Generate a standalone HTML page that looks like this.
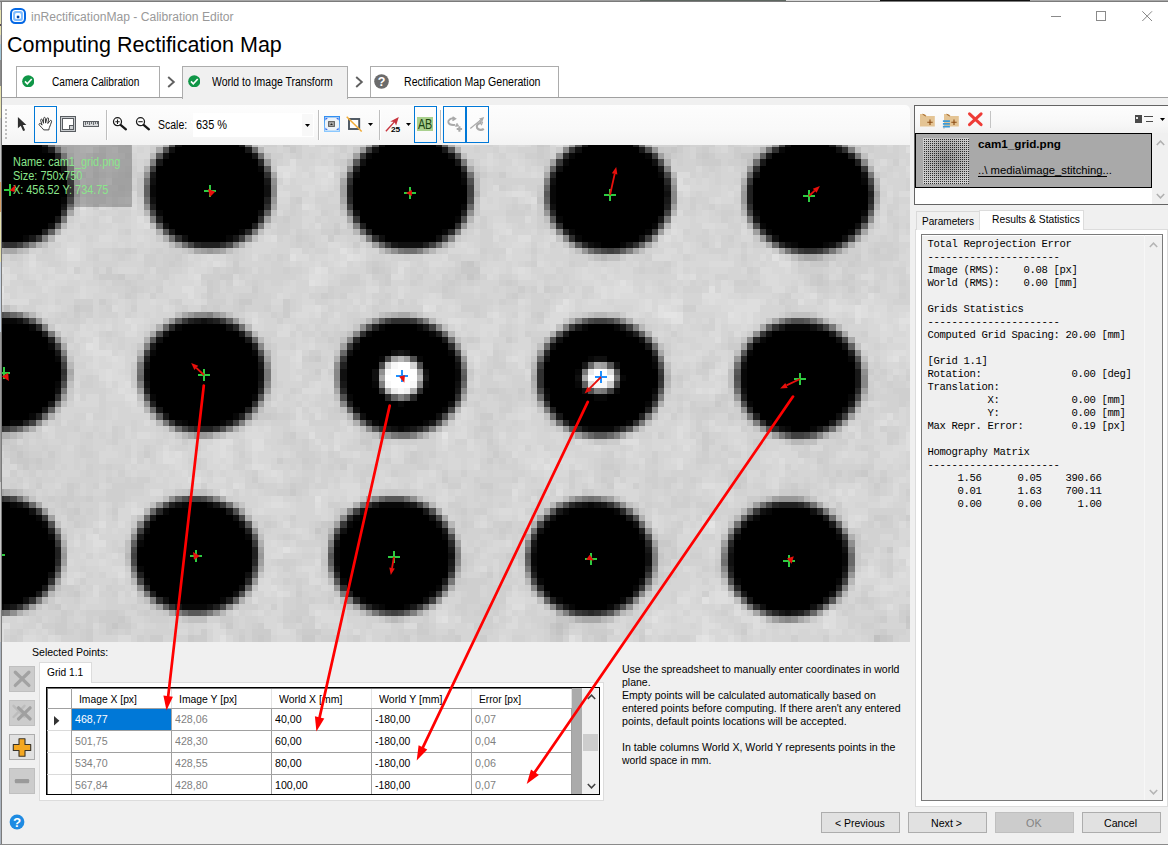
<!DOCTYPE html>
<html><head><meta charset="utf-8"><title>inRectificationMap - Calibration Editor</title>
<style>
html,body{margin:0;padding:0;background:#fff}
body{width:1168px;height:845px;overflow:hidden;position:relative;font-family:"Liberation Sans", sans-serif}
#app{position:absolute;left:0;top:0;width:1168px;height:845px;overflow:hidden;background:#fff}
#app>div,#app>svg,#app>pre,#app>span{position:absolute;display:block}
.t{white-space:pre;transform-origin:0 50%}
</style></head><body><div id="app">
<div style="left:0px;top:0px;width:1168px;height:1px;background:linear-gradient(90deg,#a6a6a6 0 560px,#9c9c9c 560px 640px,#5d6660 640px 786px,#d9d9d9 786px 880px,#111 880px 1030px,#a9a9a9 1030px)"></div>
<div style="left:0px;top:1px;width:1168px;height:1px;background:#7b7b7b"></div>
<div style="left:0px;top:2px;width:1px;height:842px;background:linear-gradient(180deg,#bdbdbd 0 8px,#e6e2ae 8px 22px,#5a4a55 22px 24px,#e6e2ae 24px 33px,#c9c9c9 33px 42px,#9fc4d6 42px 58px,#8b8b8b 58px 84px,#e6e2ae 84px 116px,#c8c8c8 116px 180px,#d9a066 180px 210px,#e6e2ae 210px 260px,#c8d4e2 260px 330px,#9a9a9a 330px 480px,#c7c7c7 480px 640px,#aab4c0 640px)"></div>
<div style="left:1px;top:2px;width:1px;height:842px;background:#7b7b7b"></div>
<div style="left:0px;top:844px;width:1168px;height:1px;background:#8a8a8a"></div>
<svg style="left:10px;top:7.8px" width="16" height="16" viewBox="0 0 16 16"><rect width="16" height="16" rx="5.2" fill="#0568e4"/><rect x="2" y="2" width="12" height="12" rx="3.4" fill="#fff"/><rect x="3.1" y="3.1" width="9.8" height="9.8" rx="2.6" fill="#7fbcff"/><rect x="5" y="5" width="6" height="6" rx="1.6" fill="#fff"/><path d="M6.600 8.200a1.400 1.300 0 0 1 2.800 0z" fill="#8ec4ff"/><rect x="6.800" y="7.900" width="2.500" height="2.300" rx="0.500" fill="#003f9e"/></svg>
<svg style="left:1040px;top:2px" width="128" height="28" viewBox="0 0 128 28" shape-rendering="crispEdges"><g fill="none" stroke="#8a8a8a" stroke-width="1"><path d="M11 14.500h10"/><rect x="56.500" y="9.500" width="9" height="9"/></g><path d="M102.300 9.300l9.700 9.700m0-9.700l-9.700 9.700" stroke="#858585" stroke-width="1" fill="none" shape-rendering="auto"/></svg>
<div style="left:16px;top:66px;width:144px;height:31px;background:#fff;border:1px solid #acacac;border-bottom:none;box-sizing:border-box"></div>
<div style="left:370px;top:66px;width:189px;height:31px;background:#fff;border:1px solid #acacac;border-bottom:none;box-sizing:border-box"></div>
<div style="left:2px;top:97px;width:1166px;height:747px;background:#f0f0f0;border-top:1px solid #a0a0a0;box-sizing:border-box"></div>
<div style="left:182px;top:66px;width:166px;height:33px;background:#f0f0f0;border:1px solid #acacac;border-bottom:none;box-sizing:border-box"></div>
<svg style="left:167px;top:76px" width="9" height="12" viewBox="0 0 9 12"><path d="M1.2 1l5.6 5-5.6 5" fill="none" stroke="#606060" stroke-width="1.9"/></svg>
<svg style="left:355px;top:76px" width="9" height="12" viewBox="0 0 9 12"><path d="M1.2 1l5.6 5-5.6 5" fill="none" stroke="#606060" stroke-width="1.9"/></svg>
<svg style="left:21.7px;top:74.700px" width="12.500" height="12.500" viewBox="0 0 13 13"><circle cx="6.5" cy="6.5" r="6.3" fill="#109647"/><path d="M3.1 6.6l2.4 2.5 4.6-4.9" fill="none" stroke="#fff" stroke-width="1.7"/></svg>
<svg style="left:187.7px;top:74.700px" width="12.500" height="12.500" viewBox="0 0 13 13"><circle cx="6.5" cy="6.5" r="6.3" fill="#109647"/><path d="M3.1 6.6l2.4 2.5 4.6-4.9" fill="none" stroke="#fff" stroke-width="1.7"/></svg>
<svg style="left:374px;top:74px" width="15" height="15" viewBox="0 0 15 15"><circle cx="7.5" cy="7.5" r="7.3" fill="#6b6b6b"/><text x="7.5" y="12" text-anchor="middle" font-family="Liberation Sans, sans-serif" font-weight="bold" font-size="12.5" fill="#fff">?</text></svg>
<div style="left:2px;top:105px;width:908px;height:40px;background:linear-gradient(180deg,#fdfdfd,#f9f9f9 60%,#f3f3f3);border-radius:0 5px 0 0"></div>
<svg style="left:5px;top:109px" width="3" height="32" viewBox="0 0 3 32" shape-rendering="crispEdges"><rect x="0" y="0" width="2" height="2" fill="#bdbdbd"/><rect x="0" y="4" width="2" height="2" fill="#bdbdbd"/><rect x="0" y="8" width="2" height="2" fill="#bdbdbd"/><rect x="0" y="12" width="2" height="2" fill="#bdbdbd"/><rect x="0" y="16" width="2" height="2" fill="#bdbdbd"/><rect x="0" y="20" width="2" height="2" fill="#bdbdbd"/><rect x="0" y="24" width="2" height="2" fill="#bdbdbd"/><rect x="0" y="28" width="2" height="2" fill="#bdbdbd"/></svg>
<div style="left:106px;top:110px;width:2px;height:30px;background:linear-gradient(90deg,#bebebe 50%,#fff 50%)"></div>
<div style="left:318px;top:110px;width:2px;height:30px;background:linear-gradient(90deg,#bebebe 50%,#fff 50%)"></div>
<div style="left:379px;top:110px;width:2px;height:30px;background:linear-gradient(90deg,#bebebe 50%,#fff 50%)"></div>
<div style="left:440px;top:110px;width:2px;height:30px;background:linear-gradient(90deg,#bebebe 50%,#fff 50%)"></div>
<div style="left:34px;top:106px;width:23px;height:37px;border:1px solid #0078d7;box-sizing:border-box;background:rgba(255,255,255,.35)"></div>
<div style="left:414px;top:106px;width:23px;height:37px;border:1px solid #0078d7;box-sizing:border-box;background:rgba(255,255,255,.35)"></div>
<div style="left:443px;top:106px;width:23px;height:37px;border:1px solid #0078d7;box-sizing:border-box;background:rgba(255,255,255,.35)"></div>
<div style="left:466px;top:106px;width:23px;height:37px;border:1px solid #0078d7;box-sizing:border-box;background:rgba(255,255,255,.35)"></div>
<svg style="left:17px;top:116px" width="11" height="16" viewBox="0 0 11 16"><path d="M0.9 0.9v11.3l2.9-2.4 2.3 5.3 2-0.9-2.3-5.2h3.6z" fill="#2e2e2e"/></svg>
<svg style="left:38px;top:116px" width="15" height="15" viewBox="0 0 15 15"><path d="M5.700 13.900C4.800 12.300 3.200 10.900 1.600 9.500C0.400 8.400 1.300 6.900 2.600 7.700L4.100 9.100L2.700 4.500C2.300 3 4 2.600 4.400 3.900L5.500 7.300L5.600 2.500C5.600 1 7.400 1 7.400 2.500L7.600 7.100L8.800 2.700C9.100 1.300 10.900 1.700 10.600 3.100L9.800 7.500L11.900 4.800C12.700 3.800 14.100 4.600 13.500 5.800C12.600 7.900 12.400 9.700 11.400 11.500C11 12.300 10.900 13.100 10.900 13.900z" fill="#fff" stroke="#2f2f2f" stroke-width="0.950" stroke-linejoin="round"/></svg>
<svg style="left:60px;top:116px" width="16" height="16" viewBox="0 0 16 16" shape-rendering="crispEdges"><rect x="0.5" y="0.5" width="15" height="15" fill="#c9cccf" stroke="#585c60"/><rect x="2.500" y="2.500" width="11" height="11" fill="#fff" stroke="#585c60"/><rect x="9.500" y="9.500" width="4" height="4" fill="#cfd2d4" stroke="#585c60"/></svg>
<svg style="left:83px;top:121px" width="16" height="6" viewBox="0 0 16 6" shape-rendering="crispEdges"><rect x="0.5" y="0.5" width="15" height="5" fill="#d6d8da" stroke="#5a5e62"/><path d="M2.500 1v3M4.500 1v2M6.500 1v3M8.500 1v2M10.500 1v3M12.500 1v2M14 1v2" stroke="#6a6e72" fill="none"/></svg>
<svg style="left:112px;top:116px" width="16" height="16" viewBox="0 0 16 16"><circle cx="5.5" cy="5.700" r="4" fill="#fff" stroke="#1a1a1a" stroke-width="1.250"/><path d="M8.600 8.900l5.300 4.400" stroke="#1a1a1a" stroke-width="2.300" stroke-linecap="round"/><path d="M3.300 5.700h4.400M5.500 3.500v4.400" stroke="#1a1a1a" stroke-width="1.100" fill="none"/></svg>
<svg style="left:134.9px;top:116px" width="16" height="16" viewBox="0 0 16 16"><circle cx="5.5" cy="5.700" r="4" fill="#fff" stroke="#1a1a1a" stroke-width="1.250"/><path d="M8.600 8.900l5.300 4.400" stroke="#1a1a1a" stroke-width="2.300" stroke-linecap="round"/><path d="M3.300 5.700h4.400" stroke="#1a1a1a" stroke-width="1.100" fill="none"/></svg>
<svg style="left:324px;top:116px" width="16" height="16" viewBox="0 0 16 16"><defs><linearGradient id="fg" x1="0" y1="0" x2="0" y2="1"><stop offset="0" stop-color="#2f8df0"/><stop offset="1" stop-color="#8ecaff"/></linearGradient></defs><rect width="16" height="16" fill="url(#fg)"/><rect x="1" y="1.400" width="14" height="13.200" fill="#edf2f7"/><path d="M1.400 1.900h2.500l-2.500 2.500zM14.600 1.900h-2.500l2.500 2.500zM1.400 14.100h2.500l-2.500-2.500zM14.600 14.100h-2.500l2.500-2.500z" fill="#3a70f0"/><rect x="4.600" y="5.600" width="5.800" height="4.800" fill="#a8a8a8" stroke="#5a5a5a" stroke-width="1"/><path d="M6.100 8.900h2.800l-1.400-1.700z" fill="#222"/></svg>
<svg style="left:346px;top:116px" width="17" height="17" viewBox="0 0 17 17"><rect x="3" y="3" width="10.200" height="10" fill="#fdfdfd" stroke="#4b5560" stroke-width="1.900"/><path d="M0.700 0.700l15 14.800" stroke="#f2ab35" stroke-width="1.500"/></svg>
<svg style="left:385px;top:116px" width="17" height="17" viewBox="0 0 17 17"><path d="M0.900 15.200L9.600 5.600" stroke="#c8343e" stroke-width="1.400"/><path d="M13.800 1l-2.700 8.400-1.600-3.400-4.300-0.500z" fill="#c8343e"/><text x="5.900" y="15.700" font-family="Liberation Sans, sans-serif" font-size="7.600" font-weight="bold" fill="#000" textLength="9.300" lengthAdjust="spacingAndGlyphs">25</text></svg>
<svg style="left:417px;top:117px" width="16" height="14" viewBox="0 0 16 14"><rect width="16" height="14" fill="#a9d08e"/><text x="0.900" y="12.100" font-family="Liberation Sans, sans-serif" font-size="14.200" fill="#1b4211" textLength="14.400" lengthAdjust="spacingAndGlyphs">AB</text></svg>
<svg style="left:446px;top:116px" width="17" height="17" viewBox="0 0 17 17" fill="none" stroke="#a9a9a9"><path d="M8.300 2.600C4.500 1.700 1.600 4.400 2.400 6.600c.700 2 3.500 2.700 6.800 2.300" stroke-width="1.900"/><path d="M9.700 1l-3.100 1.900 3 1.800" stroke-width="1.300" fill="#a9a9a9" transform="rotate(180 8.100 2.800)"/><path d="M11 7.300l1.600 2.600-3.100.5z" fill="#a9a9a9" stroke-width="0.800"/><path d="M13.400 10.300v5.400M10.700 13h5.400" stroke-width="2.100"/></svg>
<svg style="left:469px;top:116px" width="17" height="17" viewBox="0 0 17 17" fill="none" stroke="#a9a9a9"><path d="M1.300 12.500L13.300 2.600" stroke-width="1.200"/><path d="M15.200 1.100l-2 4.700-3.100-3.200z" fill="#a9a9a9" stroke="none"/><path d="M12.400 7.200c-3.600-.700-5.600 2.700-4.200 4.900 1.300 2 4.500 2.300 6.600.700" stroke-width="2.200"/><path d="M10.200 4.800l3.200 1.400-1.100 3" stroke-width="1.200"/></svg>
<div style="left:193px;top:113px;width:121px;height:24px;background:#fff"></div>
<div style="left:302px;top:114px;width:11px;height:22px;background:#f8f8f8"></div>
<svg style="left:305px;top:124px" width="5" height="3" viewBox="0 0 5 3"><path d="M0 0h5L2.5 3z" fill="#000"/></svg>
<svg style="left:368px;top:123px" width="5" height="3" viewBox="0 0 5 3"><path d="M0 0h5L2.5 3z" fill="#000"/></svg>
<svg style="left:406px;top:123px" width="5" height="3" viewBox="0 0 5 3"><path d="M0 0h5L2.5 3z" fill="#000"/></svg>
<svg style="left:2px;top:145px" width="908" height="497" viewBox="0 0 908 497" shape-rendering="crispEdges"><rect width="908" height="497" fill="rgb(213,213,213)"/>
<path fill="rgb(0,0,0)" d="m0 0h40v2h-40zm180 0h57v2h-57zm203 0h51v2h-51zm203 0h45v2h-45zm203 0h38v2h-38zm-789 2h40v6h-40zm173 0h70v6h-70zm204 0h63v6h-63zm203 0h57v6h-57zm203 0h51v6h-51zm-783 6h53v6h-53zm167 0h83v6h-83zm203 0h76v6h-76zm203 0h70v6h-70zm197 0h76v6h-76zm-770 6h53v7h-53zm161 0h95v7h-95zm203 0h89v7h-89zm203 0h83v7h-83zm197 0h89v7h-89zm-764 7h59v6h-59zm154 0h102v6h-102zm204 0h101v6h-101zm203 0h95v6h-95zm197 0h101v6h-101zm-758 6h59v6h-59zm154 0h108v6h-108zm204 0h101v6h-101zm196 0h102v6h-102zm204 0h101v6h-101zm-758 6h65v7h-65zm154 0h108v7h-108zm197 0h108v7h-108zm203 0h108v7h-108zm197 0h108v7h-108zm-751 7h65v6h-65zm154 0h108v6h-108zm197 0h114v6h-114zm203 0h108v6h-108zm197 0h115v6h-115zm-751 6h65v6h-65zm154 0h108v6h-108zm197 0h114v6h-114zm203 0h108v6h-108zm197 0h115v6h-115zm-751 6h59v7h-59zm154 0h108v7h-108zm197 0h114v7h-114zm203 0h108v7h-108zm197 0h115v7h-115zm-751 7h59v6h-59zm154 0h108v6h-108zm197 0h108v6h-108zm203 0h108v6h-108zm197 0h115v6h-115zm-751 6h59v6h-59zm161 0h95v6h-95zm197 0h101v6h-101zm196 0h108v6h-108zm204 0h101v6h-101zm-758 6h53v7h-53zm161 0h95v7h-95zm197 0h95v7h-95zm203 0h95v7h-95zm197 0h101v7h-101zm-758 7h46v6h-46zm167 0h83v6h-83zm197 0h89v6h-89zm197 0h89v6h-89zm203 0h89v6h-89zm-764 6h40v6h-40zm173 0h64v6h-64zm197 0h70v6h-70zm203 0h70v6h-70zm197 0h76v6h-76zm-770 6h21v7h-21zm186 0h38v7h-38zm197 0h51v7h-51zm197 0h57v7h-57zm197 0h63v7h-63zm-178 7h19v6h-19zm197 0h25v6h-25zm-796 82h27v7h-27zm180 0h44v7h-44zm203 0h32v7h-32zm203 0h26v7h-26zm-586 7h40v6h-40zm167 0h70v6h-70zm203 0h57v6h-57zm197 0h57v6h-57zm203 0h57v6h-57zm-770 6h46v6h-46zm161 0h82v6h-82zm197 0h82v6h-82zm203 0h76v6h-76zm203 0h70v6h-70zm-764 6h46v7h-46zm154 0h96v7h-96zm204 0h88v7h-88zm196 0h89v7h-89zm197 0h89v7h-89zm-751 7h53v6h-53zm154 0h96v6h-96zm197 0h38v6h-38zm57 0h38v6h-38zm140 0h102v6h-102zm203 0h95v6h-95zm-751 6h53v6h-53zm148 0h108v6h-108zm197 0h32v6h-32zm76 0h32v6h-32zm127 0h38v6h-38zm57 0h45v6h-45zm140 0h101v6h-101zm-745 6h59v7h-59zm148 0h108v7h-108zm197 0h32v7h-32zm76 0h32v7h-32zm121 0h38v7h-38zm76 0h32v7h-32zm127 0h108v7h-108zm-745 7h59v6h-59zm148 0h108v6h-108zm197 0h25v6h-25zm82 0h26v6h-26zm115 0h31v6h-31zm76 0h38v6h-38zm127 0h108v6h-108zm-745 6h59v6h-59zm148 0h108v6h-108zm197 0h25v6h-25zm82 0h26v6h-26zm115 0h31v6h-31zm82 0h32v6h-32zm121 0h108v6h-108zm-745 6h53v7h-53zm148 0h108v7h-108zm197 0h25v7h-25zm82 0h26v7h-26zm115 0h31v7h-31zm76 0h38v7h-38zm127 0h108v7h-108zm-745 7h53v6h-53zm148 0h108v6h-108zm197 0h32v6h-32zm76 0h32v6h-32zm127 0h32v6h-32zm70 0h32v6h-32zm127 0h108v6h-108zm-745 6h53v7h-53zm154 0h96v7h-96zm197 0h32v7h-32zm64 0h38v7h-38zm133 0h44v7h-44zm57 0h45v7h-45zm140 0h101v7h-101zm-745 7h46v6h-46zm154 0h96v6h-96zm197 0h45v6h-45zm51 0h44v6h-44zm146 0h95v6h-95zm203 0h95v6h-95zm-751 6h40v6h-40zm161 0h82v6h-82zm197 0h82v6h-82zm196 0h89v6h-89zm197 0h89v6h-89zm-751 6h27v7h-27zm167 0h64v7h-64zm197 0h70v7h-70zm197 0h76v7h-76zm197 0h76v7h-76zm-758 7h8v6h-8zm186 0h32v6h-32zm191 0h44v6h-44zm196 0h51v6h-51zm197 0h57v6h-57zm19 6h19v6h-19zm-789 76h8v6h-8zm186 0h19v6h-19zm-186 6h27v7h-27zm167 0h57v7h-57zm197 0h57v7h-57zm203 0h45v7h-45zm203 0h38v7h-38zm-770 7h34v6h-34zm154 0h77v6h-77zm204 0h69v6h-69zm196 0h70v6h-70zm204 0h63v6h-63zm-758 6h40v7h-40zm148 0h89v7h-89zm203 0h83v7h-83zm197 0h83v7h-83zm197 0h82v7h-82zm-745 7h46v6h-46zm148 0h95v6h-95zm197 0h95v6h-95zm197 0h95v6h-95zm197 0h95v6h-95zm-739 6h46v6h-46zm142 0h101v6h-101zm196 0h102v6h-102zm197 0h102v6h-102zm204 0h95v6h-95zm-739 6h53v7h-53zm142 0h108v7h-108zm196 0h108v7h-108zm197 0h108v7h-108zm197 0h108v7h-108zm-732 7h53v6h-53zm135 0h115v6h-115zm203 0h108v6h-108zm197 0h108v6h-108zm197 0h108v6h-108zm-732 6h53v6h-53zm135 0h115v6h-115zm203 0h108v6h-108zm197 0h108v6h-108zm197 0h108v6h-108zm-732 6h53v7h-53zm135 0h115v7h-115zm203 0h108v7h-108zm197 0h108v7h-108zm197 0h108v7h-108zm-732 7h53v6h-53zm142 0h108v6h-108zm196 0h108v6h-108zm197 0h108v6h-108zm197 0h108v6h-108zm-732 6h46v6h-46zm142 0h101v6h-101zm196 0h108v6h-108zm197 0h108v6h-108zm197 0h108v6h-108zm-732 6h46v7h-46zm148 0h95v7h-95zm197 0h95v7h-95zm197 0h95v7h-95zm197 0h95v7h-95zm-739 7h40v6h-40zm148 0h89v6h-89zm197 0h89v6h-89zm197 0h89v6h-89zm197 0h95v6h-95zm-739 6h34v6h-34zm154 0h77v6h-77zm197 0h76v6h-76zm197 0h83v6h-83zm197 0h82v6h-82zm-745 6h21v7h-21zm167 0h51v7h-51zm197 0h57v7h-57zm197 0h57v7h-57zm190 0h70v7h-70zm-368 7h19v6h-19zm190 0h32v6h-32zm191 0h44v6h-44z"/>
<path fill="rgb(8,8,8)" d="m40 2h6v6h-6zm737 0h6v6h-6zm-413 6h6v6h-6zm203 0h6v6h-6zm76 0h7v6h-7zm-590 6h6v7h-6zm508 0h6v7h-6zm-305 7h6v6h-6zm-197 6h6v6h-6zm292 0h7v6h-7zm305 0h6v6h-6zm-197 6h6v7h-6zm400 0h7v7h-7zm-711 7h6v6h-6zm400 0h6v6h-6zm-400 6h6v6h-6zm400 0h6v6h-6zm-489 6h6v7h-6zm489 0h6v7h-6zm-89 7h6v6h-6zm-305 6h7v6h-7zm597 0h7v6h-7zm108 0h7v6h-7zm-406 6h6v7h-6zm101 0h7v7h-7zm96 7h6v6h-6zm108 0h6v6h-6zm-521 6h6v6h-6zm203 0h6v6h-6zm127 0h6v6h-6zm76 0h7v6h-7zm121 0h6v6h-6zm82 0h7v6h-7zm-825 6h6v7h-6zm203 0h7v7h-7zm349 0h7v7h-7zm19 7h7v6h-7zm26 0h6v6h-6zm171 0h7v6h-7zm32 0h6v6h-6zm-821 76h15v6h-15zm27 6h7v7h-7zm146 0h7v7h-7zm204 0h6v7h-6zm38 0h6v7h-6zm165 0h6v7h-6zm32 0h6v7h-6zm171 0h25v7h-25zm-419 7h6v6h-6zm63 0h7v6h-7zm197 0h7v6h-7zm134 6h6v6h-6zm-712 6h7v7h-7zm305 0h7v7h-7zm-203 7h6v6h-6zm102 0h6v6h-6zm196 0h7v6h-7zm299 0h6v6h-6zm-692 6h6v6h-6zm324 0h6v6h-6zm38 0h6v6h-6zm171 0h6v6h-6zm260 0h7v6h-7zm-196 6h6v7h-6zm-508 7h6v6h-6zm311 0h6v6h-6zm120 0h7v6h-7zm166 0h6v6h-6zm-597 6h6v6h-6zm311 0h6v6h-6zm165 0h6v6h-6zm121 0h6v6h-6zm-686 6h6v7h-6zm317 0h7v7h-7zm51 0h6v7h-6zm152 0h7v7h-7zm166 0h6v7h-6zm-197 7h6v6h-6zm70 0h6v6h-6zm38 0h6v6h-6zm-502 6h6v7h-6zm102 0h6v7h-6zm95 0h6v7h-6zm247 0h13v7h-13zm254 0h7v7h-7zm-450 7h6v6h-6zm247 0h7v6h-7zm102 0h6v6h-6zm-305 6h6v6h-6zm-413 6h7v7h-7zm204 0h6v7h-6zm-223 7h13v6h-13zm172 0h6v6h-6zm38 0h6v6h-6zm152 0h7v6h-7zm51 0h6v6h-6zm146 0h6v6h-6zm57 0h7v6h-7zm140 0h6v6h-6zm-368 6h6v6h-6zm190 0h26v6h-26zm197 0h6v6h-6zm25 0h7v6h-7zm-800 76h7v6h-7zm172 0h6v6h-6zm25 0h6v6h-6zm172 0h25v6h-25zm209 0h6v6h-6zm-425 6h6v7h-6zm400 0h6v7h-6zm51 0h6v7h-6zm152 0h6v7h-6zm-730 7h6v6h-6zm317 0h7v6h-7zm400 0h7v6h-7zm-711 6h6v7h-6zm305 0h6v7h-6zm197 0h6v7h-6zm-400 7h6v6h-6zm-96 6h7v6h-7zm197 0h7v6h-7zm197 0h6v6h-6zm197 0h6v6h-6zm95 0h7v6h-7zm102 0h6v6h-6zm-699 6h7v7h-7zm197 7h6v6h-6zm0 6h6v6h-6zm197 0h6v6h-6zm311 0h6v6h-6zm-508 6h6v7h-6zm197 0h6v7h-6zm311 0h6v7h-6zm-705 7h7v6h-7zm7 12h6v7h-6zm196 0h7v7h-7zm197 0h7v7h-7zm197 0h7v7h-7zm102 0h6v7h-6zm-400 7h6v6h-6zm197 0h6v6h-6zm-204 6h7v6h-7zm-209 6h6v7h-6zm140 0h6v7h-6zm196 0h7v7h-7zm64 0h6v7h-6zm-618 7h2v6h-2zm180 0h25v6h-25zm197 0h6v6h-6zm25 0h6v6h-6zm165 0h6v6h-6zm38 0h7v6h-7z"/>
<path fill="rgb(16,16,16)" d="m173 0h7v2h-7zm204 0h6v2h-6zm406 0h6v2h-6zm-616 2h6v6h-6zm203 0h7v6h-7zm203 0h7v6h-7zm261 0h6v6h-6zm-673 6h6v6h-6zm285 0h7v6h-7zm-88 6h6v7h-6zm292 0h6v7h-6zm-96 7h7v6h-7zm-95 6h6v6h-6zm292 0h7v6h-7zm108 0h7v6h-7zm-711 6h6v7h-6zm400 0h6v7h-6zm-286 7h7v6h-7zm0 6h7v6h-7zm400 0h7v6h-7zm-514 6h6v7h-6zm400 7h6v6h-6zm-292 6h6v6h-6zm95 0h7v6h-7zm-305 13h7v6h-7zm115 0h6v6h-6zm692 0h6v6h-6zm-673 12h6v7h-6zm197 0h6v7h-6zm57 0h6v7h-6zm203 0h6v7h-6zm133 0h7v7h-7zm70 0h6v7h-6zm-444 7h25v6h-25zm190 0h6v6h-6zm197 0h6v6h-6zm44 0h7v6h-7zm-812 76h6v6h-6zm184 0h6v6h-6zm25 6h7v7h-7zm584 0h7v7h-7zm-647 7h6v6h-6zm603 0h6v6h-6zm-610 6h7v6h-7zm400 0h7v6h-7zm83 0h6v6h-6zm197 0h6v6h-6zm-286 6h6v7h-6zm292 0h6v7h-6zm-495 7h6v6h-6zm44 0h7v6h-7zm13 0h6v6h-6zm140 6h6v6h-6zm50 0h13v6h-13zm58 0h6v6h-6zm-508 6h6v7h-6zm311 0h6v7h-6zm159 0h6v7h-6zm127 0h6v7h-6zm-483 7h6v6h-6zm82 0h7v6h-7zm32 0h7v6h-7zm51 0h6v6h-6zm-165 6h6v6h-6zm82 0h7v6h-7zm32 0h7v6h-7zm203 0h7v6h-7zm-431 6h6v7h-6zm311 0h6v7h-6zm-400 7h6v6h-6zm527 0h6v6h-6zm159 0h6v6h-6zm-197 6h6v7h-6zm-96 7h7v6h-7zm-95 6h7v6h-7zm489 0h6v6h-6zm-482 6h6v7h-6zm76 0h6v7h-6zm400 0h6v7h-6zm-661 7h7v6h-7zm216 6h7v6h-7zm13 0h6v6h-6zm178 0h6v6h-6zm197 0h6v6h-6zm-762 76h6v6h-6zm158 0h7v6h-7zm229 0h6v6h-6zm178 0h6v6h-6zm12 0h7v6h-7zm-565 6h7v7h-7zm331 0h6v7h-6zm400 0h6v7h-6zm50 0h7v7h-7zm-577 7h6v6h-6zm196 0h7v6h-7zm121 0h6v6h-6zm-311 6h6v7h-6zm197 0h6v7h-6zm197 0h6v7h-6zm-293 7h7v6h-7zm197 0h7v6h-7zm-203 12h6v7h-6zm197 7h6v6h-6zm311 0h6v6h-6zm-394 6h7v6h-7zm197 0h7v6h-7zm83 0h6v6h-6zm-83 6h7v7h-7zm83 0h6v7h-6zm-394 7h6v6h-6zm197 0h6v6h-6zm311 0h6v6h-6zm-794 6h7v6h-7zm197 0h7v6h-7zm394 6h6v7h-6zm-400 7h6v6h-6zm-6 6h6v6h-6zm596 0h7v6h-7zm-806 6h6v7h-6zm140 0h6v7h-6zm260 0h6v7h-6zm-419 7h6v6h-6zm203 0h6v6h-6zm165 0h7v6h-7zm388 0h6v6h-6zm50 0h7v6h-7zm-25 6h6v6h-6z"/>
<path fill="rgb(24,24,24)" d="m237 0h6v2h-6zm197 0h6v2h-6zm146 0h6v2h-6zm247 0h7v2h-7zm-584 2h7v6h-7zm197 0h6v6h-6zm197 0h6v6h-6zm-387 6h6v6h-6zm514 0h6v6h-6zm-610 6h7v7h-7zm299 0h6v7h-6zm305 0h6v7h-6zm-102 7h6v6h-6zm-508 6h6v6h-6zm114 6h7v7h-7zm400 7h7v6h-7zm0 12h7v7h-7zm-603 7h6v6h-6zm-6 12h6v7h-6zm603 0h6v7h-6zm95 0h7v7h-7zm-584 13h6v6h-6zm-140 6h7v7h-7zm204 0h6v7h-6zm158 7h7v6h-7zm235 0h7v6h-7zm-432 76h7v6h-7zm13 0h6v6h-6zm216 6h6v7h-6zm152 0h7v7h-7zm45 0h6v7h-6zm159 0h6v7h-6zm-540 7h6v6h-6zm324 0h6v6h-6zm266 0h7v6h-7zm-584 6h7v6h-7zm197 0h6v6h-6zm-292 6h6v7h-6zm495 0h7v7h-7zm-590 7h6v6h-6zm343 0h6v6h-6zm-140 12h6v7h-6zm324 0h6v7h-6zm273 7h6v6h-6zm-432 6h6v6h-6zm432 0h6v6h-6zm-597 6h6v7h-6zm82 0h7v7h-7zm515 0h6v7h-6zm-400 7h6v6h-6zm197 6h6v7h-6zm-604 7h7v6h-7zm800 0h7v6h-7zm-806 6h6v6h-6zm114 0h7v6h-7zm7 6h6v7h-6zm393 0h7v7h-7zm-330 7h7v6h-7zm203 0h7v6h-7zm400 0h7v6h-7zm-444 6h6v6h-6zm25 0h7v6h-7zm204 0h6v6h-6zm203 0h6v6h-6zm-604 76h7v6h-7zm159 0h7v6h-7zm38 0h7v6h-7zm165 0h7v6h-7zm26 0h6v6h-6zm-375 6h7v7h-7zm197 0h6v7h-6zm133 0h7v7h-7zm-406 7h6v6h-6zm476 0h7v6h-7zm197 0h6v6h-6zm-82 6h6v7h-6zm88 0h7v7h-7zm-387 7h6v6h-6zm-305 6h7v6h-7zm394 6h6v7h-6zm-83 7h7v6h-7zm197 0h7v6h-7zm83 0h6v6h-6zm-280 12h7v7h-7zm280 7h6v6h-6zm-286 12h6v7h-6zm-400 7h6v6h-6zm-6 6h6v6h-6zm508 0h6v6h-6zm197 0h6v6h-6zm6 6h6v7h-6zm76 0h6v7h-6zm-813 7h7v6h-7zm165 0h7v6h-7zm235 0h7v6h-7zm153 0h6v6h-6zm216 6h6v6h-6zm12 0h7v6h-7z"/>
<path fill="rgb(32,32,32)" d="m631 0h6v2h-6zm215 8h7v6h-7zm7 6h6v7h-6zm-794 7h6v6h-6zm292 0h7v6h-7zm-6 19h6v6h-6zm400 0h6v6h-6zm-400 6h6v6h-6zm400 0h6v6h-6zm121 0h6v6h-6zm-604 6h7v7h-7zm483 0h6v7h-6zm-597 7h6v6h-6zm514 0h7v6h-7zm-203 6h6v6h-6zm-305 6h7v7h-7zm705 0h7v7h-7zm-609 7h6v6h-6zm108 0h6v6h-6zm-318 6h6v6h-6zm324 0h6v6h-6zm-165 13h19v6h-19zm222 0h6v6h-6zm-235 76h6v6h-6zm25 0h7v6h-7zm159 6h7v7h-7zm445 0h6v7h-6zm-775 7h6v6h-6zm394 0h6v6h-6zm197 0h6v6h-6zm-585 6h7v6h-7zm204 6h6v7h-6zm596 7h7v6h-7zm-704 6h6v6h-6zm311 0h6v6h-6zm-115 6h7v7h-7zm-196 26h6v6h-6zm597 6h6v7h-6zm-591 7h6v6h-6zm197 0h6v6h-6zm-102 6h7v6h-7zm305 0h6v6h-6zm95 0h7v6h-7zm-609 6h6v7h-6zm203 0h6v7h-6zm400 0h6v7h-6zm114 0h7v7h-7zm-730 7h6v6h-6zm171 6h19v6h-19zm-25 76h6v6h-6zm610 0h19v6h-19zm-32 13h6v6h-6zm-603 6h6v7h-6zm-96 7h7v6h-7zm197 0h7v6h-7zm394 0h6v6h-6zm197 0h6v6h-6zm6 12h6v7h-6zm-787 7h6v6h-6zm197 0h6v6h-6zm-197 6h6v6h-6zm197 0h6v6h-6zm196 13h7v6h-7zm197 0h7v6h-7zm-508 6h7v6h-7zm394 0h6v6h-6zm311 0h6v6h-6zm-6 13h6v6h-6zm-686 6h6v6h-6zm197 0h6v6h-6zm-121 6h7v7h-7zm324 0h6v7h-6zm-337 7h7v6h-7zm401 0h6v6h-6zm184 6h6v6h-6z"/>
<path fill="rgb(40,40,40)" d="m40 0h6v2h-6zm6 2h7v6h-7zm515 6h6v6h-6zm-305 6h6v7h-6zm292 13h6v6h-6zm114 6h7v7h-7zm-317 19h6v7h-6zm521 0h6v7h-6zm-318 13h6v6h-6zm-305 19h7v6h-7zm203 0h7v6h-7zm115 0h6v6h-6zm-369 13h7v6h-7zm388 0h6v6h-6zm197 0h6v6h-6zm-756 76h6v6h-6zm13 6h6v7h-6zm133 0h6v7h-6zm64 0h6v7h-6zm120 13h7v6h-7zm400 0h7v6h-7zm-305 6h7v7h-7zm96 7h6v6h-6zm-286 6h6v6h-6zm483 0h6v6h-6zm-483 32h6v6h-6zm82 0h7v6h-7zm515 0h6v6h-6zm-470 6h6v7h-6zm25 0h7v7h-7zm337 13h6v6h-6zm-381 13h6v6h-6zm197 0h6v6h-6zm-146 6h6v6h-6zm158 0h7v6h-7zm197 0h7v6h-7zm-749 76h6v6h-6zm546 0h6v6h-6zm203 0h7v6h-7zm26 0h6v6h-6zm-642 6h7v7h-7zm464 0h6v7h-6zm-273 7h6v6h-6zm387 13h7v6h-7zm-400 6h6v6h-6zm114 6h7v7h-7zm197 0h7v7h-7zm83 0h6v7h-6zm-673 19h6v7h-6zm197 0h6v7h-6zm82 13h6v6h-6zm394 0h6v6h-6zm-483 6h7v7h-7zm-101 7h6v6h-6zm393 0h7v6h-7zm197 0h7v6h-7zm-101 6h6v6h-6zm-267 13h6v6h-6zm222 6h6v6h-6zm184 0h7v6h-7z"/>
<path fill="rgb(48,48,48)" d="m770 2h7v6h-7zm70 0h6v6h-6zm-787 6h6v6h-6zm406 13h6v6h-6zm292 0h7v6h-7zm-489 6h7v6h-7zm83 6h6v7h-6zm521 7h6v6h-6zm-604 19h7v6h-7zm483 0h6v6h-6zm-489 12h6v7h-6zm197 7h6v6h-6zm101 0h7v6h-7zm-381 12h7v7h-7zm197 0h7v7h-7zm197 0h6v7h-6zm-565 7h13v6h-13zm216 0h6v6h-6zm413 0h6v6h-6zm203 0h6v6h-6zm-32 6h13v6h-13zm-413 70h19v6h-19zm381 6h7v7h-7zm-412 7h6v6h-6zm387 12h6v7h-6zm-95 7h6v6h-6zm203 12h6v7h-6zm-794 7h6v6h-6zm476 0h7v6h-7zm0 6h7v6h-7zm121 0h6v6h-6zm-121 6h7v7h-7zm-158 7h6v6h-6zm38 0h6v6h-6zm-362 6h6v7h-6zm400 0h6v7h-6zm-203 7h6v6h-6zm381 19h6v6h-6zm127 0h6v6h-6zm-572 6h6v6h-6zm25 0h7v6h-7zm166 0h6v6h-6zm241 0h6v6h-6zm-618 70h2v6h-2zm364 6h6v6h-6zm241 0h7v6h-7zm210 6h6v7h-6zm-769 70h7v7h-7zm292 7h7v6h-7zm-311 12h7v7h-7zm127 0h7v7h-7zm197 0h7v7h-7zm273 0h7v7h-7zm-609 7h6v6h-6zm152 0h6v6h-6zm584 0h7v6h-7zm64 0h6v6h-6zm-235 6h6v6h-6zm12 0h7v6h-7z"/>
<path fill="rgb(56,56,56)" d="m567 2h6v6h-6zm-209 6h6v6h-6zm196 6h7v7h-7zm305 7h7v6h-7zm-114 12h6v7h-6zm121 26h6v6h-6zm-807 6h6v6h-6zm292 6h7v7h-7zm299 13h6v6h-6zm108 0h6v6h-6zm-724 6h6v7h-6zm-34 7h2v6h-2zm383 0h6v6h-6zm413 6h6v6h-6zm19 0h6v6h-6zm-635 70h6v6h-6zm38 0h6v6h-6zm190 0h7v6h-7zm159 6h6v7h-6zm191 7h6v6h-6zm-413 12h6v7h-6zm-7 13h7v6h-7zm318 13h6v6h-6zm-597 6h6v6h-6zm597 6h6v7h-6zm-114 20h6v6h-6zm-375 19h6v6h-6zm-167 6h2v6h-2zm821 0h6v6h-6zm-819 70h6v6h-6zm216 6h6v6h-6zm533 6h7v7h-7zm-711 7h6v6h-6zm298 6h7v7h-7zm191 13h6v6h-6zm-476 6h6v7h-6zm197 0h6v7h-6zm393 32h7v6h-7zm-6 13h6v6h-6zm-203 6h6v6h-6zm-19 13h6v6h-6zm158 6h7v6h-7zm229 0h6v6h-6z"/>
<path fill="rgb(64,64,64)" d="m364 2h6v6h-6zm286 6h6v6h-6zm-502 13h6v6h-6zm-83 19h7v6h-7zm400 0h7v6h-7zm-400 6h7v6h-7zm400 0h7v6h-7zm-120 13h6v6h-6zm317 6h7v6h-7zm-425 25h6v7h-6zm203 0h6v7h-6zm203 0h7v7h-7zm-628 7h6v6h-6zm412 0h7v6h-7zm178 6h7v6h-7zm-222 70h6v6h-6zm209 0h13v6h-13zm-165 6h7v7h-7zm197 0h7v7h-7zm197 0h6v7h-6zm-768 19h6v7h-6zm89 7h6v6h-6zm-83 12h6v7h-6zm476 0h7v7h-7zm77 19h6v7h-6zm-7 7h7v6h-7zm45 13h6v6h-6zm190 12h6v7h-6zm-813 7h7v6h-7zm204 0h6v6h-6zm-229 6h6v6h-6zm787 6h13v7h-13zm-603 64h13v6h-13zm229 6h6v6h-6zm387 0h6v6h-6zm-768 6h6v7h-6zm317 0h7v7h-7zm191 7h6v6h-6zm-407 13h7v6h-7zm705 6h6v6h-6zm-711 19h6v6h-6zm-76 13h6v6h-6zm197 0h6v6h-6zm196 6h7v6h-7zm394 6h6v7h-6zm-413 19h7v7h-7zm127 7h7v6h-7zm-165 6h7v6h-7zm210 0h6v6h-6zm165 0h6v6h-6z"/>
<path fill="rgb(72,72,72)" d="m777 0h6v2h-6zm-115 27h7v6h-7zm-597 6h7v7h-7zm801 0h6v7h-6zm-401 19h7v7h-7zm-317 13h6v6h-6zm597 0h6v6h-6zm108 19h6v6h-6zm-89 6h6v7h-6zm82 0h7v7h-7zm-660 7h6v6h-6zm38 0h7v6h-7zm375 6h6v6h-6zm13 0h6v6h-6zm-26 70h6v6h-6zm19 0h7v6h-7zm235 19h6v6h-6zm-457 19h6v6h-6zm-6 6h6v7h-6zm158 26h7v6h-7zm318 6h6v7h-6zm-407 13h7v6h-7zm-6 6h6v7h-6zm-260 13h6v6h-6zm241 0h6v6h-6zm381 6h6v7h-6zm-794 64h7v6h-7zm191 0h6v6h-6zm565 6h6v6h-6zm-527 13h6v6h-6zm197 0h6v6h-6zm101 6h7v7h-7zm-89 13h7v6h-7zm-317 13h6v6h-6zm0 12h6v7h-6zm6 19h7v7h-7zm394 0h6v7h-6zm-89 7h6v6h-6zm-222 19h6v6h-6zm165 6h6v6h-6zm13 0h6v6h-6z"/>
<path fill="rgb(80,80,80)" d="m834 0h6v2h-6zm-673 2h6v6h-6zm482 0h7v6h-7zm-584 12h6v7h-6zm597 0h6v7h-6zm-311 13h6v6h-6zm120 6h7v7h-7zm-6 38h6v7h-6zm197 7h6v6h-6zm95 0h7v6h-7zm38 25h7v6h-7zm32 0h6v6h-6zm-821 64h2v6h-2zm789 6h13v6h-13zm-425 6h6v7h-6zm-210 7h7v6h-7zm394 6h6v6h-6zm-292 13h6v6h-6zm197 0h6v6h-6zm-45 6h7v6h-7zm445 0h6v6h-6zm-438 6h6v7h-6zm241 0h6v7h-6zm-44 7h6v6h-6zm120 6h7v6h-7zm-673 6h6v7h-6zm527 7h6v6h-6zm-444 6h6v7h-6zm196 0h7v7h-7zm401 7h6v6h-6zm107 6h7v6h-7zm-412 13h6v6h-6zm400 0h6v6h-6zm-826 6h7v6h-7zm210 0h6v6h-6zm-38 70h6v6h-6zm-19 6h6v6h-6zm400 0h6v6h-6zm-330 6h6v7h-6zm196 0h7v7h-7zm204 7h6v6h-6zm-585 6h7v7h-7zm597 13h7v6h-7zm83 44h6v7h-6zm-489 13h6v6h-6zm381 13h6v6h-6zm-51 6h6v6h-6z"/>
<path fill="rgb(88,88,88)" d="m167 0h6v2h-6zm203 0h7v2h-7zm203 0h7v2h-7zm-127 2h7v6h-7zm-292 6h7v6h-7zm299 0h6v6h-6zm-102 6h7v7h-7zm-89 7h7v6h-7zm280 25h6v6h-6zm-477 6h7v7h-7zm483 19h6v7h-6zm-387 13h6v6h-6zm412 13h7v6h-7zm19 6h7v6h-7zm-590 64h6v6h-6zm25 6h7v6h-7zm388 0h6v6h-6zm387 0h6v6h-6zm-248 13h7v6h-7zm280 0h6v6h-6zm-686 6h6v6h-6zm495 0h7v6h-7zm96 13h6v6h-6zm-680 6h6v6h-6zm546 6h7v7h-7zm127 7h7v6h-7zm-273 6h6v6h-6zm273 6h7v7h-7zm-76 7h6v6h-6zm-400 6h6v7h-6zm95 19h7v7h-7zm19 13h7v6h-7zm197 0h6v6h-6zm57 0h7v6h-7zm140 0h6v6h-6zm-172 6h13v7h-13zm191 0h6v7h-6zm-400 64h19v6h-19zm229 6h6v6h-6zm-64 6h6v7h-6zm-305 13h7v7h-7zm197 0h6v7h-6zm-108 7h6v6h-6zm-279 6h6v6h-6zm197 0h6v6h-6zm476 0h6v6h-6zm-400 19h6v6h-6zm197 0h6v6h-6zm-191 25h6v7h-6zm495 19h7v7h-7zm-469 7h6v6h-6zm-172 6h13v6h-13zm191 0h6v6h-6zm228 0h7v6h-7z"/>
<path fill="rgb(96,96,96)" d="m758 8h6v6h-6zm-210 13h6v6h-6zm-406 19h6v6h-6zm0 6h6v6h-6zm400 6h6v7h-6zm-280 13h7v6h-7zm604 0h6v6h-6zm-813 13h6v6h-6zm101 0h7v6h-7zm705 0h7v6h-7zm-813 6h7v6h-7zm-25 13h6v6h-6zm597 6h6v6h-6zm-445 70h7v6h-7zm51 0h7v6h-7zm153 0h6v6h-6zm203 0h6v6h-6zm32 0h6v6h-6zm171 0h6v6h-6zm-19 6h6v7h-6zm-521 7h7v6h-7zm394 0h6v6h-6zm209 12h7v7h-7zm-387 26h6v6h-6zm121 12h6v7h-6zm-191 13h7v7h-7zm-343 13h7v6h-7zm108 6h7v7h-7zm654 19h7v7h-7zm-603 64h6v6h-6zm-76 44h6v7h-6zm197 19h6v7h-6zm197 0h6v7h-6zm-273 13h6v6h-6zm-210 19h6v6h-6zm794 0h6v6h-6zm-603 6h6v7h-6zm-210 7h6v6h-6zm140 0h6v6h-6zm38 6h6v6h-6zm203 0h6v6h-6z"/>
<path fill="rgb(104,104,104)" d="m440 0h6v2h-6zm197 0h6v2h-6zm-387 2h6v6h-6zm-185 25h7v6h-7zm680 0h6v6h-6zm-203 13h6v6h-6zm-77 19h7v6h-7zm-107 25h6v6h-6zm19 13h6v6h-6zm260 0h6v6h-6zm133 0h7v6h-7zm-762 70h7v6h-7zm153 12h6v7h-6zm279 7h6v6h-6zm-190 6h6v6h-6zm292 6h6v7h-6zm-204 7h7v6h-7zm197 6h7v6h-7zm51 6h6v7h-6zm-451 13h7v6h-7zm324 6h6v7h-6zm-57 13h6v7h-6zm-254 13h6v6h-6zm197 0h6v6h-6zm-305 6h6v7h-6zm508 0h6v7h-6zm-190 7h6v6h-6zm-343 6h6v6h-6zm571 6h6v7h-6zm19 0h7v7h-7zm-432 64h7v6h-7zm204 0h6v6h-6zm-350 6h7v6h-7zm121 6h6v7h-6zm476 0h7v7h-7zm-482 7h6v6h-6zm597 0h6v6h-6zm88 0h7v6h-7zm-190 6h6v7h-6zm197 0h6v7h-6zm-508 26h6v6h-6zm520 6h7v6h-7zm0 6h7v7h-7zm-717 7h6v6h-6zm-76 6h6v6h-6zm590 6h7v7h-7zm-400 7h7v6h-7zm489 6h7v6h-7zm-190 6h6v7h-6zm197 0h6v7h-6zm-559 13h6v6h-6zm628 0h7v6h-7z"/>
<path fill="rgb(112,112,112)" d="m243 0h7v2h-7zm521 2h6v6h-6zm-508 6h6v6h-6zm495 6h7v7h-7zm-286 13h7v6h-7zm-323 6h6v7h-6zm0 19h6v7h-6zm203 13h6v6h-6zm-178 25h6v7h-6zm13 7h6v6h-6zm254 0h6v6h-6zm406 0h6v6h-6zm-438 6h13v6h-13zm184 0h6v6h-6zm222 70h7v6h-7zm-571 6h6v7h-6zm209 13h7v6h-7zm204 6h6v7h-6zm82 19h7v7h-7zm-597 7h7v6h-7zm477 6h6v6h-6zm120 13h7v6h-7zm-197 6h7v7h-7zm-82 7h6v6h-6zm-210 12h7v7h-7zm311 7h7v6h-7zm-381 6h7v6h-7zm654 0h7v6h-7zm-431 6h12v7h-12zm-381 64h6v6h-6zm387 0h6v6h-6zm184 0h6v6h-6zm-362 6h7v6h-7zm134 0h6v6h-6zm400 0h6v6h-6zm50 0h7v6h-7zm-76 19h7v7h-7zm-203 7h6v6h-6zm-6 19h6v6h-6zm196 12h7v7h-7zm-184 32h7v6h-7zm-114 13h6v6h-6zm-421 6h2v6h-2zm758 0h6v6h-6z"/>
<path fill="rgb(120,120,120)" d="m853 8h6v6h-6zm-394 6h6v7h-6zm407 13h6v6h-6zm-324 32h6v6h-6zm-483 12h6v7h-6zm603 0h7v7h-7zm-406 7h6v6h-6zm-6 6h6v6h-6zm146 19h6v6h-6zm387 0h6v6h-6zm44 0h7v6h-7zm-812 64h6v6h-6zm812 12h7v7h-7zm-781 7h7v6h-7zm610 25h6v6h-6zm-521 6h7v7h-7zm324 0h6v7h-6zm-197 7h7v6h-7zm318 0h6v6h-6zm-318 6h7v6h-7zm-203 13h6v6h-6zm540 0h6v6h-6zm-546 13h6v6h-6zm197 6h6v6h-6zm393 6h7v7h-7zm102 0h6v7h-6zm-584 7h6v6h-6zm476 0h6v6h-6zm-248 12h7v7h-7zm388 0h6v7h-6zm-197 64h6v6h-6zm12 0h7v6h-7zm-171 6h6v6h-6zm400 6h6v7h-6zm25 39h7v6h-7zm-127 6h7v6h-7zm-393 13h6v6h-6zm197 0h6v6h-6zm323 0h7v6h-7zm-400 12h7v7h-7zm-400 7h7v6h-7zm96 6h6v6h-6zm196 0h7v6h-7zm-304 6h6v7h-6zm711 7h6v6h-6zm76 0h6v6h-6zm-819 6h6v6h-6zm203 0h6v6h-6zm165 0h7v6h-7z"/>
<path fill="rgb(128,128,128)" d="m846 2h7v6h-7zm-698 12h6v7h-6zm514 7h7v6h-7zm-120 12h6v7h-6zm-477 26h7v6h-7zm83 12h6v7h-6zm597 0h6v7h-6zm-394 7h7v6h-7zm102 6h6v6h-6zm-413 6h6v7h-6zm324 0h6v7h-6zm-133 7h6v6h-6zm184 6h6v6h-6zm209 0h7v6h-7zm-419 64h6v6h-6zm216 6h6v6h-6zm356 0h6v6h-6zm-737 6h6v7h-6zm521 0h6v7h-6zm70 0h6v7h-6zm-489 19h6v7h-6zm-83 7h6v6h-6zm76 31h7v7h-7zm242 0h6v7h-6zm215 7h7v6h-7zm-196 6h6v7h-6zm260 0h6v7h-6zm197 7h6v6h-6zm-311 6h6v6h-6zm-305 13h6v6h-6zm514 0h7v6h-7zm-527 6h7v6h-7zm203 0h7v6h-7zm-19 6h7v7h-7zm172 0h6v7h-6zm32 0h6v7h-6zm-58 70h7v6h-7zm191 6h6v7h-6zm-610 13h7v7h-7zm191 19h6v7h-6zm127 13h6v6h-6zm197 0h6v6h-6zm0 6h6v7h-6zm190 26h6v6h-6zm-692 12h6v7h-6zm197 0h6v7h-6zm-172 13h7v6h-7zm235 0h7v6h-7zm153 0h6v6h-6z"/>
<path fill="rgb(136,136,136)" d="m46 0h7v2h-7zm7 2h6v6h-6zm508 0h6v6h-6zm298 12h7v7h-7zm-590 26h6v6h-6zm0 6h6v6h-6zm400 0h6v6h-6zm0 6h6v7h-6zm-115 32h7v6h-7zm-311 6h7v7h-7zm203 0h7v7h-7zm115 0h6v7h-6zm-534 7h7v6h-7zm165 70h13v6h-13zm381 6h7v6h-7zm45 0h6v6h-6zm-184 6h6v7h-6zm-83 7h7v6h-7zm-298 6h6v6h-6zm292 0h6v6h-6zm400 0h6v6h-6zm-489 6h6v7h-6zm597 7h6v6h-6zm-591 12h7v7h-7zm70 7h6v6h-6zm0 6h6v6h-6zm527 0h7v6h-7zm-597 6h7v7h-7zm153 0h6v7h-6zm444 0h7v7h-7zm-400 7h6v6h-6zm-121 13h7v6h-7zm312 6h6v6h-6zm-616 13h6v6h-6zm781 12h6v7h-6zm-604 64h7v6h-7zm159 0h7v6h-7zm203 0h7v6h-7zm-228 12h6v7h-6zm-7 7h7v6h-7zm-285 13h6v6h-6zm393 0h7v6h-7zm394 0h6v6h-6zm-711 6h6v6h-6zm394 6h6v7h-6zm-70 7h6v6h-6zm197 0h6v6h-6zm69 0h7v6h-7zm-266 12h6v7h-6zm266 7h7v6h-7zm-190 19h6v6h-6zm108 6h6v6h-6zm-6 6h6v7h-6zm-83 7h6v6h-6zm64 6h6v6h-6zm171 6h6v7h-6z"/>
<path fill="rgb(144,144,144)" d="m840 0h6v2h-6zm-286 8h7v6h-7zm-209 13h6v6h-6zm-203 6h6v6h-6zm127 6h6v7h-6zm400 7h6v6h-6zm-527 19h6v6h-6zm323 6h7v6h-7zm401 6h6v7h-6zm-477 32h7v6h-7zm-19 70h7v6h-7zm445 0h6v6h-6zm-457 6h6v7h-6zm393 7h7v6h-7zm-298 12h6v7h-6zm-121 19h6v7h-6zm45 7h6v6h-6zm482 0h7v6h-7zm-527 12h6v7h-6zm-190 20h6v6h-6zm597 6h6v6h-6zm-718 19h6v6h-6zm343 0h6v6h-6zm19 6h6v7h-6zm-216 64h6v6h-6zm241 0h7v6h-7zm191 0h6v6h-6zm-445 6h7v6h-7zm464 0h6v6h-6zm-368 26h6v6h-6zm393 0h7v6h-7zm83 0h6v6h-6zm120 12h7v7h-7zm-196 26h6v6h-6zm-521 6h6v6h-6zm6 13h7v6h-7zm591 0h6v6h-6zm-502 19h7v6h-7zm400 0h7v6h-7zm-616 6h7v6h-7zm769 6h6v7h-6zm12 0h7v7h-7z"/>
<path fill="rgb(152,152,152)" d="m770 0h7v2h-7zm-412 2h6v6h-6zm292 0h6v6h-6zm-591 6h6v6h-6zm203 6h7v7h-7zm-197 7h7v6h-7zm680 0h6v6h-6zm-6 25h6v6h-6zm-470 6h6v7h-6zm470 0h6v7h-6zm-197 13h6v6h-6zm-83 13h6v6h-6zm89 0h6v6h-6zm102 12h6v7h-6zm108 0h6v7h-6zm-553 13h6v6h-6zm375 0h6v6h-6zm-394 64h6v6h-6zm25 0h7v6h-7zm-177 6h6v6h-6zm133 0h6v6h-6zm64 0h6v6h-6zm304 32h7v6h-7zm-400 6h7v6h-7zm324 0h6v6h-6zm273 0h7v6h-7zm0 38h7v7h-7zm-476 7h6v6h-6zm305 25h6v6h-6zm197 0h6v6h-6zm-566 6h13v7h-13zm585 64h19v6h-19zm-737 12h6v7h-6zm19 45h6v6h-6zm197 0h6v6h-6zm267 19h6v6h-6zm323 0h7v6h-7zm-596 6h6v7h-6zm82 7h6v6h-6zm108 6h6v6h-6zm-6 6h6v7h-6zm-223 13h7v6h-7z"/>
<path fill="rgb(160,160,160)" d="m567 0h6v2h-6zm-216 8h7v6h-7zm305 0h6v6h-6zm-108 6h6v7h-6zm121 19h6v7h-6zm-331 7h7v6h-7zm401 0h6v6h-6zm-401 6h7v6h-7zm534 0h6v6h-6zm-203 13h6v6h-6zm-407 12h7v7h-7zm394 13h6v6h-6zm95 0h7v6h-7zm102 6h6v7h-6zm-680 7h7v6h-7zm197 0h7v6h-7zm197 0h6v6h-6zm-368 6h6v6h-6zm12 0h7v6h-7zm210 0h6v6h-6zm413 0h6v6h-6zm-813 64h6v6h-6zm317 31h7v7h-7zm401 0h6v7h-6zm-477 13h7v6h-7zm127 0h7v6h-7zm13 0h6v6h-6zm197 6h6v7h-6zm-184 7h6v6h-6zm-280 19h7v6h-7zm127 0h7v6h-7zm597 0h7v6h-7zm-800 6h6v7h-6zm387 19h7v7h-7zm400 0h7v7h-7zm-406 7h6v6h-6zm400 0h6v6h-6zm-209 6h6v6h-6zm-426 6h6v7h-6zm172 0h6v7h-6zm38 0h6v7h-6zm158 0h7v7h-7zm197 0h7v7h-7zm-749 64h6v6h-6zm546 0h6v6h-6zm38 0h7v6h-7zm165 0h7v6h-7zm26 0h6v6h-6zm-45 6h7v6h-7zm-514 6h6v7h-6zm-191 7h7v6h-7zm489 0h7v6h-7zm-203 6h6v7h-6zm-6 13h6v6h-6zm127 6h6v7h-6zm197 0h6v7h-6zm69 0h7v7h-7zm-660 7h6v6h-6zm197 0h6v6h-6zm-197 12h6v7h-6zm197 0h6v7h-6zm197 7h6v6h-6zm-127 6h6v6h-6zm393 0h7v6h-7zm-666 6h6v7h-6zm590 7h7v6h-7zm-616 19h7v6h-7zm127 0h7v6h-7zm197 0h7v6h-7zm13 6h6v6h-6zm451 0h6v6h-6zm-45 6h7v7h-7z"/>
<path fill="rgb(168,168,168)" d="m364 0h6v2h-6zm-210 2h7v6h-7zm311 19h7v6h-7zm-196 6h6v6h-6zm273 0h6v6h-6zm-204 6h7v7h-7zm0 19h7v7h-7zm534 0h6v7h-6zm-603 7h6v6h-6zm470 0h6v6h-6zm-674 6h7v6h-7zm280 6h6v7h-6zm514 13h7v6h-7zm-419 13h6v6h-6zm203 0h7v6h-7zm-641 6h13v6h-13zm190 0h7v6h-7zm26 0h6v6h-6zm165 0h6v6h-6zm248 0h6v6h-6zm146 0h6v6h-6zm25 6h13v7h-13zm-622 58h6v6h-6zm38 0h6v6h-6zm178 0h12v6h-12zm374 6h7v6h-7zm-12 6h6v7h-6zm-610 7h6v6h-6zm692 0h6v6h-6zm6 6h7v6h-7zm-787 6h6v7h-6zm597 7h6v6h-6zm-64 12h7v7h-7zm267 0h7v7h-7zm-794 7h7v6h-7zm312 6h6v6h-6zm152 0h6v6h-6zm51 0h6v6h-6zm-248 13h6v6h-6zm127 6h6v7h-6zm76 7h7v6h-7zm-368 25h6v6h-6zm19 6h6v7h-6zm432 0h6v7h-6zm-618 57h2v7h-2zm364 7h6v6h-6zm-330 6h6v6h-6zm781 0h6v6h-6zm-381 6h6v7h-6zm108 0h6v7h-6zm-102 7h6v6h-6zm210 57h6v6h-6zm-483 38h6v6h-6zm248 0h6v6h-6zm139 0h7v6h-7zm197 0h7v6h-7zm-171 6h19v7h-19zm216 0h6v7h-6z"/>
<path fill="rgb(176,176,176)" d="m161 0h6v2h-6zm285 0h7v2h-7zm197 0h7v2h-7zm-190 2h6v6h-6zm305 0h6v6h-6zm-7 6h7v6h-7zm-89 6h7v7h-7zm-520 7h6v6h-6zm724 0h6v6h-6zm-127 12h6v7h-6zm133 7h6v6h-6zm-400 6h6v6h-6zm-419 38h6v6h-6zm101 0h7v6h-7zm7 6h6v7h-6zm-127 7h6v6h-6zm203 0h6v6h-6zm527 0h6v6h-6zm82 0h7v6h-7zm-846 6h2v6h-2zm796 6h6v7h-6zm19 0h6v7h-6zm-426 58h7v6h-7zm178 6h6v6h-6zm57 0h7v6h-7zm-470 6h7v7h-7zm394 7h6v6h-6zm95 0h7v6h-7zm-501 6h6v6h-6zm400 0h6v6h-6zm-280 13h7v6h-7zm70 6h6v6h-6zm197 13h6v6h-6zm-464 6h7v6h-7zm597 0h7v6h-7zm-133 6h6v7h-6zm-146 7h6v6h-6zm25 0h7v6h-7zm248 13h6v6h-6zm-610 12h7v7h-7zm102 0h6v7h-6zm203 7h7v6h-7zm-324 6h7v6h-7zm204 0h6v6h-6zm603 0h6v6h-6zm-834 6h8v7h-8zm821 0h6v7h-6zm-819 57h6v7h-6zm216 7h6v6h-6zm13 6h6v6h-6zm120 0h7v6h-7zm280 6h6v7h-6zm-388 7h7v6h-7zm394 0h6v6h-6zm-108 6h6v7h-6zm-400 7h6v6h-6zm394 6h6v6h-6zm323 0h7v6h-7zm-787 6h6v7h-6zm197 0h6v7h-6zm0 26h6v6h-6zm190 19h7v6h-7zm-203 6h7v6h-7zm-6 6h6v7h-6zm597 0h6v7h-6zm-407 7h7v6h-7zm-412 6h6v6h-6zm558 6h7v7h-7z"/>
<path fill="rgb(184,184,184)" d="m256 2h6v6h-6zm-108 6h6v6h-6zm-83 6h7v7h-7zm280 0h6v7h-6zm324 13h6v6h-6zm-197 6h6v7h-6zm400 0h6v7h-6zm-400 7h6v6h-6zm-400 6h6v6h-6zm266 13h7v6h-7zm534 0h6v6h-6zm-730 6h6v6h-6zm527 0h6v6h-6zm70 0h6v6h-6zm-274 6h7v7h-7zm-406 7h6v6h-6zm603 0h7v6h-7zm83 0h6v6h-6zm-394 6h7v6h-7zm-305 6h7v7h-7zm-31 13h6v6h-6zm412 0h7v6h-7zm172 6h6v7h-6zm-572 58h7v6h-7zm356 0h6v6h-6zm25 0h7v6h-7zm184 0h13v6h-13zm-228 6h6v6h-6zm63 0h7v6h-7zm394 0h6v6h-6zm-578 6h7v7h-7zm394 0h6v7h-6zm197 0h6v7h-6zm-584 7h6v6h-6zm196 0h7v6h-7zm-190 6h6v6h-6zm394 0h6v6h-6zm-515 13h7v6h-7zm261 6h6v6h-6zm-331 6h7v7h-7zm464 0h6v7h-6zm133 7h7v6h-7zm-247 6h6v6h-6zm247 6h7v7h-7zm-133 7h6v6h-6zm330 6h7v7h-7zm-806 13h6v6h-6zm89 0h6v6h-6zm311 0h6v6h-6zm400 0h6v6h-6zm-603 6h6v7h-6zm95 0h6v7h-6zm-191 7h7v6h-7zm394 0h6v6h-6zm-114 6h6v6h-6zm-426 6h7v7h-7zm172 0h6v7h-6zm31 0h7v7h-7zm210 0h6v7h-6zm368 7h13v6h-13zm-781 50h7v7h-7zm407 7h6v6h-6zm349 0h6v6h-6zm38 0h6v6h-6zm-375 6h7v6h-7zm121 0h6v6h-6zm-406 6h6v7h-6zm597 0h6v7h-6zm88 0h7v7h-7zm-95 7h7v6h-7zm102 0h6v6h-6zm-388 6h7v7h-7zm-120 7h6v6h-6zm-203 25h6v6h-6zm-64 13h6v6h-6zm394 6h6v6h-6zm-324 6h6v7h-6zm394 0h6v7h-6zm323 0h7v7h-7zm-800 13h7v6h-7zm794 0h6v6h-6zm-800 6h6v7h-6zm178 13h6v6h-6zm400 0h6v6h-6zm-229 6h7v7h-7zm210 0h6v7h-6zm165 0h6v7h-6zm38 0h6v7h-6z"/>
<path fill="rgb(192,192,192)" d="m250 0h6v2h-6zm603 2h6v6h-6zm-591 6h7v6h-7zm197 0h6v6h-6zm400 0h7v6h-7zm-114 6h6v7h-6zm-203 7h6v6h-6zm-204 6h7v6h-7zm134 0h6v6h-6zm-400 6h6v7h-6zm0 7h6v6h-6zm400 12h6v7h-6zm70 19h6v7h-6zm-394 7h6v6h-6zm718 0h6v6h-6zm-610 6h6v6h-6zm-6 6h6v7h-6zm108 0h6v7h-6zm-318 7h6v6h-6zm127 0h6v6h-6zm-146 6h6v6h-6zm165 0h6v6h-6zm38 0h7v6h-7zm153 0h6v6h-6zm196 0h7v6h-7zm64 0h6v6h-6zm203 0h6v6h-6zm-248 6h7v7h-7zm13 0h13v7h-13zm184 0h7v7h-7zm32 0h6v7h-6zm-819 51h6v7h-6zm171 7h7v6h-7zm51 0h7v6h-7zm153 0h6v6h-6zm209 0h6v6h-6zm19 0h13v6h-13zm184 0h19v6h-19zm-628 6h6v6h-6zm279 6h6v7h-6zm114 0h7v7h-7zm-501 7h6v6h-6zm292 0h6v6h-6zm-7 6h7v6h-7zm115 0h6v6h-6zm82 6h7v7h-7zm121 0h6v7h-6zm197 0h6v7h-6zm-394 7h6v6h-6zm273 0h7v6h-7zm127 6h7v6h-7zm-197 6h7v7h-7zm64 7h6v6h-6zm0 6h6v6h-6zm-661 6h7v7h-7zm661 0h6v7h-6zm-591 13h7v7h-7zm127 0h7v7h-7zm70 0h6v7h-6zm-273 7h6v6h-6zm673 0h7v6h-7zm-476 6h6v6h-6zm82 0h7v6h-7zm204 6h6v7h-6zm108 0h6v7h-6zm89 0h6v7h-6zm-699 7h6v6h-6zm203 0h7v6h-7zm400 0h7v6h-7zm102 0h6v6h-6zm-387 6h6v6h-6zm12 6h7v7h-7zm197 0h6v7h-6zm197 0h6v7h-6zm38 7h13v6h-13zm-787 50h6v7h-6zm171 0h19v7h-19zm-25 7h6v6h-6zm400 0h6v6h-6zm51 0h6v6h-6zm-464 6h6v6h-6zm476 0h7v6h-7zm-286 6h7v7h-7zm-203 7h7v6h-7zm-82 6h6v7h-6zm197 0h6v7h-6zm393 0h7v7h-7zm83 0h6v7h-6zm114 0h6v7h-6zm-781 13h6v6h-6zm197 0h6v6h-6zm197 0h6v6h-6zm197 0h6v6h-6zm69 0h7v6h-7zm-596 6h6v7h-6zm0 7h6v6h-6zm0 12h6v7h-6zm203 19h6v7h-6zm324 0h6v7h-6zm69 0h7v7h-7zm-666 7h6v6h-6zm82 6h7v6h-7zm394 0h6v6h-6zm-387 6h6v7h-6zm196 0h7v7h-7zm197 0h7v7h-7zm197 0h7v7h-7zm-584 7h6v6h-6zm83 0h6v6h-6zm114 0h6v6h-6zm394 0h6v6h-6zm88 0h7v6h-7zm-469 6h6v6h-6zm-172 6h19v7h-19zm197 0h6v7h-6zm13 0h6v7h-6zm171 0h6v7h-6zm38 0h7v7h-7zm-51 7h7v6h-7zm318 12h6v7h-6z"/>
<path fill="rgb(195,195,195)" d="m662 8h7v6h-7zm-127 44h7v7h-7zm-266 13h6v6h-6zm-254 222h6v7h-6zm203 0h6v7h-6zm-191 64h7v6h-7zm515 108h6v6h-6zm-521 6h6v6h-6zm533 19h7v6h-7z"/>
<path fill="rgb(198,198,198)" d="m764 0h6v2h-6zm82 0h7v2h-7zm-190 2h6v6h-6zm13 0h6v6h-6zm70 6h12v6h-12zm-274 6h7v7h-7zm274 13h6v6h-6zm-604 6h7v7h-7zm0 7h7v6h-7zm0 6h7v6h-7zm337 13h6v6h-6zm-134 6h7v6h-7zm7 13h6v6h-6zm209 12h7v7h-7zm273 19h7v7h-7zm-362 7h7v6h-7zm0 13h7v6h-7zm-50 38h6v6h-6zm368 0h6v6h-6zm25 0h7v6h-7zm-571 6h6v6h-6zm527 0h6v6h-6zm-413 6h7v7h-7zm-292 13h6v6h-6zm680 0h6v6h-6zm-407 13h6v6h-6zm-267 6h7v6h-7zm464 0h6v6h-6zm133 32h7v6h-7zm-25 38h6v6h-6zm114 0h7v6h-7zm-751 13h2v6h-2zm592 0h13v6h-13zm191 0h6v6h-6zm-768 12h6v7h-6zm165 38h6v7h-6zm578 7h6v6h-6zm50 0h7v6h-7zm-571 6h6v6h-6zm508 0h6v6h-6zm-413 13h6v6h-6zm-6 6h6v7h-6zm-13 7h6v6h-6zm203 25h7v6h-7zm140 0h6v6h-6zm-337 6h7v7h-7zm-69 26h6v6h-6zm82 6h6v6h-6zm-298 13h6v6h-6zm597 0h6v6h-6zm-470 6h6v6h-6zm260 0h6v6h-6zm203 0h7v6h-7zm-444 6h6v7h-6zm374 0h13v7h-13zm350 0h4v7h-4zm-794 7h6v6h-6zm438 0h6v6h-6zm13 0h6v6h-6zm317 12h7v7h-7z"/>
<path fill="rgb(201,201,201)" d="m53 0h6v2h-6zm228 0h7v2h-7zm254 0h7v2h-7zm-247 2h6v6h-6zm63 0h7v6h-7zm311 0h7v6h-7zm38 6h7v6h-7zm-431 13h6v6h-6zm-197 6h6v6h-6zm463 19h7v6h-7zm-463 6h6v7h-6zm400 13h6v6h-6zm400 0h6v6h-6zm-610 13h7v6h-7zm70 6h6v6h-6zm121 6h6v7h-6zm298 0h7v7h-7zm-305 7h7v6h-7zm115 0h6v6h-6zm-381 6h6v6h-6zm406 6h6v7h-6zm-127 7h6v6h-6zm349 0h19v6h-19zm-438 6h7v7h-7zm89 0h19v7h-19zm-343 7h7v6h-7zm699 0h6v6h-6zm0 6h6v6h-6zm-578 19h13v6h-13zm-165 6h6v7h-6zm508 7h6v6h-6zm-540 6h6v6h-6zm6 6h7v7h-7zm89 19h7v7h-7zm127 0h7v7h-7zm51 13h6v6h-6zm-184 13h6v6h-6zm336 0h7v6h-7zm-336 6h6v6h-6zm-64 13h7v6h-7zm464 6h6v7h-6zm-70 7h6v6h-6zm254 0h6v6h-6zm-178 6h7v6h-7zm-279 6h13v7h-13zm-19 13h6v6h-6zm317 0h7v6h-7zm-381 6h7v7h-7zm191 0h6v7h-6zm260 0h7v7h-7zm203 0h7v7h-7zm-825 7h6v6h-6zm356 0h12v6h-12zm-350 6h7v6h-7zm7 13h12v6h-12zm19 0h6v6h-6zm-13 6h6v6h-6zm711 6h7v7h-7zm127 0h7v7h-7zm-127 13h7v6h-7zm-559 6h7v7h-7zm32 0h6v7h-6zm83 0h6v7h-6zm95 0h13v7h-13zm197 0h6v7h-6zm209 0h7v7h-7zm-431 7h6v6h-6zm-286 12h6v7h-6zm457 7h6v6h-6zm-400 6h6v7h-6zm190 0h7v7h-7zm534 13h6v6h-6zm-197 6h13v7h-13zm197 0h6v7h-6zm32 7h6v6h-6zm-566 6h7v6h-7zm534 0h6v6h-6zm-394 6h6v7h-6zm57 0h7v7h-7zm140 0h6v7h-6zm197 0h6v7h-6zm-140 7h6v6h-6zm-654 6h6v6h-6zm197 0h6v6h-6zm197 6h6v7h-6zm-381 13h6v6h-6zm571 0h7v6h-7zm83 0h6v6h-6zm-89 6h6v7h-6zm-584 7h6v6h-6zm63 12h7v7h-7zm108 7h7v6h-7zm680 0h4v6h-4zm-356 6h6v6h-6zm-362 6h6v7h-6zm70 0h6v7h-6zm44 0h13v7h-13zm254 0h7v7h-7zm45 0h6v7h-6zm286 0h6v7h-6z"/>
<path fill="rgb(204,204,204)" d="m288 0h6v2h-6zm70 0h6v2h-6zm184 0h6v2h-6zm19 0h6v2h-6zm114 0h6v2h-6zm-616 2h6v6h-6zm476 0h7v6h-7zm19 0h7v6h-7zm121 0h6v6h-6zm25 0h7v6h-7zm32 0h7v6h-7zm19 0h7v6h-7zm-216 6h7v6h-7zm134 0h6v6h-6zm25 0h6v6h-6zm13 0h6v6h-6zm25 0h7v6h-7zm-463 6h6v7h-6zm69 0h7v7h-7zm204 0h6v7h-6zm158 0h19v7h-19zm39 0h6v7h-6zm127 0h6v7h-6zm-394 7h6v6h-6zm-337 6h7v6h-7zm343 0h7v6h-7zm19 0h7v6h-7zm375 0h6v6h-6zm-788 13h7v6h-7zm451 0h7v6h-7zm-241 12h6v7h-6zm241 7h7v6h-7zm0 6h7v6h-7zm-266 6h6v7h-6zm12 0h7v7h-7zm51 7h6v6h-6zm133 0h7v6h-7zm77 0h6v6h-6zm-83 6h6v6h-6zm89 0h6v6h-6zm-394 6h7v7h-7zm140 0h6v7h-6zm32 0h6v7h-6zm533 0h7v7h-7zm-508 7h7v6h-7zm13 0h6v6h-6zm286 0h6v6h-6zm-527 6h6v6h-6zm108 0h6v6h-6zm203 0h6v6h-6zm336 0h7v6h-7zm102 0h6v6h-6zm-864 6h7v7h-7zm165 0h7v7h-7zm445 0h6v7h-6zm235 0h6v7h-6zm-686 7h6v6h-6zm64 0h6v6h-6zm139 0h7v6h-7zm426 0h6v6h-6zm50 0h7v6h-7zm-742 6h6v7h-6zm127 0h6v7h-6zm146 0h6v7h-6zm-280 7h19v6h-19zm121 0h13v6h-13zm165 0h6v6h-6zm70 0h6v6h-6zm19 0h6v6h-6zm336 0h7v6h-7zm38 0h7v6h-7zm-723 6h6v6h-6zm82 0h6v6h-6zm178 0h6v6h-6zm63 0h7v6h-7zm58 0h6v6h-6zm304 0h7v6h-7zm13 0h6v6h-6zm19 0h6v6h-6zm-711 6h6v7h-6zm76 0h6v7h-6zm45 0h6v7h-6zm190 0h6v7h-6zm76 0h7v7h-7zm26 0h6v7h-6zm304 0h7v7h-7zm-723 7h6v6h-6zm82 0h6v6h-6zm114 0h7v6h-7zm191 0h6v6h-6zm-413 6h7v6h-7zm184 0h7v6h-7zm-281 6h2v7h-2zm8 0h7v7h-7zm70 0h13v7h-13zm121 0h6v7h-6zm12 0h7v7h-7zm26 0h6v7h-6zm44 0h7v7h-7zm-209 7h6v6h-6zm209 0h7v6h-7zm254 0h7v6h-7zm83 0h6v6h-6zm-260 6h6v6h-6zm203 0h6v6h-6zm-419 13h6v6h-6zm196 0h7v6h-7zm407 0h6v6h-6zm-419 6h6v6h-6zm139 0h7v6h-7zm39 0h6v6h-6zm222 6h13v7h-13zm-64 7h7v6h-7zm-355 6h6v6h-6zm-178 6h6v7h-6zm571 0h7v7h-7zm-431 7h6v6h-6zm44 0h6v6h-6zm553 0h6v6h-6zm-597 6h6v6h-6zm196 0h7v6h-7zm210 0h6v6h-6zm-546 6h6v7h-6zm140 0h6v7h-6zm336 0h7v7h-7zm-140 7h7v6h-7zm20 0h12v6h-12zm31 0h7v6h-7zm210 0h6v6h-6zm-661 6h7v7h-7zm654 0h7v7h-7zm147 0h6v7h-6zm-534 13h6v6h-6zm368 0h7v6h-7zm-431 6h6v7h-6zm209 0h13v7h-13zm248 0h6v7h-6zm-692 13h6v6h-6zm127 0h6v6h-6zm317 0h13v6h-13zm-190 6h6v7h-6zm70 0h6v7h-6zm342 0h7v7h-7zm134 0h6v7h-6zm-826 7h7v6h-7zm172 0h6v6h-6zm197 0h6v6h-6zm108 0h6v6h-6zm120 0h13v6h-13zm95 0h7v6h-7zm51 0h7v6h-7zm-749 6h6v6h-6zm13 0h6v6h-6zm349 0h6v6h-6zm336 0h7v6h-7zm-692 6h7v7h-7zm13 0h6v7h-6zm25 0h7v7h-7zm96 0h6v7h-6zm266 0h7v7h-7zm83 0h6v7h-6zm-483 7h7v6h-7zm19 0h7v6h-7zm248 0h6v6h-6zm25 0h7v6h-7zm108 0h7v6h-7zm77 0h6v6h-6zm330 0h6v6h-6zm-781 6h6v6h-6zm304 0h7v6h-7zm261 0h13v6h-13zm13 6h6v7h-6zm222 0h6v7h-6zm19 0h6v7h-6zm-603 7h6v6h-6zm190 0h6v6h-6zm159 0h6v6h-6zm133 0h13v6h-13zm146 0h7v6h-7zm-844 6h6v6h-6zm31 0h7v6h-7zm223 0h6v6h-6zm190 0h13v6h-13zm127 0h7v6h-7zm184 0h7v6h-7zm83 0h6v6h-6zm-851 6h6v7h-6zm44 0h7v7h-7zm312 0h6v7h-6zm19 0h12v7h-12zm190 0h6v7h-6zm191 0h12v7h-12zm19 0h12v7h-12zm-750 7h7v6h-7zm13 0h13v6h-13zm25 0h7v6h-7zm337 0h6v6h-6zm324 0h13v6h-13zm-686 6h6v6h-6zm572 0h6v6h-6zm190 0h6v6h-6zm13 0h6v6h-6zm-788 6h7v7h-7zm19 0h7v7h-7zm45 0h6v7h-6zm222 0h6v7h-6zm127 0h6v7h-6zm76 0h7v7h-7zm102 0h6v7h-6zm197 0h6v7h-6zm-769 7h7v6h-7zm807 0h13v6h-13zm32 0h4v6h-4zm-832 6h6v7h-6zm190 0h7v7h-7zm197 0h6v7h-6zm45 0h6v7h-6zm-445 7h6v6h-6zm197 0h6v6h-6zm63 0h7v6h-7zm178 0h7v6h-7zm26 0h6v6h-6zm323 0h7v6h-7zm-527 6h7v6h-7zm0 13h7v6h-7zm197 0h7v6h-7zm140 0h6v6h-6zm13 0h6v6h-6zm184 0h6v6h-6zm-394 6h6v6h-6zm45 0h12v6h-12zm165 0h6v6h-6zm-7 6h7v7h-7zm51 0h6v7h-6zm-394 7h7v6h-7zm140 0h6v6h-6zm26 6h6v6h-6zm171 0h6v6h-6zm-197 6h6v7h-6zm-400 7h13v6h-13zm787 0h7v6h-7zm-793 6h6v6h-6zm12 0h7v6h-7zm229 0h6v6h-6zm-248 6h7v7h-7zm89 0h7v7h-7zm191 0h6v7h-6zm533 0h7v7h-7zm-813 7h7v6h-7zm439 0h6v6h-6zm-458 6h7v6h-7zm32 0h6v6h-6zm45 0h12v6h-12zm38 0h6v6h-6zm12 0h7v6h-7zm750 0h4v6h-4zm-845 6h6v7h-6zm38 0h19v7h-19zm121 0h13v7h-13zm76 0h6v7h-6zm83 0h6v7h-6zm25 0h6v7h-6zm406 0h7v7h-7zm70 0h7v7h-7zm-825 7h12v6h-12zm51 0h6v6h-6zm12 0h13v6h-13zm140 0h6v6h-6zm159 0h6v6h-6zm171 0h6v6h-6zm-533 6h12v6h-12zm31 0h7v6h-7zm20 0h6v6h-6zm95 0h6v6h-6zm51 0h19v6h-19zm50 0h19v6h-19zm115 0h12v6h-12zm146 0h6v6h-6zm25 0h19v6h-19zm153 0h6v6h-6zm139 0h7v6h-7zm-794 6h7v7h-7zm64 0h13v7h-13zm44 0h13v7h-13zm45 0h6v7h-6zm13 0h6v7h-6zm12 0h7v7h-7zm70 0h6v7h-6zm70 0h6v7h-6zm51 0h6v7h-6zm25 0h7v7h-7zm70 0h6v7h-6zm44 0h7v7h-7zm45 0h6v7h-6z"/>
<path fill="rgb(207,207,207)" d="m154 0h7v2h-7zm108 0h13v2h-13zm32 0h6v2h-6zm44 0h7v2h-7zm343 0h7v2h-7zm19 0h13v2h-13zm26 0h6v2h-6zm133 0h13v2h-13zm-711 2h6v6h-6zm146 0h6v6h-6zm44 0h7v6h-7zm204 0h6v6h-6zm152 0h6v6h-6zm45 0h12v6h-12zm127 0h6v6h-6zm-597 6h12v6h-12zm25 0h6v6h-6zm51 0h6v6h-6zm178 0h12v6h-12zm19 0h6v6h-6zm133 0h6v6h-6zm-584 6h6v7h-6zm51 0h6v7h-6zm190 0h6v7h-6zm203 0h7v7h-7zm140 0h6v7h-6zm19 0h6v7h-6zm32 0h13v7h-13zm165 0h6v7h-6zm-762 7h6v6h-6zm209 0h7v6h-7zm369 0h6v6h-6zm32 0h6v6h-6zm-648 6h6v6h-6zm32 0h12v6h-12zm-32 13h6v6h-6zm25 0h7v6h-7zm13 0h6v6h-6zm368 0h7v6h-7zm-406 6h6v6h-6zm44 6h7v7h-7zm153 0h6v7h-6zm400 0h6v7h-6zm-597 7h6v6h-6zm197 0h6v6h-6zm222 0h6v6h-6zm13 0h6v6h-6zm165 0h6v6h-6zm19 0h6v6h-6zm-419 6h6v6h-6zm31 0h7v6h-7zm185 0h19v6h-19zm215 0h13v6h-13zm166 0h6v6h-6zm-820 6h7v7h-7zm210 0h6v7h-6zm203 0h7v7h-7zm57 0h7v7h-7zm184 0h7v7h-7zm20 0h6v7h-6zm-464 7h13v6h-13zm203 0h7v6h-7zm57 0h7v6h-7zm356 0h6v6h-6zm-768 6h6v6h-6zm152 0h13v6h-13zm19 0h6v6h-6zm25 0h13v6h-13zm19 0h13v6h-13zm-38 6h7v7h-7zm426 0h6v7h-6zm-483 7h7v6h-7zm51 0h6v6h-6zm13 0h6v6h-6zm393 0h7v6h-7zm39 0h6v6h-6zm12 0h13v6h-13zm102 0h6v6h-6zm19 0h19v6h-19zm-832 6h6v6h-6zm70 0h13v6h-13zm19 0h6v6h-6zm25 0h7v6h-7zm13 0h13v6h-13zm273 0h6v6h-6zm38 0h7v6h-7zm51 0h6v6h-6zm38 0h6v6h-6zm279 0h13v6h-13zm20 0h6v6h-6zm19 0h12v6h-12zm-885 6h2v7h-2zm15 0h6v7h-6zm76 0h6v7h-6zm25 0h7v7h-7zm26 0h12v7h-12zm19 0h12v7h-12zm70 0h6v7h-6zm44 0h6v7h-6zm127 0h6v7h-6zm241 0h7v7h-7zm96 0h6v7h-6zm95 0h19v7h-19zm38 0h19v7h-19zm-730 7h12v6h-12zm19 0h6v6h-6zm12 0h7v6h-7zm191 0h6v6h-6zm13 0h6v6h-6zm95 0h6v6h-6zm57 0h6v6h-6zm38 0h6v6h-6zm95 0h7v6h-7zm140 0h6v6h-6zm32 0h6v6h-6zm19 0h6v6h-6zm-781 6h6v7h-6zm19 0h6v7h-6zm63 0h13v7h-13zm57 0h7v7h-7zm13 0h7v7h-7zm13 0h6v7h-6zm44 0h7v7h-7zm83 0h6v7h-6zm19 0h6v7h-6zm70 0h6v7h-6zm184 0h6v7h-6zm19 0h6v7h-6zm89 0h6v7h-6zm51 0h25v7h-25zm44 0h6v7h-6zm-705 7h7v6h-7zm26 0h6v6h-6zm38 0h19v6h-19zm146 0h13v6h-13zm25 0h13v6h-13zm45 0h6v6h-6zm25 0h6v6h-6zm19 0h6v6h-6zm362 0h6v6h-6zm19 0h6v6h-6zm-730 6h13v6h-13zm19 0h6v6h-6zm82 0h7v6h-7zm13 0h7v6h-7zm26 0h6v6h-6zm88 0h20v6h-20zm39 0h6v6h-6zm31 0h7v6h-7zm32 0h6v6h-6zm13 0h6v6h-6zm12 0h7v6h-7zm32 0h7v6h-7zm13 0h6v6h-6zm222 0h13v6h-13zm19 0h7v6h-7zm83 0h6v6h-6zm12 0h7v6h-7zm51 0h7v6h-7zm-774 6h6v7h-6zm12 0h7v7h-7zm19 0h7v7h-7zm57 0h7v7h-7zm115 0h6v7h-6zm120 0h7v7h-7zm83 0h6v7h-6zm19 0h13v7h-13zm267 0h12v7h-12zm57 0h6v7h-6zm-743 7h6v6h-6zm19 0h6v6h-6zm89 0h19v6h-19zm89 0h6v6h-6zm12 0h7v6h-7zm45 0h6v6h-6zm57 0h13v6h-13zm64 0h6v6h-6zm279 0h6v6h-6zm114 0h7v6h-7zm-825 6h19v6h-19zm101 0h7v6h-7zm32 0h19v6h-19zm26 0h6v6h-6zm146 0h6v6h-6zm19 0h6v6h-6zm101 0h7v6h-7zm45 0h6v6h-6zm235 0h6v6h-6zm-673 6h6v7h-6zm25 0h6v7h-6zm51 0h6v7h-6zm25 0h6v7h-6zm26 0h6v7h-6zm31 0h7v7h-7zm108 0h7v7h-7zm89 0h19v7h-19zm222 0h13v7h-13zm102 0h6v7h-6zm-749 7h6v6h-6zm25 0h6v6h-6zm25 0h7v6h-7zm147 0h6v6h-6zm38 0h6v6h-6zm101 0h7v6h-7zm102 0h6v6h-6zm57 0h6v6h-6zm44 0h7v6h-7zm204 0h6v6h-6zm-724 6h6v6h-6zm12 0h13v6h-13zm210 0h6v6h-6zm76 0h7v6h-7zm184 0h7v6h-7zm102 0h6v6h-6zm190 0h7v6h-7zm-679 6h6v7h-6zm495 0h7v7h-7zm-539 7h6v6h-6zm215 0h7v6h-7zm13 0h6v6h-6zm191 0h6v6h-6zm146 0h6v6h-6zm190 0h7v6h-7zm-794 6h7v6h-7zm197 0h7v6h-7zm70 0h6v6h-6zm127 0h6v6h-6zm13 0h6v6h-6zm57 0h13v6h-13zm197 0h6v6h-6zm-457 6h6v7h-6zm63 0h6v7h-6zm127 0h6v7h-6zm203 0h7v7h-7zm-597 7h7v6h-7zm204 0h6v6h-6zm38 0h12v6h-12zm184 0h6v6h-6zm38 0h6v6h-6zm330 0h7v6h-7zm-590 6h6v6h-6zm31 0h7v6h-7zm191 0h6v6h-6zm-222 6h6v7h-6zm222 0h13v7h-13zm216 0h6v7h-6zm19 0h6v7h-6zm146 0h6v7h-6zm-546 7h6v6h-6zm159 0h6v6h-6zm209 0h13v6h-13zm184 0h7v6h-7zm-794 6h7v6h-7zm585 0h6v6h-6zm203 0h6v6h-6zm32 0h4v6h-4zm-826 6h13v7h-13zm597 0h6v7h-6zm191 0h6v7h-6zm19 0h6v7h-6zm-597 7h6v6h-6zm209 0h7v6h-7zm369 0h6v6h-6zm25 0h17v6h-17zm-394 6h13v7h-13zm19 0h7v7h-7zm146 0h7v7h-7zm13 0h6v7h-6zm38 0h6v7h-6zm13 0h6v7h-6zm171 0h11v7h-11zm-762 7h7v6h-7zm127 0h7v6h-7zm70 0h6v6h-6zm140 0h6v6h-6zm32 0h6v6h-6zm25 0h6v6h-6zm159 0h6v6h-6zm31 0h7v6h-7zm140 0h7v6h-7zm38 0h7v6h-7zm-635 6h13v6h-13zm64 0h6v6h-6zm171 0h13v6h-13zm178 0h6v6h-6zm13 0h12v6h-12zm19 0h19v6h-19zm25 0h7v6h-7zm134 0h6v6h-6zm-813 6h6v7h-6zm222 0h13v7h-13zm51 0h19v7h-19zm343 0h6v7h-6zm25 0h13v7h-13zm38 0h7v7h-7zm121 0h6v7h-6zm-800 7h6v6h-6zm292 0h6v6h-6zm101 0h7v6h-7zm32 0h7v6h-7zm64 0h6v6h-6zm152 0h6v6h-6zm165 0h7v6h-7zm-787 6h6v6h-6zm38 0h6v6h-6zm362 0h6v6h-6zm222 0h6v6h-6zm45 0h6v6h-6zm120 0h7v6h-7zm19 0h7v6h-7zm-857 6h6v7h-6zm13 0h6v7h-6zm50 0h7v7h-7zm26 0h6v7h-6zm171 0h7v7h-7zm146 0h7v7h-7zm45 0h6v7h-6zm13 0h6v7h-6zm171 0h6v7h-6zm102 0h6v7h-6zm127 0h12v7h-12zm-864 7h6v6h-6zm89 0h6v6h-6zm171 0h13v6h-13zm19 0h7v6h-7zm70 0h7v6h-7zm13 0h6v6h-6zm13 0h19v6h-19zm190 0h6v6h-6zm121 0h6v6h-6zm51 0h6v6h-6zm76 0h12v6h-12zm51 0h6v6h-6zm-885 6h2v6h-2zm21 0h6v6h-6zm19 0h6v6h-6zm38 0h6v6h-6zm64 0h6v6h-6zm50 0h7v6h-7zm108 0h7v6h-7zm70 0h7v6h-7zm115 0h12v6h-12zm234 0h7v6h-7zm32 0h7v6h-7zm51 0h6v6h-6zm19 0h6v6h-6zm38 0h7v6h-7zm-857 6h6v7h-6zm25 0h13v7h-13zm51 0h13v7h-13zm159 0h6v7h-6zm57 0h19v7h-19zm32 0h6v7h-6zm89 0h6v7h-6zm12 0h7v7h-7zm178 0h7v7h-7zm45 0h6v7h-6zm50 0h7v7h-7zm96 0h12v7h-12zm19 0h12v7h-12zm-775 7h13v6h-13zm152 0h7v6h-7zm115 0h12v6h-12zm25 0h13v6h-13zm51 0h6v6h-6zm19 0h6v6h-6zm13 0h6v6h-6zm82 0h7v6h-7zm102 0h13v6h-13zm51 0h6v6h-6zm44 0h13v6h-13zm127 0h6v6h-6zm-806 6h6v6h-6zm12 0h7v6h-7zm13 0h13v6h-13zm44 0h7v6h-7zm20 0h6v6h-6zm88 0h7v6h-7zm108 0h13v6h-13zm26 0h6v6h-6zm38 0h13v6h-13zm51 0h12v6h-12zm197 0h6v6h-6zm209 0h6v6h-6zm38 0h13v6h-13zm-851 6h7v7h-7zm19 0h7v7h-7zm57 0h7v7h-7zm32 0h7v7h-7zm134 0h6v7h-6zm108 0h12v7h-12zm31 0h7v7h-7zm51 0h6v7h-6zm19 0h6v7h-6zm108 0h6v7h-6zm32 0h13v7h-13zm51 0h6v7h-6zm76 0h6v7h-6zm13 0h6v7h-6zm82 0h6v7h-6zm25 0h7v7h-7zm32 0h7v7h-7zm-863 7h6v6h-6zm19 0h6v6h-6zm70 0h6v6h-6zm19 0h6v6h-6zm12 0h13v6h-13zm165 0h7v6h-7zm58 0h6v6h-6zm114 0h6v6h-6zm38 0h6v6h-6zm57 0h6v6h-6zm38 0h7v6h-7zm38 0h13v6h-13zm19 0h13v6h-13zm26 0h6v6h-6zm38 0h6v6h-6zm101 0h7v6h-7zm19 0h7v6h-7zm20 0h6v6h-6zm-858 6h7v6h-7zm64 0h6v6h-6zm19 0h6v6h-6zm19 0h32v6h-32zm89 0h6v6h-6zm57 0h6v6h-6zm38 0h13v6h-13zm152 0h13v6h-13zm121 0h6v6h-6zm64 0h6v6h-6zm19 0h6v6h-6zm12 0h7v6h-7zm64 0h6v6h-6zm13 0h6v6h-6zm44 0h6v6h-6zm19 0h6v6h-6zm-775 6h7v7h-7zm77 0h19v7h-19zm171 0h13v7h-13zm19 0h6v7h-6zm76 0h7v7h-7zm38 0h7v7h-7zm77 0h6v7h-6zm50 0h7v7h-7zm337 0h6v7h-6zm32 0h4v7h-4zm-864 7h6v6h-6zm13 0h6v6h-6zm19 0h12v6h-12zm32 0h19v6h-19zm120 0h7v6h-7zm394 0h6v6h-6zm51 0h6v6h-6zm12 0h7v6h-7zm-641 6h6v6h-6zm13 0h6v6h-6zm19 0h6v6h-6zm38 0h6v6h-6zm216 0h12v6h-12zm120 0h13v6h-13zm89 0h7v6h-7zm108 0h7v6h-7zm26 0h19v6h-19zm25 0h13v6h-13zm-635 6h6v7h-6zm25 0h7v7h-7zm159 0h7v7h-7zm210 0h6v7h-6zm19 0h13v7h-13zm57 0h6v7h-6zm178 0h6v7h-6zm25 0h7v7h-7zm-660 7h12v6h-12zm38 0h6v6h-6zm19 0h6v6h-6zm159 0h6v6h-6zm171 0h6v6h-6zm267 0h6v6h-6zm159 0h6v6h-6zm-807 6h6v7h-6zm191 0h6v7h-6zm44 0h6v7h-6zm152 0h7v7h-7zm26 0h13v7h-13zm184 0h6v7h-6zm191 0h6v7h-6zm12 0h13v7h-13zm-425 7h12v6h-12zm32 0h6v6h-6zm19 0h6v6h-6zm12 0h7v6h-7zm134 0h6v6h-6zm19 0h6v6h-6zm184 0h6v6h-6zm-730 6h6v6h-6zm158 0h7v6h-7zm32 0h6v6h-6zm184 0h7v6h-7zm159 0h19v6h-19zm-337 6h7v7h-7zm350 0h6v7h-6zm190 0h7v7h-7zm-743 7h7v6h-7zm356 0h6v6h-6zm190 0h7v6h-7zm197 0h13v6h-13zm-394 6h7v6h-7zm197 0h7v6h-7zm26 0h12v6h-12zm-413 6h19v7h-19zm190 0h7v7h-7zm39 0h6v7h-6zm355 0h7v7h-7zm26 0h6v7h-6zm-762 7h6v6h-6zm158 0h7v6h-7zm375 0h6v6h-6zm44 0h7v6h-7zm153 0h6v6h-6zm32 0h6v6h-6zm-566 6h7v6h-7zm178 0h13v6h-13zm165 0h13v6h-13zm51 0h6v6h-6zm172 0h6v6h-6zm-807 6h6v7h-6zm203 0h7v7h-7zm13 0h6v7h-6zm171 0h20v7h-20zm191 0h6v7h-6zm-584 7h6v6h-6zm32 0h6v6h-6zm25 0h6v6h-6zm165 0h6v6h-6zm159 0h25v6h-25zm44 0h13v6h-13zm26 0h6v6h-6zm-464 6h6v6h-6zm51 0h6v6h-6zm216 0h6v6h-6zm120 0h7v6h-7zm19 0h13v6h-13zm32 0h7v6h-7zm203 0h7v6h-7zm159 0h7v6h-7zm-787 6h6v7h-6zm171 0h7v7h-7zm51 0h6v7h-6zm13 0h6v7h-6zm152 0h19v7h-19zm32 0h13v7h-13zm349 0h6v7h-6zm13 0h6v7h-6zm13 0h6v7h-6zm-737 7h6v6h-6zm108 0h19v6h-19zm32 0h6v6h-6zm25 0h13v6h-13zm44 0h7v6h-7zm115 0h12v6h-12zm25 0h7v6h-7zm13 0h6v6h-6zm343 0h6v6h-6zm12 0h7v6h-7zm20 0h6v6h-6zm38 0h4v6h-4zm-839 6h7v6h-7zm19 0h20v6h-20zm32 0h7v6h-7zm19 0h7v6h-7zm13 0h6v6h-6zm76 0h7v6h-7zm64 0h19v6h-19zm63 0h7v6h-7zm108 0h6v6h-6zm13 0h13v6h-13zm19 0h6v6h-6zm57 0h6v6h-6zm171 0h7v6h-7zm26 0h6v6h-6zm76 0h6v6h-6zm19 0h6v6h-6zm57 0h7v6h-7zm-863 6h6v7h-6zm19 0h6v7h-6zm31 0h7v7h-7zm39 0h6v7h-6zm25 0h19v7h-19zm25 0h7v7h-7zm108 0h13v7h-13zm26 0h6v7h-6zm114 0h6v7h-6zm64 0h6v7h-6zm57 0h12v7h-12zm330 0h6v7h-6zm25 0h7v7h-7zm-857 7h13v6h-13zm32 0h6v6h-6zm12 0h7v6h-7zm166 0h6v6h-6zm50 0h13v6h-13zm121 0h6v6h-6zm51 0h19v6h-19zm70 0h6v6h-6zm25 0h6v6h-6zm13 0h6v6h-6zm12 0h13v6h-13zm147 0h6v6h-6zm120 0h13v6h-13zm-844 6h6v6h-6zm50 0h7v6h-7zm13 0h6v6h-6zm32 0h6v6h-6zm13 0h6v6h-6zm114 0h6v6h-6zm57 0h6v6h-6zm102 0h6v6h-6zm50 0h7v6h-7zm134 0h6v6h-6zm25 0h7v6h-7zm32 0h6v6h-6zm235 0h6v6h-6zm-864 6h7v7h-7zm70 0h6v7h-6zm57 0h7v7h-7zm184 0h13v7h-13zm32 0h7v7h-7zm32 0h6v7h-6zm13 0h6v7h-6zm19 0h19v7h-19zm25 0h13v7h-13zm32 0h6v7h-6zm108 0h6v7h-6zm209 0h7v7h-7zm32 0h6v7h-6z"/>
<path fill="rgb(210,210,210)" d="m123 0h6v2h-6zm25 0h6v2h-6zm171 0h7v2h-7zm13 0h6v2h-6zm19 0h7v2h-7zm102 0h6v2h-6zm32 0h6v2h-6zm44 0h6v2h-6zm121 0h25v2h-25zm38 0h12v2h-12zm44 0h7v2h-7zm26 0h6v2h-6zm95 0h6v2h-6zm25 0h7v2h-7zm13 0h6v2h-6zm-629 2h13v6h-13zm19 0h7v6h-7zm191 0h6v6h-6zm19 0h6v6h-6zm25 0h19v6h-19zm165 0h7v6h-7zm26 0h6v6h-6zm19 0h6v6h-6zm133 0h7v6h-7zm13 0h13v6h-13zm19 0h6v6h-6zm-826 6h7v6h-7zm26 0h13v6h-13zm32 0h6v6h-6zm165 0h6v6h-6zm19 0h6v6h-6zm25 0h6v6h-6zm165 0h7v6h-7zm51 0h6v6h-6zm133 0h7v6h-7zm32 0h19v6h-19zm159 0h25v6h-25zm-775 6h7v7h-7zm32 0h6v7h-6zm146 0h6v7h-6zm197 0h6v7h-6zm57 0h6v7h-6zm140 0h6v7h-6zm12 0h13v7h-13zm38 0h7v7h-7zm-628 7h6v6h-6zm32 0h6v6h-6zm355 0h7v6h-7zm191 0h25v6h-25zm31 0h7v6h-7zm13 0h6v6h-6zm19 0h7v6h-7zm153 0h6v6h-6zm-807 6h6v6h-6zm38 0h7v6h-7zm216 0h6v6h-6zm153 0h12v6h-12zm203 0h6v6h-6zm12 0h7v6h-7zm13 0h6v6h-6zm165 0h7v6h-7zm-787 6h6v7h-6zm19 0h25v7h-25zm165 0h6v7h-6zm203 0h7v7h-7zm13 0h51v7h-51zm222 0h6v7h-6zm19 0h7v7h-7zm172 0h4v7h-4zm-826 7h6v6h-6zm19 0h7v6h-7zm26 0h6v6h-6zm209 0h6v6h-6zm146 0h7v6h-7zm26 0h6v6h-6zm19 0h12v6h-12zm381 0h4v6h-4zm-820 6h7v6h-7zm13 0h7v6h-7zm13 0h13v6h-13zm216 0h6v6h-6zm152 0h7v6h-7zm216 0h6v6h-6zm184 0h7v6h-7zm-787 6h13v7h-13zm222 0h13v7h-13zm197 0h6v7h-6zm165 0h6v7h-6zm19 0h13v7h-13zm38 0h7v7h-7zm159 0h6v7h-6zm-819 7h6v6h-6zm38 0h6v6h-6zm25 0h7v6h-7zm159 0h6v6h-6zm25 0h19v6h-19zm185 0h6v6h-6zm12 0h7v6h-7zm184 0h7v6h-7zm19 0h13v6h-13zm166 0h12v6h-12zm-813 6h6v6h-6zm25 0h7v6h-7zm19 0h13v6h-13zm165 0h7v6h-7zm13 0h6v6h-6zm32 0h6v6h-6zm197 0h6v6h-6zm158 0h13v6h-13zm32 0h6v6h-6zm19 0h7v6h-7zm-641 6h6v7h-6zm19 0h13v7h-13zm178 0h12v7h-12zm25 0h6v7h-6zm13 0h19v7h-19zm178 0h19v7h-19zm222 0h6v7h-6zm146 0h6v7h-6zm13 0h12v7h-12zm-807 7h6v6h-6zm13 0h6v6h-6zm197 0h12v6h-12zm31 0h13v6h-13zm153 0h6v6h-6zm44 0h7v6h-7zm210 0h13v6h-13zm146 0h6v6h-6zm32 0h4v6h-4zm-788 6h7v6h-7zm153 0h6v6h-6zm31 0h7v6h-7zm165 0h7v6h-7zm13 0h13v6h-13zm57 0h7v6h-7zm146 0h7v6h-7zm19 0h7v6h-7zm32 0h7v6h-7zm134 0h6v6h-6zm25 0h6v6h-6zm-807 6h7v7h-7zm191 0h6v7h-6zm13 0h6v7h-6zm19 0h6v7h-6zm38 0h13v7h-13zm114 0h6v7h-6zm19 0h13v7h-13zm216 0h13v7h-13zm25 0h7v7h-7zm159 0h7v7h-7zm13 0h6v7h-6zm-845 7h13v6h-13zm115 0h6v6h-6zm127 0h6v6h-6zm12 0h7v6h-7zm178 0h13v6h-13zm51 0h6v6h-6zm19 0h6v6h-6zm171 0h13v6h-13zm147 0h6v6h-6zm25 0h6v6h-6zm-864 6h7v6h-7zm19 0h7v6h-7zm45 0h19v6h-19zm57 0h6v6h-6zm13 0h6v6h-6zm76 0h6v6h-6zm63 0h7v6h-7zm13 0h13v6h-13zm172 0h19v6h-19zm158 0h7v6h-7zm64 0h19v6h-19zm32 0h6v6h-6zm139 0h7v6h-7zm-876 6h6v7h-6zm32 0h19v7h-19zm50 0h7v7h-7zm26 0h6v7h-6zm13 0h6v7h-6zm31 0h7v7h-7zm26 0h6v7h-6zm44 0h7v7h-7zm13 0h6v7h-6zm25 0h7v7h-7zm19 0h7v7h-7zm89 0h13v7h-13zm19 0h13v7h-13zm19 0h13v7h-13zm38 0h13v7h-13zm32 0h7v7h-7zm13 0h6v7h-6zm38 0h6v7h-6zm38 0h19v7h-19zm64 0h12v7h-12zm50 0h7v7h-7zm102 0h6v7h-6zm83 0h6v7h-6zm25 0h6v7h-6zm-876 7h6v6h-6zm31 0h13v6h-13zm45 0h25v6h-25zm63 0h7v6h-7zm26 0h6v6h-6zm89 0h12v6h-12zm114 0h6v6h-6zm32 0h6v6h-6zm38 0h6v6h-6zm70 0h6v6h-6zm50 0h13v6h-13zm26 0h6v6h-6zm38 0h6v6h-6zm13 0h12v6h-12zm89 0h6v6h-6zm101 0h6v6h-6zm19 0h19v6h-19zm-717 6h6v7h-6zm25 0h13v7h-13zm51 0h6v7h-6zm25 0h7v7h-7zm13 0h6v7h-6zm13 0h12v7h-12zm19 0h12v7h-12zm120 0h7v7h-7zm13 0h6v7h-6zm25 0h7v7h-7zm108 0h7v7h-7zm77 0h6v7h-6zm12 0h13v7h-13zm19 0h7v7h-7zm89 0h7v7h-7zm70 0h6v7h-6zm25 0h20v7h-20zm26 0h13v7h-13zm19 0h13v7h-13zm-876 7h6v6h-6zm76 0h6v6h-6zm32 0h12v6h-12zm31 0h7v6h-7zm83 0h6v6h-6zm13 0h44v6h-44zm88 0h7v6h-7zm70 0h7v6h-7zm38 0h7v6h-7zm32 0h7v6h-7zm19 0h13v6h-13zm45 0h12v6h-12zm19 0h6v6h-6zm152 0h13v6h-13zm32 0h6v6h-6zm57 0h6v6h-6zm76 0h7v6h-7zm19 0h7v6h-7zm-876 6h13v6h-13zm76 0h7v6h-7zm38 0h26v6h-26zm64 0h6v6h-6zm44 0h7v6h-7zm13 0h6v6h-6zm13 0h12v6h-12zm89 0h6v6h-6zm57 0h6v6h-6zm19 0h6v6h-6zm25 0h6v6h-6zm13 0h6v6h-6zm70 0h6v6h-6zm19 0h6v6h-6zm95 0h6v6h-6zm32 0h6v6h-6zm12 0h7v6h-7zm45 0h6v6h-6zm57 0h6v6h-6zm25 0h7v6h-7zm26 0h13v6h-13zm19 0h6v6h-6zm32 0h4v6h-4zm-845 6h13v7h-13zm45 0h19v7h-19zm38 0h6v7h-6zm82 0h7v7h-7zm32 0h6v7h-6zm76 0h19v7h-19zm45 0h6v7h-6zm50 0h13v7h-13zm26 0h6v7h-6zm38 0h6v7h-6zm13 0h12v7h-12zm19 0h6v7h-6zm44 0h6v7h-6zm13 0h12v7h-12zm82 0h7v7h-7zm19 0h19v7h-19zm51 0h19v7h-19zm57 0h7v7h-7zm38 0h7v7h-7zm13 0h6v7h-6zm13 0h6v7h-6zm13 0h6v7h-6zm31 0h11v7h-11zm-781 7h7v6h-7zm83 0h6v6h-6zm12 0h13v6h-13zm20 0h6v6h-6zm25 0h13v6h-13zm51 0h12v6h-12zm25 0h6v6h-6zm38 0h13v6h-13zm83 0h19v6h-19zm25 0h7v6h-7zm38 0h7v6h-7zm13 0h13v6h-13zm19 0h6v6h-6zm32 0h6v6h-6zm197 0h6v6h-6zm44 0h6v6h-6zm19 0h13v6h-13zm64 0h4v6h-4zm-877 6h13v6h-13zm26 0h6v6h-6zm51 0h6v6h-6zm25 0h6v6h-6zm38 0h6v6h-6zm83 0h19v6h-19zm38 0h6v6h-6zm25 0h13v6h-13zm70 0h6v6h-6zm25 0h7v6h-7zm51 0h32v6h-32zm45 0h12v6h-12zm25 0h13v6h-13zm254 0h13v6h-13zm32 0h6v6h-6zm38 0h6v6h-6zm38 0h17v6h-17zm-870 6h13v7h-13zm44 0h7v7h-7zm32 0h7v7h-7zm76 0h7v7h-7zm45 0h13v7h-13zm25 0h19v7h-19zm45 0h6v7h-6zm38 0h6v7h-6zm51 0h12v7h-12zm19 0h25v7h-25zm82 0h7v7h-7zm51 0h19v7h-19zm260 0h7v7h-7zm-736 7h6v6h-6zm12 0h7v6h-7zm13 0h6v6h-6zm19 0h19v6h-19zm26 0h6v6h-6zm114 0h6v6h-6zm38 0h6v6h-6zm44 0h7v6h-7zm26 0h13v6h-13zm76 0h6v6h-6zm57 0h7v6h-7zm32 0h6v6h-6zm57 0h6v6h-6zm248 0h6v6h-6zm-769 6h7v6h-7zm13 0h6v6h-6zm19 0h6v6h-6zm241 0h7v6h-7zm26 0h6v6h-6zm89 0h6v6h-6zm95 0h6v6h-6zm102 0h6v6h-6zm76 0h6v6h-6zm133 0h13v6h-13zm-768 6h6v7h-6zm222 0h6v7h-6zm19 0h6v7h-6zm19 0h6v7h-6zm13 0h6v7h-6zm159 0h6v7h-6zm146 0h6v7h-6zm12 0h7v7h-7zm38 0h13v7h-13zm51 0h7v7h-7zm89 0h6v7h-6zm-775 7h7v6h-7zm32 0h7v6h-7zm13 0h6v6h-6zm146 0h19v6h-19zm32 0h6v6h-6zm12 0h13v6h-13zm26 0h6v6h-6zm171 0h13v6h-13zm32 0h19v6h-19zm197 0h6v6h-6zm120 0h13v6h-13zm-742 6h6v6h-6zm12 0h7v6h-7zm197 0h13v6h-13zm197 0h6v6h-6zm152 0h7v6h-7zm13 0h6v6h-6zm57 0h7v6h-7zm121 0h13v6h-13zm-781 6h6v7h-6zm44 0h7v7h-7zm13 0h6v7h-6zm159 0h6v7h-6zm38 0h6v7h-6zm165 0h6v7h-6zm38 0h6v7h-6zm190 0h7v7h-7zm153 0h6v7h-6zm-800 7h6v6h-6zm57 0h6v6h-6zm368 0h7v6h-7zm210 0h6v6h-6zm-388 6h7v6h-7zm166 0h6v6h-6zm12 0h7v6h-7zm165 0h7v6h-7zm38 0h19v6h-19zm172 0h6v6h-6zm-800 6h12v7h-12zm228 0h26v7h-26zm83 0h6v7h-6zm82 0h7v7h-7zm20 0h6v7h-6zm38 0h6v7h-6zm171 0h6v7h-6zm172 0h6v7h-6zm-559 7h6v6h-6zm190 0h13v6h-13zm178 0h13v6h-13zm197 0h6v6h-6zm32 0h4v6h-4zm-826 6h6v6h-6zm13 0h6v6h-6zm209 0h19v6h-19zm178 0h13v6h-13zm32 0h13v6h-13zm171 0h7v6h-7zm19 0h7v6h-7zm166 0h6v6h-6zm12 0h7v6h-7zm13 0h6v6h-6zm-800 6h6v7h-6zm184 0h6v7h-6zm25 0h7v7h-7zm165 0h7v7h-7zm13 0h19v7h-19zm32 0h19v7h-19zm159 0h6v7h-6zm209 0h7v7h-7zm13 0h13v7h-13zm-813 7h26v6h-26zm191 0h6v6h-6zm25 0h6v6h-6zm178 0h13v6h-13zm32 0h12v6h-12zm19 0h6v6h-6zm349 0h6v6h-6zm13 0h6v6h-6zm-807 6h6v7h-6zm19 0h7v7h-7zm172 0h6v7h-6zm12 0h7v7h-7zm38 0h13v7h-13zm159 0h7v7h-7zm13 0h6v7h-6zm19 0h6v7h-6zm13 0h6v7h-6zm146 0h6v7h-6zm12 0h7v7h-7zm191 0h25v7h-25zm-807 7h7v6h-7zm32 0h7v6h-7zm197 0h6v6h-6zm19 0h13v6h-13zm152 0h7v6h-7zm32 0h7v6h-7zm13 0h6v6h-6zm165 0h6v6h-6zm19 0h19v6h-19zm191 0h12v6h-12zm19 0h4v6h-4zm-807 6h7v6h-7zm184 0h7v6h-7zm19 0h7v6h-7zm19 0h7v6h-7zm153 0h13v6h-13zm184 0h13v6h-13zm70 0h6v6h-6zm133 0h7v6h-7zm19 0h19v6h-19zm-806 6h12v7h-12zm19 0h13v7h-13zm197 0h6v7h-6zm19 0h6v7h-6zm165 0h6v7h-6zm25 0h7v7h-7zm191 0h6v7h-6zm19 0h6v7h-6zm152 0h13v7h-13zm-813 7h7v6h-7zm19 0h13v6h-13zm64 0h6v6h-6zm121 0h12v6h-12zm19 0h19v6h-19zm38 0h31v6h-31zm178 0h12v6h-12zm25 0h6v6h-6zm216 0h6v6h-6zm13 0h6v6h-6zm107 0h7v6h-7zm20 0h6v6h-6zm-813 6h19v6h-19zm38 0h6v6h-6zm25 0h7v6h-7zm13 0h6v6h-6zm25 0h7v6h-7zm127 0h7v6h-7zm51 0h6v6h-6zm19 0h7v6h-7zm89 0h6v6h-6zm64 0h6v6h-6zm38 0h12v6h-12zm158 0h7v6h-7zm45 0h6v6h-6zm95 0h6v6h-6zm45 0h12v6h-12zm-858 6h7v7h-7zm26 0h12v7h-12zm25 0h6v7h-6zm19 0h7v7h-7zm19 0h7v7h-7zm45 0h6v7h-6zm63 0h13v7h-13zm102 0h6v7h-6zm152 0h7v7h-7zm83 0h6v7h-6zm76 0h13v7h-13zm51 0h6v7h-6zm19 0h12v7h-12zm38 0h13v7h-13zm101 0h7v7h-7zm13 0h13v7h-13zm-825 7h12v6h-12zm25 0h6v6h-6zm19 0h13v6h-13zm26 0h6v6h-6zm50 0h7v6h-7zm32 0h13v6h-13zm51 0h6v6h-6zm38 0h6v6h-6zm19 0h6v6h-6zm57 0h7v6h-7zm38 0h7v6h-7zm26 0h19v6h-19zm38 0h12v6h-12zm38 0h6v6h-6zm76 0h6v6h-6zm127 0h6v6h-6zm51 0h6v6h-6zm32 0h6v6h-6zm38 0h19v6h-19zm76 0h6v6h-6zm-864 6h13v6h-13zm19 0h13v6h-13zm26 0h6v6h-6zm12 0h7v6h-7zm39 0h6v6h-6zm25 0h6v6h-6zm25 0h13v6h-13zm58 0h12v6h-12zm57 0h12v6h-12zm57 0h19v6h-19zm32 0h6v6h-6zm38 0h19v6h-19zm108 0h6v6h-6zm19 0h6v6h-6zm76 0h6v6h-6zm140 0h6v6h-6zm31 0h13v6h-13zm38 0h13v6h-13zm26 0h6v6h-6zm13 0h6v6h-6zm-826 6h6v7h-6zm13 0h6v7h-6zm19 0h6v7h-6zm19 0h6v7h-6zm32 0h6v7h-6zm12 0h7v7h-7zm13 0h6v7h-6zm165 0h6v7h-6zm19 0h6v7h-6zm38 0h7v7h-7zm32 0h6v7h-6zm19 0h6v7h-6zm64 0h6v7h-6zm12 0h13v7h-13zm102 0h6v7h-6zm95 0h6v7h-6zm19 0h6v7h-6zm13 0h13v7h-13zm19 0h13v7h-13zm63 0h7v7h-7zm19 0h7v7h-7zm39 0h12v7h-12zm-866 7h2v6h-2zm53 0h6v6h-6zm19 0h6v6h-6zm12 0h13v6h-13zm51 0h7v6h-7zm13 0h6v6h-6zm38 0h6v6h-6zm13 0h6v6h-6zm38 0h13v6h-13zm44 0h19v6h-19zm45 0h6v6h-6zm19 0h6v6h-6zm32 0h6v6h-6zm44 0h6v6h-6zm57 0h7v6h-7zm13 0h6v6h-6zm19 0h6v6h-6zm82 0h7v6h-7zm20 0h12v6h-12zm31 0h7v6h-7zm64 0h19v6h-19zm38 0h13v6h-13zm121 0h6v6h-6zm-807 6h6v6h-6zm13 0h6v6h-6zm19 0h13v6h-13zm19 0h13v6h-13zm89 0h6v6h-6zm32 0h12v6h-12zm57 0h6v6h-6zm31 0h7v6h-7zm13 0h6v6h-6zm19 0h13v6h-13zm38 0h26v6h-26zm45 0h6v6h-6zm44 0h13v6h-13zm19 0h19v6h-19zm95 0h7v6h-7zm26 0h6v6h-6zm13 0h6v6h-6zm12 0h13v6h-13zm51 0h6v6h-6zm25 0h7v6h-7zm26 0h13v6h-13zm38 0h6v6h-6zm32 0h6v6h-6zm12 0h32v6h-32zm77 0h4v6h-4zm-883 6h6v7h-6zm19 0h6v7h-6zm13 0h6v7h-6zm25 0h6v7h-6zm13 0h6v7h-6zm13 0h6v7h-6zm101 0h6v7h-6zm38 0h7v7h-7zm57 0h13v7h-13zm19 0h13v7h-13zm32 0h7v7h-7zm45 0h12v7h-12zm89 0h6v7h-6zm25 0h13v7h-13zm63 0h7v7h-7zm19 0h7v7h-7zm51 0h7v7h-7zm26 0h19v7h-19zm50 0h7v7h-7zm39 0h6v7h-6zm31 0h7v7h-7zm26 0h6v7h-6zm12 0h7v7h-7zm13 0h6v7h-6zm26 0h6v7h-6zm-866 7h15v6h-15zm27 0h7v6h-7zm13 0h13v6h-13zm25 0h32v6h-32zm45 0h13v6h-13zm19 0h6v6h-6zm114 0h7v6h-7zm45 0h12v6h-12zm19 0h6v6h-6zm12 0h7v6h-7zm13 0h6v6h-6zm114 0h13v6h-13zm32 0h32v6h-32zm51 0h6v6h-6zm63 0h7v6h-7zm26 0h6v6h-6zm38 0h6v6h-6zm25 0h7v6h-7zm13 0h6v6h-6zm89 0h6v6h-6zm19 0h6v6h-6zm13 0h6v6h-6zm19 0h12v6h-12zm38 0h6v6h-6zm13 0h6v6h-6zm-885 6h8v6h-8zm15 0h6v6h-6zm12 0h7v6h-7zm32 0h6v6h-6zm25 0h7v6h-7zm159 0h13v6h-13zm19 0h13v6h-13zm19 0h7v6h-7zm32 0h13v6h-13zm45 0h12v6h-12zm44 0h6v6h-6zm25 0h7v6h-7zm45 0h6v6h-6zm19 0h6v6h-6zm89 0h6v6h-6zm19 0h6v6h-6zm44 0h7v6h-7zm13 0h6v6h-6zm25 0h13v6h-13zm70 0h13v6h-13zm26 0h6v6h-6zm19 0h6v6h-6zm12 0h7v6h-7zm19 0h7v6h-7zm39 0h6v6h-6zm12 0h7v6h-7zm-838 6h6v7h-6zm13 0h12v7h-12zm19 0h6v7h-6zm12 0h7v7h-7zm39 0h19v7h-19zm38 0h12v7h-12zm50 0h7v7h-7zm20 0h6v7h-6zm31 0h13v7h-13zm38 0h7v7h-7zm172 0h13v7h-13zm19 0h19v7h-19zm38 0h6v7h-6zm19 0h6v7h-6zm19 0h6v7h-6zm25 0h20v7h-20zm51 0h7v7h-7zm19 0h7v7h-7zm13 0h13v7h-13zm57 0h13v7h-13zm26 0h12v7h-12zm57 0h6v7h-6zm51 0h6v7h-6zm12 0h7v7h-7zm-844 7h6v6h-6zm57 0h13v6h-13zm32 0h6v6h-6zm31 0h7v6h-7zm77 0h6v6h-6zm63 0h6v6h-6zm133 0h7v6h-7zm26 0h12v6h-12zm19 0h6v6h-6zm13 0h6v6h-6zm38 0h6v6h-6zm12 0h13v6h-13zm19 0h7v6h-7zm83 0h13v6h-13zm38 0h6v6h-6zm13 0h12v6h-12zm139 0h7v6h-7zm77 0h4v6h-4zm-858 6h7v6h-7zm19 0h7v6h-7zm13 0h19v6h-19zm38 0h7v6h-7zm26 0h6v6h-6zm196 0h13v6h-13zm121 0h6v6h-6zm19 0h13v6h-13zm19 0h7v6h-7zm45 0h6v6h-6zm108 0h12v6h-12zm57 0h6v6h-6zm12 0h7v6h-7zm20 0h6v6h-6zm-686 6h6v7h-6zm25 0h6v7h-6zm13 0h6v7h-6zm13 0h6v7h-6zm342 0h7v7h-7zm19 0h7v7h-7zm58 0h6v7h-6zm120 0h7v7h-7zm13 0h19v7h-19zm44 0h7v7h-7zm13 0h19v7h-19zm127 0h6v7h-6zm26 0h38v7h-38zm-813 7h6v6h-6zm31 0h13v6h-13zm166 0h19v6h-19zm203 0h6v6h-6zm12 0h7v6h-7zm20 0h6v6h-6zm158 0h7v6h-7zm38 0h7v6h-7zm13 0h6v6h-6zm19 0h6v6h-6zm127 0h6v6h-6zm26 0h6v6h-6zm31 0h7v6h-7zm-832 6h7v7h-7zm19 0h7v7h-7zm172 0h6v7h-6zm32 0h6v7h-6zm19 0h6v7h-6zm146 0h6v7h-6zm57 0h13v7h-13zm159 0h6v7h-6zm190 0h7v7h-7zm-794 7h7v6h-7zm26 0h6v6h-6zm171 0h7v6h-7zm45 0h6v6h-6zm158 0h20v6h-20zm26 0h6v6h-6zm19 0h6v6h-6zm152 0h7v6h-7zm13 0h6v6h-6zm44 0h7v6h-7zm140 0h38v6h-38zm-794 6h7v6h-7zm13 0h6v6h-6zm197 0h6v6h-6zm13 0h6v6h-6zm171 0h19v6h-19zm32 0h6v6h-6zm19 0h6v6h-6zm190 0h13v6h-13zm166 0h12v6h-12zm25 0h6v6h-6zm-781 6h6v7h-6zm184 0h25v7h-25zm171 0h7v7h-7zm13 0h7v7h-7zm38 0h7v7h-7zm350 0h12v7h-12zm-801 7h7v6h-7zm45 0h6v6h-6zm349 0h6v6h-6zm51 0h6v6h-6zm178 0h12v6h-12zm25 0h6v6h-6zm165 0h7v6h-7zm-794 6h7v6h-7zm216 0h13v6h-13zm172 0h6v6h-6zm19 0h13v6h-13zm184 0h6v6h-6zm38 0h6v6h-6zm172 0h6v6h-6zm-616 6h6v7h-6zm25 0h6v7h-6zm203 0h7v7h-7zm184 0h26v7h-26zm197 0h7v7h-7zm-800 7h6v6h-6zm210 0h6v6h-6zm177 0h7v6h-7zm20 0h6v6h-6zm12 0h13v6h-13zm19 0h7v6h-7zm191 0h6v6h-6zm171 0h7v6h-7zm-794 6h7v6h-7zm13 0h7v6h-7zm191 0h6v6h-6zm171 0h6v6h-6zm19 0h7v6h-7zm38 0h7v6h-7zm178 0h6v6h-6zm-635 6h6v7h-6zm51 0h6v7h-6zm13 0h6v7h-6zm165 0h6v7h-6zm12 0h7v7h-7zm185 0h6v7h-6zm12 0h19v7h-19zm165 0h7v7h-7zm38 0h7v7h-7zm-616 7h7v6h-7zm26 0h13v6h-13zm203 0h6v6h-6zm172 0h12v6h-12zm31 0h7v6h-7zm134 0h12v6h-12zm69 0h7v6h-7zm140 0h13v6h-13zm-781 6h6v6h-6zm19 0h13v6h-13zm26 0h6v6h-6zm177 0h7v6h-7zm19 0h7v6h-7zm140 0h6v6h-6zm26 0h6v6h-6zm184 0h6v6h-6zm235 0h4v6h-4zm-845 6h13v7h-13zm45 0h12v7h-12zm177 0h13v7h-13zm19 0h7v7h-7zm13 0h13v7h-13zm127 0h6v7h-6zm38 0h13v7h-13zm191 0h6v7h-6zm203 0h6v7h-6zm-832 7h6v6h-6zm25 0h13v6h-13zm39 0h25v6h-25zm31 0h13v6h-13zm146 0h13v6h-13zm51 0h6v6h-6zm102 0h6v6h-6zm31 0h13v6h-13zm32 0h7v6h-7zm32 0h6v6h-6zm108 0h13v6h-13zm82 0h13v6h-13zm121 0h6v6h-6zm19 0h7v6h-7zm38 0h7v6h-7zm-863 6h25v6h-25zm44 0h6v6h-6zm159 0h6v6h-6zm44 0h7v6h-7zm64 0h6v6h-6zm108 0h6v6h-6zm12 0h7v6h-7zm20 0h6v6h-6zm38 0h12v6h-12zm108 0h6v6h-6zm82 0h6v6h-6zm133 0h7v6h-7zm26 0h13v6h-13zm-872 6h2v7h-2zm27 0h7v7h-7zm19 0h7v7h-7zm19 0h7v7h-7zm26 0h6v7h-6zm51 0h6v7h-6zm25 0h6v7h-6zm38 0h13v7h-13zm26 0h6v7h-6zm12 0h13v7h-13zm57 0h7v7h-7zm64 0h13v7h-13zm44 0h13v7h-13zm51 0h26v7h-26zm38 0h7v7h-7zm32 0h13v7h-13zm83 0h6v7h-6zm19 0h12v7h-12zm95 0h6v7h-6zm32 0h6v7h-6zm88 0h26v7h-26zm-825 7h13v6h-13zm44 0h7v6h-7zm13 0h6v6h-6zm19 0h7v6h-7zm32 0h6v6h-6zm25 0h13v6h-13zm32 0h6v6h-6zm32 0h6v6h-6zm13 0h6v6h-6zm12 0h7v6h-7zm38 0h13v6h-13zm83 0h6v6h-6zm25 0h13v6h-13zm38 0h7v6h-7zm64 0h6v6h-6zm44 0h7v6h-7zm38 0h7v6h-7zm51 0h7v6h-7zm13 0h6v6h-6zm95 0h7v6h-7zm38 0h7v6h-7zm76 0h7v6h-7zm26 0h6v6h-6zm-864 6h7v6h-7zm38 0h7v6h-7zm26 0h6v6h-6zm25 0h7v6h-7zm19 0h7v6h-7zm26 0h31v6h-31zm44 0h6v6h-6zm38 0h13v6h-13zm19 0h7v6h-7zm76 0h13v6h-13zm70 0h7v6h-7zm13 0h13v6h-13zm25 0h7v6h-7zm45 0h19v6h-19zm70 0h6v6h-6zm89 0h6v6h-6zm101 0h7v6h-7zm127 0h13v6h-13zm26 0h19v6h-19zm-883 6h6v7h-6zm13 0h6v7h-6zm44 0h19v7h-19zm83 0h6v7h-6zm31 0h13v7h-13zm58 0h6v7h-6zm12 0h7v7h-7zm51 0h6v7h-6zm19 0h6v7h-6zm32 0h6v7h-6zm44 0h7v7h-7zm45 0h6v7h-6zm76 0h13v7h-13zm32 0h6v7h-6zm19 0h6v7h-6zm25 0h6v7h-6zm76 0h7v7h-7zm13 0h13v7h-13zm64 0h6v7h-6zm127 0h6v7h-6zm25 0h6v7h-6z"/>
<path fill="rgb(216,216,216)" d="m110 0h6v2h-6zm25 0h13v2h-13zm324 0h13v2h-13zm45 0h12v2h-12zm19 0h6v2h-6zm25 0h6v2h-6zm165 0h13v2h-13zm32 0h6v2h-6zm140 0h6v2h-6zm19 0h4v2h-4zm-839 2h7v6h-7zm64 0h6v6h-6zm13 0h6v6h-6zm177 0h7v6h-7zm178 0h7v6h-7zm222 0h7v6h-7zm-635 6h7v6h-7zm32 0h7v6h-7zm19 0h13v6h-13zm184 0h7v6h-7zm185 0h12v6h-12zm-426 6h6v7h-6zm32 0h6v7h-6zm203 0h6v7h-6zm13 0h6v7h-6zm152 0h7v7h-7zm13 0h6v7h-6zm25 0h7v7h-7zm381 0h7v7h-7zm-825 7h6v6h-6zm12 0h7v6h-7zm13 0h7v6h-7zm13 0h6v6h-6zm184 0h6v6h-6zm13 0h6v6h-6zm25 0h6v6h-6zm153 0h6v6h-6zm19 0h12v6h-12zm25 0h6v6h-6zm165 0h6v6h-6zm32 0h6v6h-6zm146 0h6v6h-6zm-788 6h7v6h-7zm20 0h6v6h-6zm190 0h6v6h-6zm216 0h19v6h-19zm25 0h7v6h-7zm356 0h6v6h-6zm13 0h4v6h-4zm-826 6h6v7h-6zm19 0h7v7h-7zm197 0h19v7h-19zm394 0h6v7h-6zm12 0h7v7h-7zm178 0h7v7h-7zm-603 7h6v6h-6zm38 0h6v6h-6zm13 0h6v6h-6zm190 0h7v6h-7zm172 0h19v6h-19zm31 0h7v6h-7zm13 0h7v6h-7zm153 0h6v6h-6zm-756 6h6v6h-6zm356 0h19v6h-19zm234 0h7v6h-7zm-615 6h6v7h-6zm12 0h7v7h-7zm13 0h6v7h-6zm146 0h13v7h-13zm25 0h13v7h-13zm178 0h7v7h-7zm13 0h6v7h-6zm25 0h7v7h-7zm191 0h6v7h-6zm12 0h13v7h-13zm166 0h6v7h-6zm-801 7h7v6h-7zm20 0h6v6h-6zm374 0h19v6h-19zm51 0h6v6h-6zm349 0h7v6h-7zm19 0h11v6h-11zm-813 6h7v6h-7zm45 0h6v6h-6zm146 0h6v6h-6zm32 0h12v6h-12zm393 0h7v6h-7zm178 0h7v6h-7zm19 0h7v6h-7zm-819 6h6v7h-6zm19 0h7v7h-7zm32 0h6v7h-6zm171 0h13v7h-13zm191 0h13v7h-13zm184 0h13v7h-13zm19 0h13v7h-13zm-622 7h6v6h-6zm38 0h6v6h-6zm19 0h6v6h-6zm171 0h7v6h-7zm204 0h6v6h-6zm171 0h13v6h-13zm38 0h13v6h-13zm26 0h6v6h-6zm139 0h7v6h-7zm-813 6h13v6h-13zm39 0h12v6h-12zm25 0h13v6h-13zm343 0h6v6h-6zm19 0h6v6h-6zm38 0h6v6h-6zm178 0h6v6h-6zm165 0h13v6h-13zm25 0h7v6h-7zm-844 6h12v7h-12zm19 0h12v7h-12zm38 0h6v7h-6zm19 0h6v7h-6zm13 0h6v7h-6zm177 0h7v7h-7zm185 0h12v7h-12zm38 0h6v7h-6zm127 0h6v7h-6zm44 0h6v7h-6zm26 0h12v7h-12zm-680 7h6v6h-6zm19 0h6v6h-6zm13 0h19v6h-19zm25 0h7v6h-7zm13 0h6v6h-6zm13 0h6v6h-6zm108 0h25v6h-25zm88 0h7v6h-7zm115 0h6v6h-6zm12 0h7v6h-7zm32 0h13v6h-13zm26 0h6v6h-6zm12 0h7v6h-7zm121 0h13v6h-13zm32 0h6v6h-6zm-635 6h12v6h-12zm25 0h6v6h-6zm172 0h19v6h-19zm76 0h12v6h-12zm120 0h19v6h-19zm26 0h6v6h-6zm38 0h13v6h-13zm32 0h6v6h-6zm19 0h6v6h-6zm127 0h6v6h-6zm38 0h13v6h-13zm19 0h6v6h-6zm19 0h6v6h-6zm140 0h4v6h-4zm-845 6h6v7h-6zm19 0h6v7h-6zm57 0h7v7h-7zm51 0h6v7h-6zm13 0h6v7h-6zm12 0h13v7h-13zm102 0h13v7h-13zm19 0h6v7h-6zm89 0h19v7h-19zm89 0h19v7h-19zm25 0h7v7h-7zm134 0h12v7h-12zm25 0h25v7h-25zm32 0h6v7h-6zm51 0h6v7h-6zm120 0h11v7h-11zm-876 7h6v6h-6zm13 0h6v6h-6zm31 0h13v6h-13zm127 0h7v6h-7zm13 0h6v6h-6zm83 0h6v6h-6zm12 0h13v6h-13zm26 0h6v6h-6zm25 0h7v6h-7zm89 0h13v6h-13zm45 0h19v6h-19zm25 0h6v6h-6zm32 0h6v6h-6zm12 0h7v6h-7zm32 0h6v6h-6zm32 0h6v6h-6zm13 0h6v6h-6zm50 0h26v6h-26zm70 0h7v6h-7zm13 0h13v6h-13zm127 0h6v6h-6zm13 0h4v6h-4zm-883 6h6v7h-6zm13 0h12v7h-12zm50 0h7v7h-7zm32 0h19v7h-19zm32 0h6v7h-6zm44 0h13v7h-13zm58 0h6v7h-6zm82 0h13v7h-13zm95 0h7v7h-7zm51 0h13v7h-13zm19 0h7v7h-7zm45 0h12v7h-12zm31 0h7v7h-7zm13 0h13v7h-13zm19 0h7v7h-7zm13 0h13v7h-13zm51 0h6v7h-6zm19 0h6v7h-6zm19 0h19v7h-19zm32 0h6v7h-6zm31 0h13v7h-13zm64 0h6v7h-6zm32 0h6v7h-6zm-839 7h7v6h-7zm19 0h7v6h-7zm19 0h7v6h-7zm13 0h13v6h-13zm95 0h13v6h-13zm58 0h6v6h-6zm69 0h7v6h-7zm26 0h6v6h-6zm38 0h6v6h-6zm70 0h6v6h-6zm57 0h6v6h-6zm38 0h6v6h-6zm44 0h7v6h-7zm19 0h7v6h-7zm20 0h19v6h-19zm88 0h13v6h-13zm58 0h6v6h-6zm19 0h19v6h-19zm50 0h7v6h-7zm58 0h6v6h-6zm-851 6h12v6h-12zm19 0h12v6h-12zm25 0h6v6h-6zm83 0h6v6h-6zm12 0h19v6h-19zm64 0h6v6h-6zm51 0h6v6h-6zm76 0h6v6h-6zm171 0h7v6h-7zm45 0h12v6h-12zm19 0h13v6h-13zm44 0h7v6h-7zm26 0h6v6h-6zm12 0h7v6h-7zm26 0h6v6h-6zm19 0h6v6h-6zm32 0h6v6h-6zm19 0h12v6h-12zm19 0h6v6h-6zm70 0h6v6h-6zm19 0h6v6h-6zm-870 6h6v7h-6zm31 0h7v7h-7zm38 0h13v7h-13zm77 0h19v7h-19zm31 0h13v7h-13zm89 0h13v7h-13zm26 0h6v7h-6zm95 0h6v7h-6zm70 0h6v7h-6zm63 0h7v7h-7zm26 0h6v7h-6zm12 0h7v7h-7zm58 0h6v7h-6zm19 0h6v7h-6zm25 0h6v7h-6zm127 0h6v7h-6zm57 0h7v7h-7zm26 0h12v7h-12zm-870 7h19v6h-19zm31 0h7v6h-7zm26 0h6v6h-6zm12 0h7v6h-7zm26 0h6v6h-6zm32 0h6v6h-6zm25 0h19v6h-19zm25 0h7v6h-7zm89 0h7v6h-7zm19 0h7v6h-7zm45 0h13v6h-13zm19 0h6v6h-6zm57 0h6v6h-6zm13 0h6v6h-6zm133 0h13v6h-13zm25 0h7v6h-7zm45 0h25v6h-25zm38 0h6v6h-6zm51 0h13v6h-13zm19 0h25v6h-25zm44 0h13v6h-13zm45 0h6v6h-6zm38 0h6v6h-6zm-870 6h6v6h-6zm44 0h7v6h-7zm70 0h7v6h-7zm19 0h13v6h-13zm19 0h13v6h-13zm26 0h12v6h-12zm19 0h6v6h-6zm70 0h12v6h-12zm31 0h13v6h-13zm32 0h6v6h-6zm57 0h7v6h-7zm26 0h6v6h-6zm25 0h13v6h-13zm83 0h6v6h-6zm31 0h7v6h-7zm26 0h6v6h-6zm19 0h6v6h-6zm13 0h25v6h-25zm38 0h6v6h-6zm120 0h7v6h-7zm32 0h13v6h-13zm19 0h6v6h-6zm13 0h12v6h-12zm38 0h13v6h-13zm-838 6h12v7h-12zm19 0h6v7h-6zm63 0h7v7h-7zm19 0h19v7h-19zm32 0h6v7h-6zm152 0h7v7h-7zm26 0h6v7h-6zm95 0h6v7h-6zm13 0h6v7h-6zm38 0h6v7h-6zm25 0h7v7h-7zm32 0h6v7h-6zm32 0h32v7h-32zm51 0h6v7h-6zm19 0h6v7h-6zm25 0h6v7h-6zm19 0h25v7h-25zm121 0h12v7h-12zm51 0h6v7h-6zm25 0h17v7h-17zm-851 7h6v6h-6zm76 0h7v6h-7zm19 0h7v6h-7zm13 0h6v6h-6zm95 0h7v6h-7zm45 0h6v6h-6zm19 0h6v6h-6zm127 0h19v6h-19zm63 0h7v6h-7zm26 0h6v6h-6zm101 0h7v6h-7zm13 0h6v6h-6zm76 0h13v6h-13zm38 0h7v6h-7zm70 0h6v6h-6zm13 0h6v6h-6zm12 0h7v6h-7zm39 0h12v6h-12zm-801 6h7v6h-7zm20 0h6v6h-6zm12 0h7v6h-7zm26 0h6v6h-6zm114 0h6v6h-6zm38 0h13v6h-13zm32 0h12v6h-12zm114 0h6v6h-6zm25 0h20v6h-20zm45 0h6v6h-6zm146 0h6v6h-6zm32 0h6v6h-6zm12 0h7v6h-7zm19 0h7v6h-7zm32 0h7v6h-7zm115 0h6v6h-6zm19 0h6v6h-6zm-832 6h6v7h-6zm31 0h7v7h-7zm13 0h7v7h-7zm19 0h13v7h-13zm19 0h7v7h-7zm115 0h12v7h-12zm25 0h6v7h-6zm13 0h6v7h-6zm19 0h6v7h-6zm158 0h13v7h-13zm51 0h7v7h-7zm19 0h13v7h-13zm134 0h6v7h-6zm12 0h7v7h-7zm45 0h13v7h-13zm19 0h6v7h-6zm121 0h12v7h-12zm25 0h6v7h-6zm-819 7h6v6h-6zm19 0h6v6h-6zm203 0h6v6h-6zm165 0h6v6h-6zm13 0h6v6h-6zm13 0h6v6h-6zm31 0h7v6h-7zm140 0h6v6h-6zm25 0h19v6h-19zm185 0h12v6h-12zm25 0h13v6h-13zm-819 6h6v6h-6zm12 0h7v6h-7zm210 0h6v6h-6zm13 0h6v6h-6zm171 0h13v6h-13zm38 0h13v6h-13zm178 0h19v6h-19zm-616 6h6v7h-6zm26 0h6v7h-6zm190 0h13v7h-13zm216 0h19v7h-19zm165 0h13v7h-13zm25 0h13v7h-13zm159 0h7v7h-7zm26 0h19v7h-19zm-807 7h6v6h-6zm38 0h7v6h-7zm159 0h19v6h-19zm203 0h7v6h-7zm32 0h6v6h-6zm13 0h6v6h-6zm158 0h13v6h-13zm19 0h7v6h-7zm13 0h13v6h-13zm165 0h7v6h-7zm-781 6h7v6h-7zm368 0h7v6h-7zm13 0h7v6h-7zm191 0h12v6h-12zm25 0h6v6h-6zm25 0h7v6h-7zm147 0h6v6h-6zm12 0h7v6h-7zm19 0h7v6h-7zm-813 6h7v7h-7zm13 0h13v7h-13zm191 0h6v7h-6zm38 0h6v7h-6zm349 0h6v7h-6zm13 0h6v7h-6zm25 0h6v7h-6zm172 0h12v7h-12zm19 0h4v7h-4zm-813 7h6v6h-6zm25 0h7v6h-7zm172 0h6v6h-6zm31 0h7v6h-7zm388 0h6v6h-6zm190 0h7v6h-7zm-774 6h6v6h-6zm165 0h6v6h-6zm31 0h7v6h-7zm153 0h6v6h-6zm19 0h13v6h-13zm32 0h6v6h-6zm165 0h12v6h-12zm25 0h6v6h-6zm172 0h6v6h-6zm-813 6h6v7h-6zm235 0h6v7h-6zm12 0h13v7h-13zm153 0h6v7h-6zm209 0h7v7h-7zm13 0h19v7h-19zm25 0h7v7h-7zm-609 7h6v6h-6zm19 0h6v6h-6zm197 0h6v6h-6zm362 0h6v6h-6zm-604 6h13v7h-13zm20 0h19v7h-19zm171 0h6v7h-6zm19 0h6v7h-6zm13 0h6v7h-6zm400 0h6v7h-6zm-635 7h25v6h-25zm51 0h6v6h-6zm146 0h6v6h-6zm31 0h7v6h-7zm381 0h7v6h-7zm185 0h12v6h-12zm-756 6h6v6h-6zm19 0h13v6h-13zm178 0h12v6h-12zm158 0h7v6h-7zm51 0h7v6h-7zm13 0h6v6h-6zm368 0h7v6h-7zm-787 6h6v7h-6zm355 0h7v7h-7zm39 0h12v7h-12zm158 0h7v7h-7zm19 0h7v7h-7zm197 0h7v7h-7zm19 0h7v7h-7zm-838 7h6v6h-6zm25 0h7v6h-7zm20 0h6v6h-6zm184 0h6v6h-6zm50 0h7v6h-7zm121 0h6v6h-6zm64 0h6v6h-6zm133 0h6v6h-6zm19 0h6v6h-6zm210 0h6v6h-6zm12 0h7v6h-7zm-851 6h7v6h-7zm58 0h6v6h-6zm19 0h6v6h-6zm120 0h7v6h-7zm13 0h6v6h-6zm38 0h19v6h-19zm159 0h6v6h-6zm70 0h12v6h-12zm146 0h6v6h-6zm38 0h6v6h-6zm12 0h7v6h-7zm134 0h6v6h-6zm19 0h6v6h-6zm32 0h4v6h-4zm-858 6h7v7h-7zm77 0h6v7h-6zm25 0h6v7h-6zm114 0h7v7h-7zm76 0h13v7h-13zm96 0h6v7h-6zm12 0h7v7h-7zm83 0h6v7h-6zm19 0h13v7h-13zm102 0h6v7h-6zm19 0h6v7h-6zm12 0h7v7h-7zm45 0h19v7h-19zm146 0h13v7h-13zm-743 7h6v6h-6zm38 0h6v6h-6zm76 0h7v6h-7zm95 0h7v6h-7zm96 0h6v6h-6zm12 0h7v6h-7zm51 0h7v6h-7zm13 0h25v6h-25zm44 0h7v6h-7zm96 0h25v6h-25zm76 0h6v6h-6zm13 0h6v6h-6zm107 0h7v6h-7zm32 0h7v6h-7zm19 0h7v6h-7zm-832 6h7v6h-7zm39 0h6v6h-6zm25 0h6v6h-6zm95 0h7v6h-7zm19 0h7v6h-7zm19 0h7v6h-7zm134 0h6v6h-6zm12 0h7v6h-7zm26 0h6v6h-6zm38 0h6v6h-6zm32 0h12v6h-12zm25 0h6v6h-6zm51 0h12v6h-12zm57 0h6v6h-6zm13 0h12v6h-12zm25 0h6v6h-6zm13 0h6v6h-6zm44 0h7v6h-7zm45 0h12v6h-12zm31 0h13v6h-13zm38 0h7v6h-7zm26 0h19v6h-19zm-775 6h19v7h-19zm32 0h6v7h-6zm25 0h7v7h-7zm26 0h6v7h-6zm19 0h12v7h-12zm57 0h19v7h-19zm25 0h7v7h-7zm57 0h13v7h-13zm39 0h6v7h-6zm19 0h6v7h-6zm50 0h7v7h-7zm26 0h6v7h-6zm44 0h19v7h-19zm32 0h25v7h-25zm64 0h6v7h-6zm19 0h6v7h-6zm38 0h25v7h-25zm70 0h6v7h-6zm19 0h12v7h-12zm19 0h19v7h-19zm57 0h6v7h-6zm12 0h20v7h-20zm51 0h7v7h-7zm-800 7h7v6h-7zm45 0h6v6h-6zm12 0h7v6h-7zm26 0h6v6h-6zm25 0h6v6h-6zm13 0h6v6h-6zm38 0h13v6h-13zm133 0h13v6h-13zm45 0h6v6h-6zm12 0h13v6h-13zm19 0h13v6h-13zm51 0h7v6h-7zm26 0h6v6h-6zm31 0h13v6h-13zm51 0h13v6h-13zm38 0h7v6h-7zm19 0h7v6h-7zm51 0h13v6h-13zm26 0h6v6h-6zm12 0h7v6h-7zm13 0h13v6h-13zm51 0h6v6h-6zm19 0h6v6h-6zm19 0h13v6h-13zm19 0h13v6h-13zm-891 6h2v6h-2zm8 0h7v6h-7zm115 0h6v6h-6zm12 0h13v6h-13zm32 0h6v6h-6zm13 0h6v6h-6zm25 0h13v6h-13zm19 0h7v6h-7zm19 0h7v6h-7zm102 0h6v6h-6zm101 0h13v6h-13zm19 0h7v6h-7zm58 0h6v6h-6zm31 0h7v6h-7zm26 0h6v6h-6zm57 0h6v6h-6zm25 0h13v6h-13zm51 0h6v6h-6zm57 0h7v6h-7zm19 0h7v6h-7zm19 0h7v6h-7zm64 0h13v6h-13zm19 0h6v6h-6zm-891 6h8v7h-8zm129 0h6v7h-6zm19 0h6v7h-6zm13 0h6v7h-6zm12 0h7v7h-7zm19 0h7v7h-7zm19 0h7v7h-7zm13 0h13v7h-13zm32 0h6v7h-6zm32 0h6v7h-6zm57 0h6v7h-6zm32 0h6v7h-6zm38 0h12v7h-12zm114 0h13v7h-13zm19 0h19v7h-19zm38 0h6v7h-6zm121 0h6v7h-6zm38 0h13v7h-13zm19 0h13v7h-13zm140 0h4v7h-4zm-750 7h7v6h-7zm13 0h19v6h-19zm32 0h6v6h-6zm32 0h12v6h-12zm31 0h13v6h-13zm51 0h6v6h-6zm25 0h13v6h-13zm39 0h6v6h-6zm12 0h7v6h-7zm32 0h13v6h-13zm95 0h7v6h-7zm26 0h12v6h-12zm38 0h6v6h-6zm32 0h6v6h-6zm12 0h13v6h-13zm76 0h13v6h-13zm45 0h6v6h-6zm19 0h6v6h-6zm127 0h6v6h-6zm13 0h4v6h-4zm-883 6h6v6h-6zm32 0h6v6h-6zm44 0h7v6h-7zm70 0h6v6h-6zm13 0h19v6h-19zm25 0h19v6h-19zm121 0h6v6h-6zm44 0h13v6h-13zm19 0h7v6h-7zm19 0h7v6h-7zm26 0h6v6h-6zm25 0h6v6h-6zm51 0h6v6h-6zm32 0h6v6h-6zm19 0h6v6h-6zm25 0h6v6h-6zm38 0h7v6h-7zm51 0h6v6h-6zm19 0h6v6h-6zm70 0h6v6h-6zm57 0h6v6h-6zm13 0h19v6h-19zm-610 6h7v7h-7zm13 0h6v7h-6zm13 0h6v7h-6zm57 0h12v7h-12zm19 0h19v7h-19zm108 0h6v7h-6zm19 0h6v7h-6zm63 0h7v7h-7zm26 0h6v7h-6zm70 0h25v7h-25zm82 0h6v7h-6zm13 0h6v7h-6zm12 0h13v7h-13zm108 0h7v7h-7zm13 0h6v7h-6zm13 0h13v7h-13zm-597 7h13v6h-13zm63 0h7v6h-7zm13 0h6v6h-6zm19 0h7v6h-7zm95 0h7v6h-7zm178 0h13v6h-13zm32 0h6v6h-6zm57 0h13v6h-13zm108 0h6v6h-6zm13 0h6v6h-6zm12 0h20v6h-20zm45 0h6v6h-6zm-794 6h7v6h-7zm26 0h6v6h-6zm133 0h6v6h-6zm32 0h6v6h-6zm31 0h7v6h-7zm121 0h6v6h-6zm70 0h19v6h-19zm203 0h6v6h-6zm13 0h6v6h-6zm114 0h13v6h-13zm26 0h12v6h-12zm19 0h6v6h-6zm19 0h4v6h-4zm-807 6h7v7h-7zm19 0h13v7h-13zm134 0h6v7h-6zm12 0h32v7h-32zm57 0h7v7h-7zm172 0h6v7h-6zm19 0h6v7h-6zm140 0h6v7h-6zm38 0h6v7h-6zm158 0h20v7h-20zm58 0h4v7h-4zm-807 7h7v6h-7zm19 0h13v6h-13zm159 0h6v6h-6zm44 0h7v6h-7zm159 0h7v6h-7zm19 0h13v6h-13zm26 0h6v6h-6zm133 0h6v6h-6zm13 0h6v6h-6zm19 0h6v6h-6zm19 0h6v6h-6zm-616 6h6v7h-6zm381 0h6v7h-6zm184 0h6v7h-6zm25 0h7v7h-7zm13 0h6v7h-6zm19 0h6v7h-6zm140 0h6v7h-6zm-769 7h7v6h-7zm13 0h7v6h-7zm13 0h6v6h-6zm178 0h6v6h-6zm12 0h7v6h-7zm356 0h6v6h-6zm32 0h6v6h-6zm25 0h6v6h-6zm184 0h11v6h-11zm-825 6h6v6h-6zm228 0h7v6h-7zm375 0h25v6h-25zm38 0h6v6h-6zm165 0h13v6h-13zm19 0h11v6h-11zm-813 6h7v7h-7zm178 0h7v7h-7zm13 0h6v7h-6zm13 0h6v7h-6zm203 0h13v7h-13zm184 0h13v7h-13zm216 0h13v7h-13zm-807 7h7v6h-7zm13 0h7v6h-7zm165 0h13v6h-13zm32 0h6v6h-6zm19 0h6v6h-6zm172 0h12v6h-12zm387 0h6v6h-6zm19 0h6v6h-6zm-813 6h6v6h-6zm13 0h6v6h-6zm13 0h6v6h-6zm158 0h7v6h-7zm216 0h7v6h-7zm229 0h6v6h-6zm165 0h6v6h-6zm-807 6h7v7h-7zm19 0h13v7h-13zm20 0h6v7h-6zm387 0h6v7h-6zm375 0h6v7h-6zm25 0h6v7h-6zm-794 7h13v6h-13zm172 0h6v6h-6zm25 0h6v6h-6zm19 0h6v6h-6zm159 0h6v6h-6zm19 0h6v6h-6zm19 0h6v6h-6zm178 0h6v6h-6zm171 0h7v6h-7zm13 0h6v6h-6zm25 0h7v6h-7zm-832 6h7v6h-7zm13 0h6v6h-6zm26 0h12v6h-12zm158 0h7v6h-7zm426 0h6v6h-6zm165 0h6v6h-6zm-737 6h7v7h-7zm140 0h6v7h-6zm432 0h12v7h-12zm19 0h12v7h-12zm152 0h19v7h-19zm26 0h6v7h-6zm-610 7h6v6h-6zm44 0h7v6h-7zm191 0h6v6h-6zm184 0h13v6h-13zm159 0h6v6h-6zm44 0h11v6h-11zm-781 6h7v6h-7zm13 0h6v6h-6zm140 0h6v6h-6zm247 0h7v6h-7zm134 0h6v6h-6zm25 0h6v6h-6zm19 0h6v6h-6zm172 0h12v6h-12zm19 0h6v6h-6zm12 0h7v6h-7zm-813 6h13v7h-13zm32 0h7v7h-7zm159 0h6v7h-6zm248 0h12v7h-12zm165 0h6v7h-6zm203 0h17v7h-17zm-813 7h6v6h-6zm184 0h7v6h-7zm13 0h6v6h-6zm32 0h19v6h-19zm133 0h6v6h-6zm64 0h6v6h-6zm146 0h6v6h-6zm12 0h19v6h-19zm26 0h12v6h-12zm25 0h6v6h-6zm165 0h7v6h-7zm13 0h6v6h-6zm-660 6h6v6h-6zm19 0h6v6h-6zm19 0h12v6h-12zm38 0h6v6h-6zm25 0h13v6h-13zm184 0h7v6h-7zm153 0h6v6h-6zm31 0h7v6h-7zm39 0h6v6h-6zm146 0h12v6h-12zm-870 6h6v7h-6zm247 0h13v7h-13zm51 0h6v7h-6zm133 0h7v7h-7zm45 0h6v7h-6zm127 0h6v7h-6zm44 0h7v7h-7zm13 0h6v7h-6zm19 0h6v7h-6zm13 0h6v7h-6zm127 0h12v7h-12zm-800 7h6v6h-6zm57 0h6v6h-6zm44 0h7v6h-7zm70 0h6v6h-6zm57 0h13v6h-13zm64 0h12v6h-12zm19 0h6v6h-6zm25 0h19v6h-19zm64 0h19v6h-19zm31 0h7v6h-7zm58 0h6v6h-6zm82 0h19v6h-19zm64 0h19v6h-19zm25 0h6v6h-6zm95 0h32v6h-32zm45 0h12v6h-12zm-807 6h7v6h-7zm13 0h6v6h-6zm133 0h13v6h-13zm96 0h6v6h-6zm19 0h6v6h-6zm50 0h7v6h-7zm26 0h6v6h-6zm133 0h13v6h-13zm121 0h6v6h-6zm32 0h6v6h-6zm12 0h7v6h-7zm13 0h25v6h-25zm32 0h12v6h-12zm19 0h6v6h-6zm19 0h6v6h-6zm19 0h6v6h-6zm13 0h6v6h-6zm12 0h7v6h-7zm19 0h7v6h-7zm38 0h7v6h-7zm-812 6h6v7h-6zm19 0h6v7h-6zm171 0h7v7h-7zm51 0h19v7h-19zm229 0h6v7h-6zm25 0h6v7h-6zm89 0h13v7h-13zm32 0h6v7h-6zm63 0h13v7h-13zm19 0h7v7h-7zm19 0h7v7h-7zm13 0h6v7h-6zm63 0h7v7h-7zm26 0h6v7h-6z"/>
<path fill="rgb(219,219,219)" d="m59 0h13v2h-13zm38 0h13v2h-13zm32 0h6v2h-6zm368 0h7v2h-7zm19 0h7v2h-7zm-425 2h6v6h-6zm13 0h6v6h-6zm222 0h6v6h-6zm-222 6h12v6h-12zm381 0h6v6h-6zm-381 6h6v7h-6zm381 0h6v7h-6zm25 0h6v7h-6zm368 0h7v7h-7zm-800 7h6v6h-6zm26 0h6v6h-6zm222 0h6v6h-6zm190 0h7v6h-7zm388 0h4v6h-4zm-629 6h6v6h-6zm13 0h6v6h-6zm12 0h7v6h-7zm13 0h13v6h-13zm216 0h6v6h-6zm146 0h13v6h-13zm-394 6h7v7h-7zm32 0h6v7h-6zm13 0h6v7h-6zm-26 7h13v6h-13zm19 0h7v6h-7zm172 0h6v6h-6zm-216 6h13v6h-13zm32 0h6v6h-6zm197 0h6v6h-6zm19 0h6v6h-6zm158 0h7v6h-7zm45 0h6v6h-6zm159 0h6v6h-6zm12 0h11v6h-11zm-819 6h6v7h-6zm45 0h6v7h-6zm400 0h6v7h-6zm190 0h6v7h-6zm-616 7h7v6h-7zm32 0h6v6h-6zm178 0h6v6h-6zm-229 6h6v6h-6zm597 0h6v6h-6zm-571 6h6v7h-6zm419 0h6v7h-6zm355 0h7v7h-7zm-743 7h7v6h-7zm178 0h6v6h-6zm178 0h13v6h-13zm178 0h6v6h-6zm31 0h13v6h-13zm-203 6h7v6h-7zm178 0h6v6h-6zm64 0h6v6h-6zm-642 6h13v7h-13zm38 0h7v7h-7zm127 0h7v7h-7zm229 0h6v7h-6zm57 0h6v7h-6zm127 0h6v7h-6zm222 0h11v7h-11zm-832 7h13v6h-13zm261 0h12v6h-12zm133 0h6v6h-6zm51 0h13v6h-13zm32 0h6v6h-6zm139 0h7v6h-7zm32 0h6v6h-6zm-425 6h12v6h-12zm57 0h6v6h-6zm13 0h6v6h-6zm107 0h7v6h-7zm197 0h13v6h-13zm19 0h7v6h-7zm-654 6h7v7h-7zm178 0h6v7h-6zm45 0h6v7h-6zm44 0h13v7h-13zm32 0h6v7h-6zm12 0h7v7h-7zm20 0h6v7h-6zm82 0h6v7h-6zm64 0h6v7h-6zm146 0h19v7h-19zm108 0h6v7h-6zm-559 7h6v6h-6zm19 0h6v6h-6zm95 0h6v6h-6zm19 0h6v6h-6zm64 0h12v6h-12zm31 0h13v6h-13zm108 0h7v6h-7zm140 0h6v6h-6zm32 0h25v6h-25zm-705 6h6v7h-6zm25 0h7v7h-7zm19 0h7v7h-7zm19 0h7v7h-7zm121 0h6v7h-6zm121 0h6v7h-6zm184 0h6v7h-6zm19 0h6v7h-6zm13 0h6v7h-6zm57 0h6v7h-6zm19 0h6v7h-6zm76 0h6v7h-6zm83 0h12v7h-12zm25 0h6v7h-6zm121 0h4v7h-4zm-904 7h2v6h-2zm8 0h7v6h-7zm26 0h6v6h-6zm19 0h12v6h-12zm19 0h6v6h-6zm114 0h6v6h-6zm133 0h7v6h-7zm70 0h13v6h-13zm96 0h6v6h-6zm31 0h13v6h-13zm64 0h12v6h-12zm25 0h7v6h-7zm76 0h7v6h-7zm83 0h13v6h-13zm95 0h13v6h-13zm-859 6h8v6h-8zm46 0h7v6h-7zm146 0h7v6h-7zm39 0h6v6h-6zm88 0h7v6h-7zm273 0h7v6h-7zm20 0h6v6h-6zm12 0h7v6h-7zm95 0h7v6h-7zm45 0h13v6h-13zm-724 6h6v7h-6zm38 0h6v7h-6zm286 0h13v7h-13zm32 0h6v7h-6zm196 0h7v7h-7zm13 0h7v7h-7zm38 0h7v7h-7zm76 0h13v7h-13zm51 0h13v7h-13zm26 0h6v7h-6zm-794 7h6v6h-6zm76 0h6v6h-6zm197 0h6v6h-6zm121 0h6v6h-6zm31 0h7v6h-7zm178 0h7v6h-7zm13 0h19v6h-19zm51 0h6v6h-6zm50 0h7v6h-7zm83 0h6v6h-6zm-794 6h19v6h-19zm140 0h6v6h-6zm44 0h7v6h-7zm159 0h7v6h-7zm13 0h6v6h-6zm57 0h19v6h-19zm95 0h7v6h-7zm51 0h6v6h-6zm19 0h13v6h-13zm51 0h6v6h-6zm19 0h13v6h-13zm44 0h7v6h-7zm13 0h13v6h-13zm19 0h13v6h-13zm26 0h6v6h-6zm101 0h13v6h-13zm-813 6h7v7h-7zm64 0h6v7h-6zm51 0h6v7h-6zm139 0h13v7h-13zm58 0h6v7h-6zm88 0h7v7h-7zm121 0h6v7h-6zm70 0h6v7h-6zm32 0h6v7h-6zm50 0h13v7h-13zm121 0h13v7h-13zm32 0h13v7h-13zm-622 7h6v6h-6zm44 0h13v6h-13zm19 0h6v6h-6zm19 0h6v6h-6zm153 0h6v6h-6zm31 0h7v6h-7zm32 0h19v6h-19zm83 0h6v6h-6zm19 0h6v6h-6zm89 0h6v6h-6zm88 0h7v6h-7zm39 0h6v6h-6zm12 0h7v6h-7zm19 0h7v6h-7zm-768 6h13v6h-13zm330 0h6v6h-6zm32 0h13v6h-13zm25 0h7v6h-7zm26 0h19v6h-19zm120 0h7v6h-7zm51 0h6v6h-6zm26 0h6v6h-6zm133 0h13v6h-13zm19 0h6v6h-6zm-813 6h6v7h-6zm13 0h6v7h-6zm13 0h6v7h-6zm177 0h7v7h-7zm172 0h6v7h-6zm25 0h19v7h-19zm70 0h6v7h-6zm165 0h6v7h-6zm26 0h6v7h-6zm146 0h6v7h-6zm19 0h4v7h-4zm-826 7h13v6h-13zm45 0h12v6h-12zm152 0h13v6h-13zm203 0h7v6h-7zm13 0h6v6h-6zm216 0h12v6h-12zm25 0h7v6h-7zm146 0h13v6h-13zm26 0h4v6h-4zm-26 6h7v6h-7zm13 0h17v6h-17zm-584 6h6v7h-6zm171 0h13v7h-13zm426 0h4v7h-4zm-820 7h7v6h-7zm381 0h13v6h-13zm20 0h6v6h-6zm31 0h7v6h-7zm178 0h6v6h-6zm191 0h6v6h-6zm19 0h4v6h-4zm-813 6h6v6h-6zm13 0h6v6h-6zm12 0h7v6h-7zm172 0h6v6h-6zm216 0h6v6h-6zm12 0h7v6h-7zm165 0h13v6h-13zm223 0h4v6h-4zm-813 6h6v7h-6zm19 0h13v7h-13zm184 0h6v7h-6zm178 0h6v7h-6zm44 0h7v7h-7zm203 0h7v7h-7zm-622 7h7v6h-7zm13 0h6v6h-6zm413 0h6v6h-6zm82 0h7v6h-7zm114 0h7v6h-7zm172 0h6v6h-6zm-794 6h7v6h-7zm13 0h13v6h-13zm184 0h6v6h-6zm413 0h6v6h-6zm-603 6h6v7h-6zm12 0h7v7h-7zm197 0h6v7h-6zm400 0h6v7h-6zm-590 7h6v6h-6zm177 0h19v6h-19zm400 0h7v6h-7zm13 0h6v6h-6zm-641 6h6v7h-6zm57 7h6v6h-6zm165 6h6v6h-6zm165 0h6v6h-6zm64 0h6v6h-6zm-439 6h7v7h-7zm210 0h6v7h-6zm19 0h6v7h-6zm146 0h6v7h-6zm57 0h13v7h-13zm-374 7h6v6h-6zm152 0h13v6h-13zm159 0h6v6h-6zm228 0h7v6h-7zm26 0h6v6h-6zm165 0h6v6h-6zm19 0h6v6h-6zm-851 6h6v6h-6zm210 0h6v6h-6zm12 0h7v6h-7zm83 0h6v6h-6zm114 0h6v6h-6zm222 0h7v6h-7zm32 0h6v6h-6zm13 0h13v6h-13zm120 0h7v6h-7zm-711 6h13v7h-13zm108 0h19v7h-19zm89 0h6v7h-6zm121 0h12v7h-12zm44 0h7v7h-7zm19 0h13v7h-13zm337 0h6v7h-6zm-642 7h7v6h-7zm102 0h6v6h-6zm19 0h6v6h-6zm133 0h7v6h-7zm108 0h7v6h-7zm45 0h6v6h-6zm57 0h19v6h-19zm57 0h7v6h-7zm-571 6h6v6h-6zm44 0h13v6h-13zm114 0h7v6h-7zm70 0h7v6h-7zm51 0h6v6h-6zm25 0h7v6h-7zm51 0h7v6h-7zm19 0h7v6h-7zm57 0h7v6h-7zm39 0h6v6h-6zm31 0h7v6h-7zm77 0h6v6h-6zm152 0h13v6h-13zm-724 6h6v7h-6zm44 0h7v7h-7zm13 0h7v7h-7zm26 0h6v7h-6zm101 0h7v7h-7zm38 0h7v7h-7zm121 0h6v7h-6zm25 0h13v7h-13zm89 0h7v7h-7zm146 0h7v7h-7zm70 0h6v7h-6zm38 0h19v7h-19zm-749 7h6v6h-6zm44 0h7v6h-7zm38 0h7v6h-7zm13 0h7v6h-7zm26 0h6v6h-6zm273 0h12v6h-12zm38 0h12v6h-12zm76 0h6v6h-6zm32 0h6v6h-6zm57 0h6v6h-6zm38 0h6v6h-6zm32 0h6v6h-6zm89 0h6v6h-6zm-712 6h7v6h-7zm45 0h6v6h-6zm44 0h7v6h-7zm210 0h6v6h-6zm63 0h7v6h-7zm26 0h6v6h-6zm12 0h7v6h-7zm204 0h6v6h-6zm-597 6h6v7h-6zm82 0h7v7h-7zm13 0h6v7h-6zm152 0h7v7h-7zm115 0h6v7h-6zm235 0h6v7h-6zm-566 7h13v6h-13zm64 0h6v6h-6zm108 0h6v6h-6zm32 0h6v6h-6zm171 0h6v6h-6zm184 0h7v6h-7zm127 0h7v6h-7zm-660 6h6v6h-6zm101 0h20v6h-20zm77 0h6v6h-6zm101 0h7v6h-7zm38 0h7v6h-7zm58 0h12v6h-12zm101 0h13v6h-13zm57 0h7v6h-7zm83 0h6v6h-6zm38 0h6v6h-6zm-743 6h13v7h-13zm171 0h7v7h-7zm26 0h13v7h-13zm95 0h6v7h-6zm273 0h6v7h-6zm178 0h6v7h-6zm-622 7h12v6h-12zm76 0h6v6h-6zm89 0h12v6h-12zm76 0h6v6h-6zm19 0h6v6h-6zm197 0h6v6h-6zm114 0h6v6h-6zm38 0h13v6h-13zm-749 6h6v6h-6zm133 0h7v6h-7zm19 0h7v6h-7zm597 0h7v6h-7zm-743 6h7v7h-7zm121 0h6v7h-6zm57 0h6v7h-6zm184 0h13v7h-13zm19 0h7v7h-7zm0 7h7v6h-7zm134 0h6v6h-6zm50 0h7v6h-7zm146 0h7v6h-7zm13 0h7v6h-7zm-743 6h7v7h-7zm165 0h7v7h-7zm197 0h7v7h-7zm172 0h6v7h-6zm196 0h7v7h-7zm51 0h7v7h-7zm-603 7h6v6h-6zm387 0h7v6h-7zm13 0h13v6h-13zm-610 6h7v6h-7zm-12 6h6v7h-6zm197 0h6v7h-6zm235 0h6v7h-6zm-413 7h6v6h-6zm184 0h6v6h-6zm13 0h6v6h-6zm419 0h6v6h-6zm-597 6h6v6h-6zm159 0h12v6h-12zm622 0h6v6h-6zm-794 6h7v7h-7zm216 0h6v7h-6zm-203 7h13v6h-13zm190 0h13v6h-13zm178 0h7v6h-7zm203 0h7v6h-7zm223 0h4v6h-4zm-832 6h6v6h-6zm197 0h6v6h-6zm38 0h6v6h-6zm552 0h7v6h-7zm13 0h6v6h-6zm19 0h6v6h-6zm13 0h4v6h-4zm-839 6h7v7h-7zm197 0h7v7h-7zm45 0h12v7h-12zm546 0h6v7h-6zm25 0h7v7h-7zm13 0h17v7h-17zm-800 7h6v6h-6zm165 0h13v6h-13zm432 0h6v6h-6zm25 0h6v6h-6zm159 0h6v6h-6zm19 0h6v6h-6zm-800 6h6v6h-6zm171 0h7v6h-7zm19 0h7v6h-7zm229 0h6v6h-6zm171 0h13v6h-13zm26 0h6v6h-6zm171 0h7v6h-7zm-628 6h6v7h-6zm254 0h19v7h-19zm203 0h6v7h-6zm19 0h6v7h-6zm-45 7h7v6h-7zm51 0h7v6h-7zm-476 6h6v6h-6zm63 0h13v6h-13zm115 0h12v6h-12zm70 0h6v6h-6zm146 0h6v6h-6zm12 0h7v6h-7zm13 0h6v6h-6zm13 0h12v6h-12zm-369 6h26v7h-26zm134 0h6v7h-6zm57 0h6v7h-6zm133 0h7v7h-7zm13 0h6v7h-6zm25 0h13v7h-13zm58 0h12v7h-12zm-528 7h7v6h-7zm64 0h6v6h-6zm38 0h6v6h-6zm25 0h7v6h-7zm64 0h13v6h-13zm102 0h12v6h-12zm146 0h19v6h-19zm63 0h6v6h-6zm45 0h6v6h-6zm-547 6h13v6h-13zm64 0h13v6h-13zm76 0h7v6h-7zm261 0h6v6h-6zm44 0h6v6h-6zm63 0h7v6h-7zm32 0h7v6h-7zm76 0h13v6h-13zm-806 6h13v7h-13zm25 0h7v7h-7zm70 0h13v7h-13zm95 0h7v7h-7zm153 0h6v7h-6zm133 0h7v7h-7zm76 0h7v7h-7z"/>
<path fill="rgb(222,222,222)" d="m72 0h6v2h-6zm235 0h6v2h-6zm247 0h7v2h-7zm-482 2h6v6h-6zm38 0h6v6h-6zm794 0h4v6h-4zm-832 6h12v6h-12zm0 6h6v7h-6zm216 0h6v7h-6zm-13 7h19v6h-19zm38 0h13v6h-13zm-209 12h6v7h-6zm215 0h7v7h-7zm356 0h6v7h-6zm0 7h13v6h-13zm-165 6h13v6h-13zm19 6h6v7h-6zm-229 7h7v6h-7zm-165 12h7v7h-7zm7 7h6v6h-6zm362 6h6v6h-6zm165 0h6v6h-6zm-400 6h6v7h-6zm247 0h13v7h-13zm146 0h7v7h-7zm-590 13h6v6h-6zm432 0h6v6h-6zm-439 6h13v7h-13zm286 0h7v7h-7zm-324 7h7v6h-7zm184 0h7v6h-7zm127 0h7v6h-7zm439 0h12v6h-12zm-458 6h7v7h-7zm77 0h6v7h-6zm120 0h7v7h-7zm-514 7h6v6h-6zm190 0h7v6h-7zm115 0h12v6h-12zm368 0h6v6h-6zm13 0h6v6h-6zm-375 6h6v6h-6zm-133 6h12v7h-12zm419 0h6v7h-6zm13 0h19v7h-19zm-426 7h6v6h-6zm413 0h6v6h-6zm13 0h6v6h-6zm88 0h19v6h-19zm108 0h7v6h-7zm58 0h6v6h-6zm-866 6h2v6h-2zm643 0h7v6h-7zm26 0h12v6h-12zm38 0h6v6h-6zm19 0h6v6h-6zm19 0h13v6h-13zm51 0h6v6h-6zm31 0h7v6h-7zm-514 6h6v7h-6zm114 0h7v7h-7zm134 0h6v7h-6zm82 0h7v7h-7zm19 0h7v7h-7zm70 0h26v7h-26zm95 0h13v7h-13zm32 0h7v7h-7zm-368 7h6v6h-6zm241 0h7v6h-7zm13 0h6v6h-6zm114 0h7v6h-7zm13 0h6v6h-6zm32 0h4v6h-4zm-781 6h6v6h-6zm127 0h6v6h-6zm196 0h13v6h-13zm280 0h13v6h-13zm19 0h6v6h-6zm108 0h6v6h-6zm-724 6h6v7h-6zm749 0h7v7h-7zm19 0h7v7h-7zm-806 13h6v6h-6zm622 0h6v6h-6zm-622 6h6v7h-6zm0 7h19v6h-19zm203 0h6v6h-6zm597 0h13v6h-13zm-781 6h6v6h-6zm184 0h6v6h-6zm178 0h6v6h-6zm38 0h6v6h-6zm375 0h6v6h-6zm-781 13h6v6h-6zm609 0h6v6h-6zm-609 6h6v6h-6zm19 6h6v7h-6zm463 0h6v7h-6zm-470 7h7v6h-7zm578 0h6v6h-6zm13 0h6v6h-6zm-584 6h12v7h-12zm762 19h6v7h-6zm-7 7h7v6h-7zm-203 6h6v6h-6zm-368 6h6v7h-6zm368 0h6v7h-6zm229 0h4v7h-4zm-686 7h13v6h-13zm32 0h12v6h-12zm190 0h6v6h-6zm184 0h13v6h-13zm280 0h4v6h-4zm-686 6h6v6h-6zm32 0h12v6h-12zm82 0h6v6h-6zm349 0h7v6h-7zm223 0h4v6h-4zm-743 6h6v7h-6zm12 0h7v7h-7zm45 0h6v7h-6zm-57 7h12v6h-12zm374 0h7v6h-7zm13 0h13v6h-13zm127 0h6v6h-6zm102 0h6v6h-6zm-527 6h12v6h-12zm279 0h6v6h-6zm19 0h6v6h-6zm127 0h6v6h-6zm-406 6h6v7h-6zm-83 7h13v6h-13zm45 6h6v6h-6zm469 0h13v6h-13zm-482 6h6v7h-6zm292 0h6v7h-6zm44 0h7v7h-7zm280 0h6v7h-6zm12 0h7v7h-7zm-577 13h12v6h-12zm44 0h6v6h-6zm-184 6h6v7h-6zm724 7h6v6h-6zm-756 6h7v7h-7zm603 0h7v7h-7zm7 7h6v6h-6zm-616 6h6v6h-6zm0 6h13v7h-13zm806 7h11v6h-11zm0 6h11v6h-11zm-31 13h6v6h-6zm-750 6h7v6h-7zm750 0h6v6h-6zm31 0h7v6h-7zm-628 13h6v6h-6zm609 0h13v6h-13zm-603 6h6v6h-6zm438 0h13v6h-13zm-38 6h13v7h-13zm38 0h13v7h-13zm-203 7h13v6h-13zm375 0h6v6h-6zm-572 6h6v6h-6zm343 0h6v6h-6zm76 0h7v6h-7zm95 0h7v6h-7zm-393 6h6v7h-6zm266 0h7v7h-7zm51 0h7v7h-7zm70 0h13v7h-13zm-821 7h8v6h-8zm700 0h13v6h-13zm51 0h7v6h-7zm76 0h7v6h-7zm-827 6h2v6h-2zm643 0h7v6h-7zm57 0h7v6h-7zm-700 6h2v7h-2zm707 0h6v7h-6zm19 0h6v7h-6z"/>
<path fill="rgb(225,225,225)" d="m78 0h19v2h-19zm0 2h6v6h-6zm203 25h7v6h-7zm45 0h6v6h-6zm-248 32h6v6h-6zm-13 44h7v6h-7zm273 0h7v6h-7zm-50 6h6v7h-6zm57 0h6v7h-6zm425 0h7v7h-7zm-770 13h2v7h-2zm313 0h6v7h-6zm-6 13h6v6h-6zm311 0h6v6h-6zm89 6h6v7h-6zm-707 7h2v6h-2zm561 6h6v6h-6zm-140 6h6v7h-6zm133 0h7v7h-7zm102 0h6v7h-6zm197 0h6v7h-6zm-197 7h6v6h-6zm19 0h6v6h-6zm51 0h6v6h-6zm127 0h6v6h-6zm-184 6h12v6h-12zm228 0h11v6h-11zm-813 25h7v7h-7zm807 13h6v6h-6zm-349 108h6v6h-6zm-229 32h6v6h-6zm-32 51h7v6h-7zm623 12h4v7h-4zm-204 38h7v7h-7zm-260 19h6v7h-6zm210 0h6v7h-6zm171 7h6v6h-6zm-603 12h6v7h-6zm349 0h6v7h-6zm127 0h6v7h-6z"/>
<path fill="rgb(228,228,228)" d="m84 2h7v6h-7zm-84 139h2v7h-2zm662 26h13v6h-13zm-222 120h6v7h-6zm267 89h6v7h-6zm-7 114h7v7h-7z"/>
<path fill="rgb(234,234,234)" d="m586 224h6v6h-6z"/>
<path fill="rgb(237,237,237)" d="m389 243h7v6h-7z"/>
<path fill="rgb(240,240,240)" d="m402 243h6v6h-6z"/>
<path fill="rgb(248,248,248)" d="m389 217h7v7h-7zm-6 7h6v6h-6zm222 6h7v6h-7zm-222 6h6v7h-6zm25 0h7v7h-7zm184 0h13v7h-13zm-196 7h6v6h-6z"/>
<path fill="rgb(255,255,255)" d="m396 217h12v7h-12zm-7 7h26v6h-26zm203 0h13v6h-13zm-209 6h32v6h-32zm203 0h19v6h-19zm-197 6h19v7h-19z"/></svg>
<div style="left:2px;top:145px;width:130px;height:62px;background:rgba(0,0,0,.23)"></div>
<div style="left:9px;top:666px;width:26px;height:26px;background:#ccc;border:1px solid #bfbfbf;box-sizing:border-box"></div>
<div style="left:9px;top:700px;width:26px;height:26px;background:#ccc;border:1px solid #bfbfbf;box-sizing:border-box"></div>
<div style="left:9px;top:734px;width:26px;height:26px;background:#e1e1e1;border:1px solid #adadad;box-sizing:border-box"></div>
<div style="left:9px;top:768px;width:26px;height:26px;background:#ccc;border:1px solid #bfbfbf;box-sizing:border-box"></div>
<svg style="left:9px;top:666px" width="26" height="26" viewBox="0 0 26 26"><path d="M6.300 6.200l13.600 13.200m0-13.200l-13.600 13.200" stroke="#a2a2a2" stroke-width="3.300" fill="none" stroke-linecap="round"/></svg>
<svg style="left:9px;top:700px" width="26" height="26" viewBox="0 0 26 26"><path d="M4.500 5.800l11 11.200m0-11.200l-11 11.200" stroke="#bcbcbc" stroke-width="2.400" fill="none" stroke-linecap="round"/><path d="M9.500 7.800l11.600 11.200m0-11.200l-11.600 11.200" stroke="#a0a0a0" stroke-width="3.200" fill="none" stroke-linecap="round"/></svg>
<svg style="left:9px;top:734px" width="26" height="26" viewBox="0 0 26 26"><path d="M10 4.700h6v5.800h5.700v6h-5.700v5.800h-6v-5.800h-5.700v-6h5.700z" fill="#f4a720" stroke="#3a3428" stroke-width="1.100" stroke-linejoin="round"/></svg>
<svg style="left:9px;top:768px" width="26" height="26" viewBox="0 0 26 26"><rect x="5.800" y="11.100" width="14.400" height="4.200" rx="1.200" fill="#9a9a9a"/></svg>
<div style="left:39px;top:682px;width:565px;height:119px;background:#fff;border:1px solid #dcdcdc;box-sizing:border-box"></div>
<div style="left:39px;top:662px;width:53px;height:21px;background:#fff;border:1px solid #dcdcdc;border-bottom:none;box-sizing:border-box"></div>
<div style="left:46px;top:687px;width:554px;height:108px;background:#fff;border:1px solid #000;box-sizing:border-box;box-shadow:inset 1px 1px 0 0 rgba(0,0,0,.55)"></div>
<div style="left:71px;top:709px;width:1px;height:85px;background:#a0a0a0"></div>
<div style="left:171px;top:709px;width:1px;height:85px;background:#a0a0a0"></div>
<div style="left:271px;top:709px;width:1px;height:85px;background:#a0a0a0"></div>
<div style="left:371px;top:709px;width:1px;height:85px;background:#a0a0a0"></div>
<div style="left:471px;top:709px;width:1px;height:85px;background:#a0a0a0"></div>
<div style="left:571px;top:709px;width:1px;height:85px;background:#a0a0a0"></div>
<div style="left:171px;top:689px;width:1px;height:19px;background:#e3e3e3"></div>
<div style="left:271px;top:689px;width:1px;height:19px;background:#e3e3e3"></div>
<div style="left:371px;top:689px;width:1px;height:19px;background:#e3e3e3"></div>
<div style="left:471px;top:689px;width:1px;height:19px;background:#e3e3e3"></div>
<div style="left:571px;top:689px;width:1px;height:19px;background:#e3e3e3"></div>
<div style="left:71px;top:688px;width:1px;height:21px;background:#a0a0a0"></div>
<div style="left:72px;top:708px;width:500px;height:1px;background:#a0a0a0"></div>
<div style="left:72px;top:730px;width:500px;height:1px;background:#a0a0a0"></div>
<div style="left:72px;top:752px;width:500px;height:1px;background:#a0a0a0"></div>
<div style="left:72px;top:774px;width:500px;height:1px;background:#a0a0a0"></div>
<div style="left:47px;top:730px;width:24px;height:1px;background:#dadada"></div>
<div style="left:47px;top:752px;width:24px;height:1px;background:#dadada"></div>
<div style="left:47px;top:774px;width:24px;height:1px;background:#dadada"></div>
<div style="left:47px;top:708px;width:24px;height:1px;background:#a0a0a0"></div>
<div style="left:572px;top:688px;width:10px;height:106px;background:#ababab"></div>
<div style="left:582px;top:688px;width:17px;height:106px;background:#f0f0f0"></div>
<div style="left:583px;top:734px;width:15px;height:17px;background:#cdcdcd"></div>
<svg style="left:586.5px;top:694px" width="9" height="6" viewBox="0 0 9 6"><path d="M0.8 5l3.7-3.8 3.7 3.8" fill="none" stroke="#404040" stroke-width="1.5"/></svg>
<svg style="left:586.5px;top:783px" width="9" height="6" viewBox="0 0 9 6"><path d="M0.8 1l3.7 3.8 3.7-3.8" fill="none" stroke="#404040" stroke-width="1.5"/></svg>
<div style="left:72px;top:709px;width:99px;height:21px;background:#0078d7"></div>
<svg style="left:54px;top:716px" width="6" height="10" viewBox="0 0 6 10"><path d="M0 0l5.4 4.8L0 9.6z" fill="#333"/></svg>
<svg style="left:9px;top:814px" width="16" height="16" viewBox="0 0 16 16"><circle cx="8" cy="8" r="7.4" fill="#1e8be2"/><text x="8" y="12.700" text-anchor="middle" font-family="Liberation Sans, sans-serif" font-weight="bold" font-size="13.400" fill="#fff">?</text></svg>
<div style="left:821px;top:812px;width:79px;height:21px;background:#e1e1e1;border:1px solid #adadad;box-sizing:border-box"></div>
<div style="left:908px;top:812px;width:79px;height:21px;background:#e1e1e1;border:1px solid #adadad;box-sizing:border-box"></div>
<div style="left:995px;top:812px;width:79px;height:21px;background:#ccc;border:1px solid #bfbfbf;box-sizing:border-box"></div>
<div style="left:1082px;top:812px;width:79px;height:21px;background:#e1e1e1;border:1px solid #adadad;box-sizing:border-box"></div>
<div style="left:914px;top:105px;width:256px;height:100px;background:#fff;border:1px solid #646464;box-sizing:border-box"></div>
<div style="left:915px;top:106px;width:253px;height:27px;background:linear-gradient(180deg,#fdfdfd,#f8f8f8 60%,#f1f1f1)"></div>
<div style="left:990px;top:111px;width:1px;height:17px;background:#c4c4c4"></div>
<div style="left:915px;top:133px;width:237px;height:55px;background:#a9a9a9;border:1px solid #000;box-sizing:border-box"></div>
<div style="left:1152px;top:133px;width:16px;height:71px;background:#f0f0f0"></div>
<svg style="left:1156px;top:139.5px" width="9" height="6" viewBox="0 0 9 6"><path d="M0.8 5l3.7-3.8 3.7 3.8" fill="none" stroke="#b0b0b0" stroke-width="1.5"/></svg>
<svg style="left:1156px;top:193px" width="9" height="6" viewBox="0 0 9 6"><path d="M0.8 1l3.7 3.8 3.7-3.8" fill="none" stroke="#b0b0b0" stroke-width="1.5"/></svg>
<svg style="left:923px;top:138px" width="46" height="46" viewBox="0 0 46 46"><defs><pattern id="dp" width="2" height="2" patternUnits="userSpaceOnUse"><rect width="2" height="2" fill="#cfcfcf"/><rect x="1" y="1" width="1" height="1" fill="#2e2e2e"/></pattern><radialGradient id="dg" cx="0.5" cy="0.45" r="0.6"><stop offset="0" stop-color="#000" stop-opacity="0.28"/><stop offset="0.6" stop-color="#000" stop-opacity="0.12"/><stop offset="1" stop-color="#000" stop-opacity="0"/></radialGradient></defs><g shape-rendering="crispEdges"><rect width="46" height="46" fill="url(#dp)"/></g><rect width="46" height="46" fill="url(#dg)"/></svg>
<div style="left:978px;top:175.5px;width:129px;height:1px;background:#000;height:1.1px"></div>
<svg style="left:918px;top:113px" width="18" height="16" viewBox="0 0 18 16"><path d="M2 1h4.800l1.900 2.100H16.800V13.400H2z" fill="#e4c494"/><path d="M4.600 1.200l3.300 1.900" stroke="#9a5b1e" stroke-width="0.900"/><path d="M9.300 9.300h5.400M12 6.600v5.400" stroke="#8a4a12" stroke-width="1.100"/></svg>
<svg style="left:942px;top:113px" width="18" height="16" viewBox="0 0 18 16"><path d="M2 1h4.800l1.900 2.100H16.800V13.400H2z" fill="#e4c494"/><path d="M4.600 1.200l3.300 1.900" stroke="#9a5b1e" stroke-width="0.900"/><path d="M9.300 9.300h5.400M12 6.600v5.400" stroke="#8a4a12" stroke-width="1.100"/><path d="M0.900 8.200h7M0.900 10.900h7M0.900 13.600h7" stroke="#3b9ad8" stroke-width="1.700"/><path d="M2 14.500v1" stroke="#777" stroke-width="0.800"/></svg>
<svg style="left:967px;top:111px" width="17" height="17" viewBox="0 0 17 17"><path d="M2.500 2.800l11.600 10.900M14.100 2.800L2.500 13.700" stroke="#ee3b36" stroke-width="3" stroke-linecap="round"/></svg>
<svg style="left:1135px;top:115px" width="18" height="8" viewBox="0 0 18 8" shape-rendering="crispEdges"><rect x="0" y="0" width="7" height="7.500" fill="#4a4a4a"/><rect x="1" y="1.500" width="2" height="2" fill="#e8e8e8"/><rect x="9" y="0.700" width="9" height="1.300" fill="#4a4a4a"/><rect x="11" y="6" width="7" height="1.300" fill="#4a4a4a"/></svg>
<svg style="left:1160px;top:118px" width="5" height="3" viewBox="0 0 5 3"><path d="M0 0h5L2.5 3z" fill="#000"/></svg>
<div style="left:915px;top:229px;width:253px;height:578px;background:#fff;border:1px solid #dcdcdc;box-sizing:border-box"></div>
<div style="left:916px;top:211px;width:64px;height:19px;background:#f0f0f0;border:1px solid #d9d9d9;border-bottom:none;box-sizing:border-box"></div>
<div style="left:979px;top:210px;width:105px;height:20px;background:#fff;border:1px solid #dcdcdc;border-bottom:none;box-sizing:border-box"></div>
<div style="left:921px;top:234px;width:242px;height:567px;background:#f0f0f0;border:1px solid #7a7a7a;box-sizing:border-box;box-shadow:inset 0 1px 0 #fff"></div>
<div style="left:1144px;top:235px;width:1px;height:565px;background:#f7f7f7"></div>
<svg style="left:1148.5px;top:242px" width="9" height="6" viewBox="0 0 9 6"><path d="M0.8 5l3.7-3.8 3.7 3.8" fill="none" stroke="#b5b5b5" stroke-width="1.5"/></svg>
<svg style="left:1148.5px;top:789px" width="9" height="6" viewBox="0 0 9 6"><path d="M0.8 1l3.7 3.8 3.7-3.8" fill="none" stroke="#b5b5b5" stroke-width="1.5"/></svg>
<pre id="stats" style="left:927.6px;top:238.3px;margin:0;font-family:Liberation Mono,monospace;font-size:10.6px;letter-spacing:-0.36px;line-height:13px;color:#000">Total Reprojection Error
----------------------
Image (RMS):    0.08 [px]
World (RMS):    0.00 [mm]

Grids Statistics
----------------------
Computed Grid Spacing: 20.00 [mm]

[Grid 1.1]
Rotation:               0.00 [deg]
Translation:
          X:            0.00 [mm]
          Y:            0.00 [mm]
Max Repr. Error:        0.19 [px]

Homography Matrix
----------------------
     1.56      0.05    390.66
     0.01      1.63    700.11
     0.00      0.00      1.00</pre>
<span class="t" id="t0" style="left:31.2px;top:10.00px;font-size:12px;line-height:14px;color:#999;transform:scaleX(1.0091);">inRectificationMap - Calibration Editor</span>
<span class="t" id="t1" style="left:7.3px;top:31.80px;font-size:22px;line-height:25px;color:#000;transform:scaleX(0.9771);">Computing Rectification Map</span>
<span class="t" id="t2" style="left:51.6px;top:75.20px;font-size:12px;line-height:14px;color:#000;transform:scaleX(0.8453);">Camera Calibration</span>
<span class="t" id="t3" style="left:212.4px;top:75.20px;font-size:12px;line-height:14px;color:#000;transform:scaleX(0.8722);">World to Image Transform</span>
<span class="t" id="t4" style="left:404.4px;top:75.20px;font-size:12px;line-height:14px;color:#000;transform:scaleX(0.8814);">Rectification Map Generation</span>
<span class="t" id="t5" style="left:158.2px;top:117.60px;font-size:12px;line-height:14px;color:#000;transform:scaleX(0.8753);">Scale:</span>
<span class="t" id="t6" style="left:196.2px;top:117.60px;font-size:12px;line-height:14px;color:#000;transform:scaleX(0.9109);">635 %</span>
<span class="t" id="t7" style="left:12.8px;top:154.80px;font-size:12px;line-height:14px;color:#8be68b;transform:scaleX(0.9097);">Name: cam1_grid.png</span>
<span class="t" id="t8" style="left:12.8px;top:168.70px;font-size:12px;line-height:14px;color:#8be68b;transform:scaleX(0.9124);">Size: 750x750</span>
<span class="t" id="t9" style="left:12.8px;top:182.50px;font-size:12px;line-height:14px;color:#8be68b;transform:scaleX(0.9067);">X: 456.52 Y: 734.75</span>
<span class="t" id="t10" style="left:32.2px;top:645.80px;font-size:11px;line-height:12px;color:#000;transform:scaleX(0.9585);">Selected Points:</span>
<span class="t" id="t11" style="left:46.7px;top:665.60px;font-size:11px;line-height:12px;color:#000;transform:scaleX(0.9274);">Grid 1.1</span>
<span class="t" id="t12" style="left:79.4px;top:693.40px;font-size:11px;line-height:12px;color:#000;transform:scaleX(0.9374);">Image X [px]</span>
<span class="t" id="t13" style="left:179.4px;top:693.40px;font-size:11px;line-height:12px;color:#000;transform:scaleX(0.9453);">Image Y [px]</span>
<span class="t" id="t14" style="left:279.4px;top:693.40px;font-size:11px;line-height:12px;color:#000;transform:scaleX(0.9530);">World X [mm]</span>
<span class="t" id="t15" style="left:379.4px;top:693.40px;font-size:11px;line-height:12px;color:#000;transform:scaleX(0.9617);">World Y [mm]</span>
<span class="t" id="t16" style="left:479.4px;top:693.40px;font-size:11px;line-height:12px;color:#000;transform:scaleX(0.9285);">Error [px]</span>
<span class="t" id="t17" style="left:75.4px;top:713.40px;font-size:11px;line-height:12px;color:#fff;transform:scaleX(0.9686);">468,77</span>
<span class="t" id="t18" style="left:175.4px;top:713.40px;font-size:11px;line-height:12px;color:#7f7f7f;transform:scaleX(0.9686);">428,06</span>
<span class="t" id="t19" style="left:275.4px;top:713.40px;font-size:11px;line-height:12px;color:#000;transform:scaleX(0.9662);">40,00</span>
<span class="t" id="t20" style="left:375.4px;top:713.40px;font-size:11px;line-height:12px;color:#000;transform:scaleX(0.9434);">-180,00</span>
<span class="t" id="t21" style="left:475.4px;top:713.40px;font-size:11px;line-height:12px;color:#7f7f7f;transform:scaleX(0.9803);">0,07</span>
<span class="t" id="t22" style="left:75.4px;top:735.40px;font-size:11px;line-height:12px;color:#7f7f7f;transform:scaleX(0.9686);">501,75</span>
<span class="t" id="t23" style="left:175.4px;top:735.40px;font-size:11px;line-height:12px;color:#7f7f7f;transform:scaleX(0.9686);">428,30</span>
<span class="t" id="t24" style="left:275.4px;top:735.40px;font-size:11px;line-height:12px;color:#000;transform:scaleX(0.9662);">60,00</span>
<span class="t" id="t25" style="left:375.4px;top:735.40px;font-size:11px;line-height:12px;color:#000;transform:scaleX(0.9434);">-180,00</span>
<span class="t" id="t26" style="left:475.4px;top:735.40px;font-size:11px;line-height:12px;color:#7f7f7f;transform:scaleX(0.9803);">0,04</span>
<span class="t" id="t27" style="left:75.4px;top:757.40px;font-size:11px;line-height:12px;color:#7f7f7f;transform:scaleX(0.9686);">534,70</span>
<span class="t" id="t28" style="left:175.4px;top:757.40px;font-size:11px;line-height:12px;color:#7f7f7f;transform:scaleX(0.9686);">428,55</span>
<span class="t" id="t29" style="left:275.4px;top:757.40px;font-size:11px;line-height:12px;color:#000;transform:scaleX(0.9662);">80,00</span>
<span class="t" id="t30" style="left:375.4px;top:757.40px;font-size:11px;line-height:12px;color:#000;transform:scaleX(0.9434);">-180,00</span>
<span class="t" id="t31" style="left:475.4px;top:757.40px;font-size:11px;line-height:12px;color:#7f7f7f;transform:scaleX(0.9803);">0,06</span>
<span class="t" id="t32" style="left:75.4px;top:779.40px;font-size:11px;line-height:12px;color:#7f7f7f;transform:scaleX(0.9686);">567,84</span>
<span class="t" id="t33" style="left:175.4px;top:779.40px;font-size:11px;line-height:12px;color:#7f7f7f;transform:scaleX(0.9686);">428,80</span>
<span class="t" id="t34" style="left:275.4px;top:779.40px;font-size:11px;line-height:12px;color:#000;transform:scaleX(0.9686);">100,00</span>
<span class="t" id="t35" style="left:375.4px;top:779.40px;font-size:11px;line-height:12px;color:#000;transform:scaleX(0.9434);">-180,00</span>
<span class="t" id="t36" style="left:475.4px;top:779.40px;font-size:11px;line-height:12px;color:#7f7f7f;transform:scaleX(0.9803);">0,07</span>
<span class="t" id="t37" style="left:621.8px;top:662.90px;font-size:11px;line-height:12px;color:#000;transform:scaleX(0.9571);">Use the spreadsheet to manually enter coordinates in world</span>
<span class="t" id="t38" style="left:621.8px;top:675.90px;font-size:11px;line-height:12px;color:#000;transform:scaleX(0.9538);">plane.</span>
<span class="t" id="t39" style="left:621.8px;top:688.90px;font-size:11px;line-height:12px;color:#000;transform:scaleX(0.9564);">Empty points will be calculated automatically based on</span>
<span class="t" id="t40" style="left:621.8px;top:701.90px;font-size:11px;line-height:12px;color:#000;transform:scaleX(0.9623);">entered points before computing. If there aren&#x27;t any entered</span>
<span class="t" id="t41" style="left:621.8px;top:714.90px;font-size:11px;line-height:12px;color:#000;transform:scaleX(0.9691);">points, default points locations will be accepted.</span>
<span class="t" id="t42" style="left:621.8px;top:740.90px;font-size:11px;line-height:12px;color:#000;transform:scaleX(0.9623);">In table columns World X, World Y represents points in the</span>
<span class="t" id="t43" style="left:621.8px;top:753.90px;font-size:11px;line-height:12px;color:#000;transform:scaleX(0.9434);">world space in mm.</span>
<span class="t" id="t44" style="left:834.9px;top:816.50px;font-size:11px;line-height:12px;color:#000;transform:scaleX(0.9525);">&lt; Previous</span>
<span class="t" id="t45" style="left:931.3px;top:816.50px;font-size:11px;line-height:12px;color:#000;transform:scaleX(0.9655);">Next &gt;</span>
<span class="t" id="t46" style="left:1026.0px;top:816.50px;font-size:11px;line-height:12px;color:#838383;transform:scaleX(0.9807);">OK</span>
<span class="t" id="t47" style="left:1104.3px;top:816.50px;font-size:11px;line-height:12px;color:#000;transform:scaleX(0.9635);">Cancel</span>
<span class="t" id="t48" style="left:977.8px;top:138.30px;font-size:11px;line-height:12px;color:#000;font-weight:bold;transform:scaleX(1.0607);">cam1_grid.png</span>
<span class="t" id="t49" style="left:978px;top:164.30px;font-size:11px;line-height:12px;color:#000;transform:scaleX(1.0241);">..\ media\image_stitching...</span>
<span class="t" id="t50" style="left:922.3px;top:214.90px;font-size:11px;line-height:12px;color:#000;transform:scaleX(0.9145);">Parameters</span>
<span class="t" id="t51" style="left:991.5px;top:212.80px;font-size:11px;line-height:12px;color:#000;transform:scaleX(0.9337);">Results &amp; Statistics</span>
<svg style="left:0;top:0;pointer-events:none" width="1168" height="845" viewBox="0 0 1168 845"><defs><clipPath id="ic"><rect x="2" y="145" width="908" height="497"/></clipPath></defs><g clip-path="url(#ic)">
<path d="M4 190h12M10 184v12" stroke="#2ecc40" stroke-width="2" fill="none" shape-rendering="crispEdges"/>
<path d="M204 191h12M210 185v12" stroke="#2ecc40" stroke-width="2" fill="none" shape-rendering="crispEdges"/>
<path d="M404 193h12M410 187v12" stroke="#2ecc40" stroke-width="2" fill="none" shape-rendering="crispEdges"/>
<path d="M604 195h12M610 189v12" stroke="#2ecc40" stroke-width="2" fill="none" shape-rendering="crispEdges"/>
<path d="M803 196h12M809 190v12" stroke="#2ecc40" stroke-width="2" fill="none" shape-rendering="crispEdges"/>
<path d="M-2 373h12M4 367v12" stroke="#2ecc40" stroke-width="2" fill="none" shape-rendering="crispEdges"/>
<path d="M198 375h12M204 369v12" stroke="#2ecc40" stroke-width="2" fill="none" shape-rendering="crispEdges"/>
<path d="M396 376h12M402 370v12" stroke="#1e90ff" stroke-width="2" fill="none" shape-rendering="crispEdges"/>
<path d="M595 377h12M601 371v12" stroke="#1e90ff" stroke-width="2" fill="none" shape-rendering="crispEdges"/>
<path d="M794 379h12M800 373v12" stroke="#2ecc40" stroke-width="2" fill="none" shape-rendering="crispEdges"/>
<path d="M-7 555h12M-1 549v12" stroke="#2ecc40" stroke-width="2" fill="none" shape-rendering="crispEdges"/>
<path d="M190 556h12M196 550v12" stroke="#2ecc40" stroke-width="2" fill="none" shape-rendering="crispEdges"/>
<path d="M388 557h12M394 551v12" stroke="#2ecc40" stroke-width="2" fill="none" shape-rendering="crispEdges"/>
<path d="M585 559h12M591 553v12" stroke="#2ecc40" stroke-width="2" fill="none" shape-rendering="crispEdges"/>
<path d="M783 561h12M789 555v12" stroke="#2ecc40" stroke-width="2" fill="none" shape-rendering="crispEdges"/>
<path d="M9.6 190.5L15.6 184.6L14.6 192z" fill="#e8100c"/>
<path d="M208 189L215.2 191.7L210 197z" fill="#e8100c"/>
<path d="M406 193.1L411.9 190.1L411.9 196z" fill="#e8100c"/>
<path d="M610.0 195.0L614.7 173.9" stroke="#e8100c" stroke-width="1.8"/><path d="M616.2 167.1L617.4 174.5L611.9 173.3z" fill="#e8100c"/>
<path d="M809.0 196.0L814.7 190.7" stroke="#e8100c" stroke-width="1.8"/><path d="M819.9 186.0L816.6 192.8L812.8 188.7z" fill="#e8100c"/>
<path d="M2 376.5L8.2 372.7L8.8 381z" fill="#e8100c"/>
<path d="M204.0 375.0L196.3 367.9" stroke="#e8100c" stroke-width="1.8"/><path d="M191.2 363.1L198.2 365.8L194.4 369.9z" fill="#e8100c"/>
<path d="M399 376.6L404.9 375.3L404.3 382.7z" fill="#e8100c"/>
<path d="M601.0 377.0L589.5 388.6" stroke="#e8100c" stroke-width="1.8"/><path d="M584.6 393.6L587.5 386.7L591.5 390.6z" fill="#e8100c"/>
<path d="M800.0 379.0L786.5 385.4" stroke="#e8100c" stroke-width="1.8"/><path d="M780.2 388.4L785.3 382.9L787.7 387.9z" fill="#e8100c"/>
<path d="M193 551.9L199.9 555.9L194 559.8z" fill="#e8100c"/>
<path d="M394.0 557.0L392.0 568.0" stroke="#e8100c" stroke-width="1.8"/><path d="M390.8 574.9L389.3 567.5L394.8 568.5z" fill="#e8100c"/>
<path d="M589.7 554.8L586 559.8L593.8 560.5z" fill="#e8100c"/>
<path d="M787 558.6L793.8 556.2L791.6 563.8z" fill="#e8100c"/>
</g>
<path d="M203.8 385.5L168.2 696.2" stroke="#ff0000" stroke-width="2.7" stroke-linecap="round"/><path d="M166.5 710.6L163.4 695.6L172.9 696.7z" fill="#ff0000"/>
<path d="M389.7 405.6L319.6 717.4" stroke="#ff0000" stroke-width="2.7" stroke-linecap="round"/><path d="M316.4 731.5L314.9 716.3L324.3 718.4z" fill="#ff0000"/>
<path d="M587.8 401.9L422.9 747.4" stroke="#ff0000" stroke-width="2.7" stroke-linecap="round"/><path d="M416.7 760.5L418.6 745.3L427.3 749.5z" fill="#ff0000"/>
<path d="M793.0 396.6L534.9 772.1" stroke="#ff0000" stroke-width="2.7" stroke-linecap="round"/><path d="M526.7 784.1L531.0 769.4L538.9 774.9z" fill="#ff0000"/>
</svg>
</div></body></html>
